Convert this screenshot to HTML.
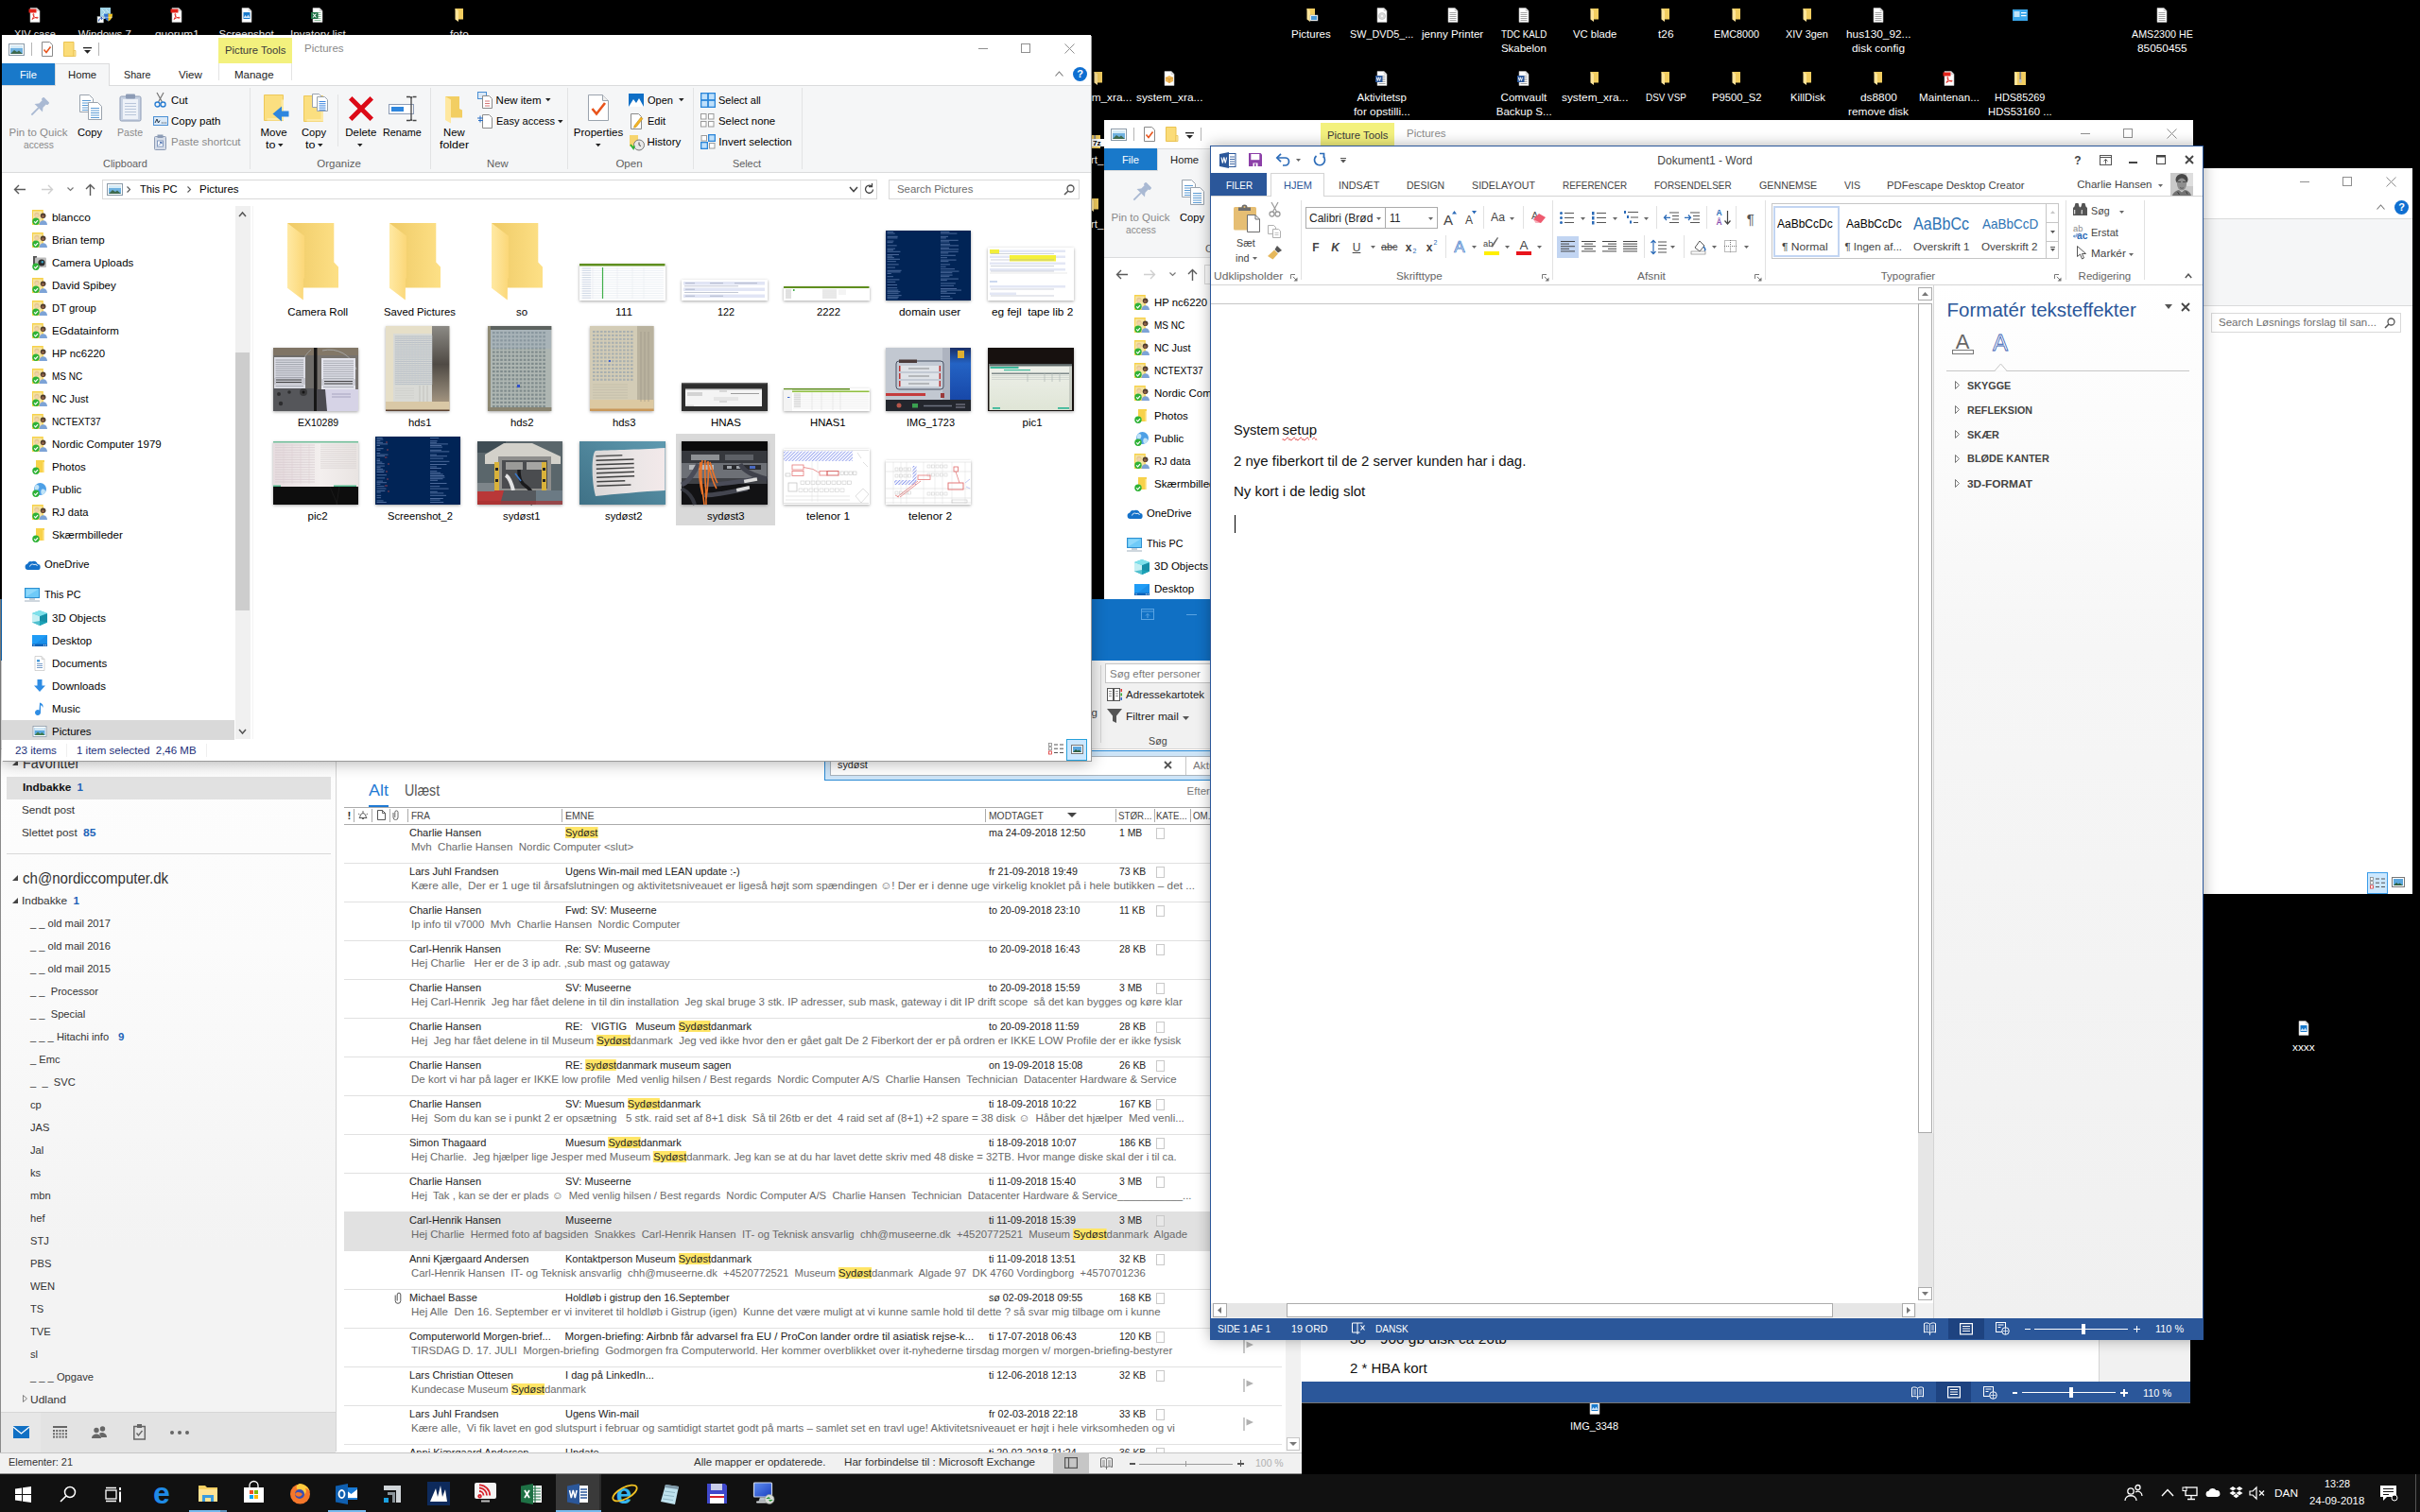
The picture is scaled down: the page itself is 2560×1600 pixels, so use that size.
<!DOCTYPE html>
<html lang="da"><head><meta charset="utf-8"><title>Desktop</title><style>
html,body{margin:0;padding:0;background:#000;}
body{width:2560px;height:1600px;position:relative;overflow:hidden;font-family:"Liberation Sans",sans-serif;}
.a{position:absolute;overflow:hidden;}
svg.a{overflow:visible;}
.t{position:absolute;white-space:pre;line-height:1;transform-origin:0 50%;}
</style></head><body>
<div class="a" style="left:0px;top:0px;width:2560px;height:1600px;background:#000;">
<svg class="a" style="left:29px;top:8px;" width="16" height="16" viewBox="0 0 16 16"><path d="M3 .5h7l3 3V15.5H3z" fill="#fff" stroke="#b9b9b9" stroke-width=".6"/><path d="M10 .5v3h3" fill="#e4e4e4" stroke="#b9b9b9" stroke-width=".5"/><rect x="1.5" y="1.5" width="8" height="4" fill="#e2231a"/><path d="M5 12.5c1.5-2 2-4 1.8-5.5-.3-1-1.2-.4-.8.8.6 1.8 2.4 3.4 4.6 3.4 1 0 .8-1-.4-.9-1.900.2-4 1-5.2 2.200z" fill="none" stroke="#e2231a" stroke-width=".9"/></svg>
<span class="t" style="left:15.02px;top:30.87px;font-size:11.5px;color:#fff;transform:scaleX(0.95);text-shadow:0 1px 2px rgba(0,0,0,.9);">XIV case</span>
<svg class="a" style="left:103px;top:8px;" width="16" height="16" viewBox="0 0 16 16"><rect x="3" y="0" width="11" height="12" fill="#9fd3e6"/><path d="M5 2l3 3-3 3M9 2l3 3" stroke="#d9f1f8" stroke-width=".8" fill="none"/><path d="M11.500 6c1.500 1 3 1 4.500.5 0 4-1.500 6.500-4.500 8-3-1.500-4.500-4-4.500-8 1.500.5 3 .5 4.500-.5z" fill="#2f6fd0"/><path d="M11.500 6v8.500c3-1.500 4.500-4 4.500-8-1.500.5-3 .5-4.500-.5z" fill="#f2c21a"/><path d="M7 10.300h9" stroke="#fff" stroke-width=".5"/><rect x="0" y="9.500" width="6.500" height="6.500" fill="#fff" stroke="#9aa" stroke-width=".5"/><path d="M1.500 14.500c0-2.500 1.500-3.500 3.500-3.500M3.500 10l1.800 1-1 1.800" stroke="#1f4fb0" stroke-width="1" fill="none"/></svg>
<span class="t" style="left:82.66px;top:30.87px;font-size:11.5px;color:#fff;text-shadow:0 1px 2px rgba(0,0,0,.9);">Windows 7</span>
<svg class="a" style="left:179px;top:8px;" width="16" height="16" viewBox="0 0 16 16"><path d="M3 .5h7l3 3V15.5H3z" fill="#fff" stroke="#b9b9b9" stroke-width=".6"/><path d="M10 .5v3h3" fill="#e4e4e4" stroke="#b9b9b9" stroke-width=".5"/><rect x="1.5" y="1.5" width="8" height="4" fill="#e2231a"/><path d="M5 12.5c1.5-2 2-4 1.8-5.5-.3-1-1.2-.4-.8.8.6 1.8 2.4 3.4 4.6 3.4 1 0 .8-1-.4-.9-1.900.2-4 1-5.2 2.200z" fill="none" stroke="#e2231a" stroke-width=".9"/></svg>
<span class="t" style="left:163.62px;top:30.87px;font-size:11.5px;color:#fff;transform:scaleX(1.03);text-shadow:0 1px 2px rgba(0,0,0,.9);">quorum1</span>
<svg class="a" style="left:253px;top:8px;" width="16" height="16" viewBox="0 0 16 16"><path d="M3 .5h7l3 3V15.5H3z" fill="#fff" stroke="#b9b9b9" stroke-width=".6"/><path d="M10 .5v3h3" fill="#e4e4e4" stroke="#b9b9b9" stroke-width=".5"/><rect x="4.500" y="5" width="7" height="7" fill="#1979ca"/><path d="M4.500 11l2-3 1.500 2 1.500-2.500 2 3.500z" fill="#cfe6fa"/></svg>
<span class="t" style="left:231.62px;top:30.87px;font-size:11.5px;color:#fff;text-shadow:0 1px 2px rgba(0,0,0,.9);">Screenshot</span>
<svg class="a" style="left:328px;top:8px;" width="16" height="16" viewBox="0 0 16 16"><path d="M3 .5h7l3 3V15.5H3z" fill="#fff" stroke="#b9b9b9" stroke-width=".6"/><path d="M10 .5v3h3" fill="#e4e4e4" stroke="#b9b9b9" stroke-width=".5"/><rect x="4.5" y="5" width="7" height=".9" fill="#7fb58f"/><rect x="4.5" y="7" width="7" height=".9" fill="#7fb58f"/><rect x="4.5" y="9" width="7" height=".9" fill="#7fb58f"/><rect x="4.5" y="11" width="7" height=".9" fill="#7fb58f"/><rect x="4.5" y="13" width="7" height=".9" fill="#7fb58f"/><rect x="1" y="5" width="7.5" height="7" fill="#1e7145"/><path d="M3 6.500l3.500 4M6.500 6.500l-3.500 4" stroke="#fff" stroke-width="1.100"/></svg>
<span class="t" style="left:306.5px;top:30.87px;font-size:11.5px;color:#fff;transform:scaleX(1.01);text-shadow:0 1px 2px rgba(0,0,0,.9);">Invatory list</span>
<svg class="a" style="left:478px;top:8px;" width="16" height="16" viewBox="0 0 16 16"><path d="M3.5 1h8.5v11.5H6z" fill="#f2cd60"/><path d="M3.5 1l3.5 2.3V15l-3.5-2.5z" fill="#ffe59a"/></svg>
<span class="t" style="left:476.12px;top:30.87px;font-size:11.5px;color:#fff;transform:scaleX(1.03);text-shadow:0 1px 2px rgba(0,0,0,.9);">foto</span>
<svg class="a" style="left:1379px;top:8px;" width="16" height="16" viewBox="0 0 16 16"><path d="M3.5 1h8.5v11.5H6z" fill="#f2cd60"/><path d="M3.5 1l3.5 2.3V15l-3.5-2.5z" fill="#ffe59a"/><rect x="7" y="8" width="8" height="6" fill="#fff" stroke="#9ab" stroke-width=".5"/><rect x="8" y="9" width="6" height="4" fill="#4b9ad8"/></svg>
<span class="t" style="left:1366.12px;top:30.87px;font-size:11.5px;color:#fff;text-shadow:0 1px 2px rgba(0,0,0,.9);">Pictures</span>
<svg class="a" style="left:1454px;top:8px;" width="16" height="16" viewBox="0 0 16 16"><path d="M3 .5h7l3 3V15.5H3z" fill="#fff" stroke="#b9b9b9" stroke-width=".6"/><path d="M10 .5v3h3" fill="#e4e4e4" stroke="#b9b9b9" stroke-width=".5"/><circle cx="8" cy="9" r="3.600" fill="#d8d8d8" stroke="#aaa" stroke-width=".5"/><circle cx="8" cy="9" r="1" fill="#fff"/></svg>
<span class="t" style="left:1428.39px;top:30.87px;font-size:11.5px;color:#fff;transform:scaleX(0.94);text-shadow:0 1px 2px rgba(0,0,0,.9);">SW_DVD5_...</span>
<svg class="a" style="left:1529px;top:8px;" width="16" height="16" viewBox="0 0 16 16"><path d="M3 .5h7l3 3V15.5H3z" fill="#fff" stroke="#b9b9b9" stroke-width=".6"/><path d="M10 .5v3h3" fill="#e4e4e4" stroke="#b9b9b9" stroke-width=".5"/><rect x="4.5" y="5" width="7" height=".9" fill="#9a9a9a"/><rect x="4.5" y="7" width="7" height=".9" fill="#9a9a9a"/><rect x="4.5" y="9" width="7" height=".9" fill="#9a9a9a"/><rect x="4.5" y="11" width="7" height=".9" fill="#9a9a9a"/><rect x="4.5" y="13" width="7" height=".9" fill="#9a9a9a"/></svg>
<span class="t" style="left:1504.25px;top:30.87px;font-size:11.5px;color:#fff;transform:scaleX(1.01);text-shadow:0 1px 2px rgba(0,0,0,.9);">jenny Printer</span>
<svg class="a" style="left:1604px;top:8px;" width="16" height="16" viewBox="0 0 16 16"><path d="M3 .5h7l3 3V15.5H3z" fill="#fff" stroke="#b9b9b9" stroke-width=".6"/><path d="M10 .5v3h3" fill="#e4e4e4" stroke="#b9b9b9" stroke-width=".5"/><rect x="4.5" y="5" width="7" height=".9" fill="#9a9a9a"/><rect x="4.5" y="7" width="7" height=".9" fill="#9a9a9a"/><rect x="4.5" y="9" width="7" height=".9" fill="#9a9a9a"/><rect x="4.5" y="11" width="7" height=".9" fill="#9a9a9a"/><rect x="4.5" y="13" width="7" height=".9" fill="#9a9a9a"/></svg>
<span class="t" style="left:1587.69px;top:30.87px;font-size:11.5px;color:#fff;transform:scaleX(0.85);text-shadow:0 1px 2px rgba(0,0,0,.9);">TDC KALD</span>
<span class="t" style="left:1587.9px;top:45.97px;font-size:11.5px;color:#fff;text-shadow:0 1px 2px rgba(0,0,0,.9);">Skabelon</span>
<svg class="a" style="left:1679px;top:8px;" width="16" height="16" viewBox="0 0 16 16"><path d="M3.5 1h8.5v11.5H6z" fill="#f2cd60"/><path d="M3.5 1l3.5 2.3V15l-3.5-2.5z" fill="#ffe59a"/></svg>
<span class="t" style="left:1663.82px;top:30.87px;font-size:11.5px;color:#fff;transform:scaleX(0.98);text-shadow:0 1px 2px rgba(0,0,0,.9);">VC blade</span>
<svg class="a" style="left:1754px;top:8px;" width="16" height="16" viewBox="0 0 16 16"><path d="M3.5 1h8.5v11.5H6z" fill="#f2cd60"/><path d="M3.5 1l3.5 2.3V15l-3.5-2.5z" fill="#ffe59a"/></svg>
<span class="t" style="left:1753.77px;top:30.87px;font-size:11.5px;color:#fff;transform:scaleX(1.03);text-shadow:0 1px 2px rgba(0,0,0,.9);">t26</span>
<svg class="a" style="left:1829px;top:8px;" width="16" height="16" viewBox="0 0 16 16"><path d="M3.5 1h8.5v11.5H6z" fill="#f2cd60"/><path d="M3.5 1l3.5 2.3V15l-3.5-2.5z" fill="#ffe59a"/></svg>
<span class="t" style="left:1812.85px;top:30.87px;font-size:11.5px;color:#fff;transform:scaleX(0.94);text-shadow:0 1px 2px rgba(0,0,0,.9);">EMC8000</span>
<svg class="a" style="left:1904px;top:8px;" width="16" height="16" viewBox="0 0 16 16"><path d="M3.5 1h8.5v11.5H6z" fill="#f2cd60"/><path d="M3.5 1l3.5 2.3V15l-3.5-2.5z" fill="#ffe59a"/></svg>
<span class="t" style="left:1889.41px;top:30.87px;font-size:11.5px;color:#fff;transform:scaleX(0.95);text-shadow:0 1px 2px rgba(0,0,0,.9);">XIV 3gen</span>
<svg class="a" style="left:1979px;top:8px;" width="16" height="16" viewBox="0 0 16 16"><path d="M3 .5h7l3 3V15.5H3z" fill="#fff" stroke="#b9b9b9" stroke-width=".6"/><path d="M10 .5v3h3" fill="#e4e4e4" stroke="#b9b9b9" stroke-width=".5"/><rect x="4.5" y="5" width="7" height=".9" fill="#9a9a9a"/><rect x="4.5" y="7" width="7" height=".9" fill="#9a9a9a"/><rect x="4.5" y="9" width="7" height=".9" fill="#9a9a9a"/><rect x="4.5" y="11" width="7" height=".9" fill="#9a9a9a"/><rect x="4.5" y="13" width="7" height=".9" fill="#9a9a9a"/></svg>
<span class="t" style="left:1952.75px;top:30.87px;font-size:11.5px;color:#fff;transform:scaleX(1.03);text-shadow:0 1px 2px rgba(0,0,0,.9);">hus130_92...</span>
<span class="t" style="left:1959.02px;top:45.97px;font-size:11.5px;color:#fff;transform:scaleX(1.03);text-shadow:0 1px 2px rgba(0,0,0,.9);">disk config</span>
<svg class="a" style="left:2279px;top:8px;" width="16" height="16" viewBox="0 0 16 16"><path d="M3 .5h7l3 3V15.5H3z" fill="#fff" stroke="#b9b9b9" stroke-width=".6"/><path d="M10 .5v3h3" fill="#e4e4e4" stroke="#b9b9b9" stroke-width=".5"/><rect x="4.5" y="5" width="7" height=".9" fill="#9a9a9a"/><rect x="4.5" y="7" width="7" height=".9" fill="#9a9a9a"/><rect x="4.5" y="9" width="7" height=".9" fill="#9a9a9a"/><rect x="4.5" y="11" width="7" height=".9" fill="#9a9a9a"/><rect x="4.5" y="13" width="7" height=".9" fill="#9a9a9a"/></svg>
<span class="t" style="left:2254.6px;top:30.87px;font-size:11.5px;color:#fff;transform:scaleX(0.93);text-shadow:0 1px 2px rgba(0,0,0,.9);">AMS2300 HE</span>
<span class="t" style="left:2260.65px;top:45.97px;font-size:11.5px;color:#fff;transform:scaleX(1.03);text-shadow:0 1px 2px rgba(0,0,0,.9);">85050455</span>
<svg class="a" style="left:2129px;top:10px;" width="16" height="12" viewBox="0 0 16 12"><rect width="16" height="12" fill="#3ba7ea"/><rect x="1.500" y="2" width="6" height="6" fill="#bfe4fa"/><rect x="9" y="3" width="5.500" height="1.200" fill="#fff"/><rect x="9" y="6" width="5.500" height="1.200" fill="#fff"/></svg>
<svg class="a" style="left:1154px;top:75px;" width="16" height="16" viewBox="0 0 16 16"><path d="M3.5 1h8.5v11.5H6z" fill="#f2cd60"/><path d="M3.5 1l3.5 2.3V15l-3.5-2.5z" fill="#ffe59a"/></svg>
<span class="t" style="left:1126.79px;top:97.87px;font-size:11.5px;color:#fff;transform:scaleX(1.03);text-shadow:0 1px 2px rgba(0,0,0,.9);">system_xra...</span>
<svg class="a" style="left:1229px;top:75px;" width="16" height="16" viewBox="0 0 16 16"><path d="M3 .5h7l3 3V15.5H3z" fill="#fff" stroke="#b9b9b9" stroke-width=".6"/><path d="M10 .5v3h3" fill="#e4e4e4" stroke="#b9b9b9" stroke-width=".5"/><path d="M8 5l4 2v4l-4 2-4-2V7z" fill="#f0b95a"/><path d="M8 9l4-2M8 9L4 7M8 9v4" stroke="#c98d2e" stroke-width=".6"/></svg>
<span class="t" style="left:1201.79px;top:97.87px;font-size:11.5px;color:#fff;transform:scaleX(1.03);text-shadow:0 1px 2px rgba(0,0,0,.9);">system_xra...</span>
<svg class="a" style="left:1454px;top:75px;" width="16" height="16" viewBox="0 0 16 16"><path d="M3 .5h7l3 3V15.5H3z" fill="#fff" stroke="#b9b9b9" stroke-width=".6"/><path d="M10 .5v3h3" fill="#e4e4e4" stroke="#b9b9b9" stroke-width=".5"/><rect x="4.5" y="5" width="7" height=".9" fill="#9a9a9a"/><rect x="4.5" y="7" width="7" height=".9" fill="#9a9a9a"/><rect x="4.5" y="9" width="7" height=".9" fill="#9a9a9a"/><rect x="4.5" y="11" width="7" height=".9" fill="#9a9a9a"/><rect x="4.5" y="13" width="7" height=".9" fill="#9a9a9a"/><rect x="1" y="5" width="7.5" height="7" fill="#2b579a"/><path d="M2.300 6.800l1 3.600 1.100-3.600 1.100 3.600 1-3.600" stroke="#fff" stroke-width=".9" fill="none"/></svg>
<span class="t" style="left:1435.49px;top:97.87px;font-size:11.5px;color:#fff;text-shadow:0 1px 2px rgba(0,0,0,.9);">Aktivitetsp</span>
<span class="t" style="left:1432.05px;top:112.97px;font-size:11.5px;color:#fff;transform:scaleX(1.03);text-shadow:0 1px 2px rgba(0,0,0,.9);">for opstilli...</span>
<svg class="a" style="left:1604px;top:75px;" width="16" height="16" viewBox="0 0 16 16"><path d="M3 .5h7l3 3V15.5H3z" fill="#fff" stroke="#b9b9b9" stroke-width=".6"/><path d="M10 .5v3h3" fill="#e4e4e4" stroke="#b9b9b9" stroke-width=".5"/><rect x="4.5" y="5" width="7" height=".9" fill="#9a9a9a"/><rect x="4.5" y="7" width="7" height=".9" fill="#9a9a9a"/><rect x="4.5" y="9" width="7" height=".9" fill="#9a9a9a"/><rect x="4.5" y="11" width="7" height=".9" fill="#9a9a9a"/><rect x="4.5" y="13" width="7" height=".9" fill="#9a9a9a"/><rect x="1" y="5" width="7.5" height="7" fill="#2b579a"/><path d="M2.300 6.800l1 3.600 1.100-3.600 1.100 3.600 1-3.600" stroke="#fff" stroke-width=".9" fill="none"/></svg>
<span class="t" style="left:1587.59px;top:97.87px;font-size:11.5px;color:#fff;text-shadow:0 1px 2px rgba(0,0,0,.9);">Comvault</span>
<span class="t" style="left:1582.78px;top:112.97px;font-size:11.5px;color:#fff;text-shadow:0 1px 2px rgba(0,0,0,.9);">Backup S...</span>
<svg class="a" style="left:1679px;top:75px;" width="16" height="16" viewBox="0 0 16 16"><path d="M3.5 1h8.5v11.5H6z" fill="#f2cd60"/><path d="M3.5 1l3.5 2.3V15l-3.5-2.5z" fill="#ffe59a"/></svg>
<span class="t" style="left:1651.79px;top:97.87px;font-size:11.5px;color:#fff;transform:scaleX(1.03);text-shadow:0 1px 2px rgba(0,0,0,.9);">system_xra...</span>
<svg class="a" style="left:1754px;top:75px;" width="16" height="16" viewBox="0 0 16 16"><path d="M3.5 1h8.5v11.5H6z" fill="#f2cd60"/><path d="M3.5 1l3.5 2.3V15l-3.5-2.5z" fill="#ffe59a"/></svg>
<span class="t" style="left:1740.6px;top:97.87px;font-size:11.5px;color:#fff;transform:scaleX(0.86);text-shadow:0 1px 2px rgba(0,0,0,.9);">DSV VSP</span>
<svg class="a" style="left:1829px;top:75px;" width="16" height="16" viewBox="0 0 16 16"><path d="M3.5 1h8.5v11.5H6z" fill="#f2cd60"/><path d="M3.5 1l3.5 2.3V15l-3.5-2.5z" fill="#ffe59a"/></svg>
<span class="t" style="left:1810.68px;top:97.87px;font-size:11.5px;color:#fff;transform:scaleX(0.98);text-shadow:0 1px 2px rgba(0,0,0,.9);">P9500_S2</span>
<svg class="a" style="left:1904px;top:75px;" width="16" height="16" viewBox="0 0 16 16"><path d="M3.5 1h8.5v11.5H6z" fill="#f2cd60"/><path d="M3.5 1l3.5 2.3V15l-3.5-2.5z" fill="#ffe59a"/></svg>
<span class="t" style="left:1893.53px;top:97.87px;font-size:11.5px;color:#fff;transform:scaleX(0.98);text-shadow:0 1px 2px rgba(0,0,0,.9);">KillDisk</span>
<svg class="a" style="left:1979px;top:75px;" width="16" height="16" viewBox="0 0 16 16"><path d="M3.5 1h8.5v11.5H6z" fill="#f2cd60"/><path d="M3.5 1l3.5 2.3V15l-3.5-2.5z" fill="#ffe59a"/></svg>
<span class="t" style="left:1967.57px;top:97.87px;font-size:11.5px;color:#fff;transform:scaleX(1.03);text-shadow:0 1px 2px rgba(0,0,0,.9);">ds8800</span>
<span class="t" style="left:1955.07px;top:112.97px;font-size:11.5px;color:#fff;transform:scaleX(1.03);text-shadow:0 1px 2px rgba(0,0,0,.9);">remove disk</span>
<svg class="a" style="left:2054px;top:75px;" width="16" height="16" viewBox="0 0 16 16"><path d="M3 .5h7l3 3V15.5H3z" fill="#fff" stroke="#b9b9b9" stroke-width=".6"/><path d="M10 .5v3h3" fill="#e4e4e4" stroke="#b9b9b9" stroke-width=".5"/><rect x="1.5" y="1.5" width="8" height="4" fill="#e2231a"/><path d="M5 12.5c1.5-2 2-4 1.8-5.5-.3-1-1.2-.4-.8.8.6 1.8 2.4 3.4 4.6 3.4 1 0 .8-1-.4-.9-1.900.2-4 1-5.2 2.200z" fill="none" stroke="#e2231a" stroke-width=".9"/></svg>
<span class="t" style="left:2029.93px;top:97.87px;font-size:11.5px;color:#fff;transform:scaleX(1.01);text-shadow:0 1px 2px rgba(0,0,0,.9);">Maintenan...</span>
<svg class="a" style="left:2129px;top:75px;" width="16" height="16" viewBox="0 0 16 16"><path d="M2 1h12v14H2z" fill="#f2cd60"/><path d="M2 1l3 1.500V15H2z" fill="#ffe59a"/><rect x="7.300" y="1" width="1.800" height="10" fill="#8a8a8a"/><rect x="6.800" y="9" width="2.800" height="3.500" fill="#bdbdbd"/></svg>
<span class="t" style="left:2110.14px;top:97.87px;font-size:11.5px;color:#fff;transform:scaleX(0.95);text-shadow:0 1px 2px rgba(0,0,0,.9);">HDS85269</span>
<span class="t" style="left:2103.17px;top:112.97px;font-size:11.5px;color:#fff;transform:scaleX(0.98);text-shadow:0 1px 2px rgba(0,0,0,.9);">HDS53160 ...</span>
<svg class="a" style="left:1150px;top:142px;" width="16" height="16" viewBox="0 0 16 16"><path d="M2 1h12v14H2z" fill="#f2cd60"/><path d="M2 1l3 1.500V15H2z" fill="#ffe59a"/><rect x="7.300" y="1" width="1.800" height="10" fill="#8a8a8a"/><rect x="6.800" y="9" width="2.800" height="3.500" fill="#bdbdbd"/></svg>
<svg class="a" style="left:1150px;top:209px;" width="16" height="16" viewBox="0 0 16 16"><path d="M3.5 1h8.5v11.5H6z" fill="#f2cd60"/><path d="M3.5 1l3.5 2.3V15l-3.5-2.5z" fill="#ffe59a"/></svg>
<span class="t" style="left:1126.53px;top:164.27px;font-size:11.5px;color:#fff;">Report_</span>
<span class="t" style="left:1126.53px;top:232.27px;font-size:11.5px;color:#fff;">Report_</span>
<div class="a" style="left:1155px;top:147px;width:13px;height:8px;background:#fff;"></div>
<span class="t" style="left:1156px;top:147.86px;font-size:8px;color:#000;font-weight:bold;transform:scaleX(1.03);">7z</span>
<svg class="a" style="left:2429px;top:1080px;" width="16" height="16" viewBox="0 0 16 16"><path d="M3 .5h7l3 3V15.5H3z" fill="#fff" stroke="#b9b9b9" stroke-width=".6"/><path d="M10 .5v3h3" fill="#e4e4e4" stroke="#b9b9b9" stroke-width=".5"/><rect x="4.500" y="5" width="7" height="7" fill="#1979ca"/><path d="M4.500 11l2-3 1.500 2 1.500-2.500 2 3.500z" fill="#cfe6fa"/></svg>
<span class="t" style="left:2425.16px;top:1102.87px;font-size:11.5px;color:#fff;transform:scaleX(1.03);text-shadow:0 1px 2px rgba(0,0,0,.9);">xxxx</span>
<svg class="a" style="left:1679px;top:1481px;" width="16" height="16" viewBox="0 0 16 16"><path d="M3 .5h7l3 3V15.5H3z" fill="#fff" stroke="#b9b9b9" stroke-width=".6"/><path d="M10 .5v3h3" fill="#e4e4e4" stroke="#b9b9b9" stroke-width=".5"/><rect x="4.500" y="5" width="7" height="7" fill="#1979ca"/><path d="M4.500 11l2-3 1.500 2 1.500-2.500 2 3.500z" fill="#cfe6fa"/></svg>
<span class="t" style="left:1661.36px;top:1503.87px;font-size:11.5px;color:#fff;transform:scaleX(0.95);text-shadow:0 1px 2px rgba(0,0,0,.9);">IMG_3348</span>
</div>
<div class="a" style="left:2300px;top:178px;width:252px;height:768px;background:#fff;">
<div class="a" style="left:133px;top:14px;width:10px;height:1px;background:#8f8f8f;"></div>
<div class="a" style="left:178px;top:9px;width:10px;height:10px;border:1px solid #8f8f8f;box-sizing:border-box;"></div>
<svg class="a" style="left:223.5px;top:8.5px;" width="11" height="11" viewBox="0 0 11 11"><path d="M.5.5l10 10M10.500.5l-10 10" stroke="#8f8f8f" stroke-width="1"/></svg>
<div class="a" style="left:0px;top:53px;width:252px;height:1px;background:#dadbdc;"></div>
<div class="a" style="left:0px;top:54px;width:252px;height:91px;background:#f5f6f7;"></div>
<div class="a" style="left:0px;top:145px;width:252px;height:1px;background:#dadbdc;"></div>
<svg class="a" style="left:214px;top:37.5px;" width="9" height="6" viewBox="0 0 9 6"><path d="M.5 5.500l4-4.500 4 4.500" fill="none" stroke="#777" stroke-width="1.100"/></svg>
<div class="a" style="left:233px;top:34px;width:15px;height:15px;background:#0f6fd1;border-radius:8px;"></div>
<span class="t" style="left:237.14px;top:36.3px;font-size:11px;color:#fff;font-weight:bold;">?</span>
<div class="a" style="left:39px;top:153px;width:201px;height:21px;background:#fff;border:1px solid #d9d9d9;box-sizing:border-box;"></div>
<span class="t" style="left:47px;top:158.07px;font-size:11.5px;color:#6d6d6d;">Search Løsnings forslag til san...</span>
<svg class="a" style="left:222px;top:157.5px;" width="12" height="12" viewBox="0 0 12 12"><circle cx="7.500" cy="4.500" r="3.500" fill="none" stroke="#555" stroke-width="1.300"/><path d="M5 7L1 11" stroke="#555" stroke-width="1.600"/></svg>
<div class="a" style="left:204px;top:745px;width:22px;height:23px;background:#cce8ff;border:1px solid #3a9ce8;box-sizing:border-box;"></div>
<svg class="a" style="left:207px;top:750px;" width="17" height="13" viewBox="0 0 17 13"><rect x=".5" y="0.5" width="3" height="3" fill="#fff" stroke="#888" stroke-width=".8"/><rect x="6" y="1.5" width="4" height="1" fill="#555"/><rect x="12" y="1.5" width="4" height="1" fill="#555"/><rect x=".5" y="4.7" width="3" height="3" fill="#fff" stroke="#888" stroke-width=".8"/><rect x="6" y="5.7" width="4" height="1" fill="#555"/><rect x="12" y="5.7" width="4" height="1" fill="#555"/><rect x=".5" y="9" width="3" height="3" fill="#fff" stroke="#d33" stroke-width=".8"/><rect x="6" y="10" width="4" height="1" fill="#555"/><rect x="12" y="10" width="4" height="1" fill="#555"/></svg>
<svg class="a" style="left:230px;top:750px;" width="14" height="11" viewBox="0 0 14 11"><rect x=".5" y=".5" width="13" height="10" fill="#fff" stroke="#777"/><rect x="2" y="2" width="10" height="7" fill="#5aa7dd"/><path d="M2 9l3-3 2 1.500 1.500-1 3.500 2.500z" fill="#2f5f3e"/></svg>
</div>
<div class="a" style="left:1377px;top:1410px;width:940px;height:75px;background:#fff;">
<div class="a" style="left:844px;top:0px;width:96px;height:52px;background:#f1f1f1;"></div>
<div class="a" style="left:843px;top:0px;width:1px;height:52px;background:#d4d4d4;"></div>
<span class="t" style="left:51px;top:-1.33px;font-size:15px;color:#111;transform:scaleX(1.03);">38 * 900 gb disk ca 26tb</span>
<span class="t" style="left:51px;top:29.67px;font-size:15px;color:#111;">2 * HBA kort</span>
<div class="a" style="left:0px;top:52px;width:940px;height:23px;background:#2b579a;"></div>
<svg class="a" style="left:644.5px;top:56.5px;" width="13" height="14" viewBox="0 0 13 14"><path d="M.5 1.500c2.500-1.200 4.500-.5 6 .6 1.500-1.100 3.500-1.800 6-.6v9.500c-2.500-1.200-4.500-.5-6 .6-1.500-1.100-3.500-1.800-6-.6z" fill="none" stroke="#fff" stroke-width="1"/><path d="M6.500 2v12M2 4h3M2 6h3M2 8h3M8 4h3M8 6h3M8 8h3" stroke="#fff" stroke-width=".8"/></svg>
<div class="a" style="left:671px;top:52px;width:37px;height:23px;background:#1e4380;"></div>
<svg class="a" style="left:682.5px;top:57px;" width="14" height="12.5" viewBox="0 0 14 12.5"><rect x=".6" y=".6" width="12.800" height="11.300" fill="none" stroke="#fff" stroke-width="1.200"/><path d="M3 3.500h8M3 6h8M3 8.500h8" stroke="#fff" stroke-width="1"/></svg>
<svg class="a" style="left:720.5px;top:56.5px;" width="15" height="14" viewBox="0 0 15 14"><rect x=".5" y=".5" width="10" height="10" fill="none" stroke="#fff"/><path d="M2.500 3h6M2.500 5.500h3" stroke="#fff"/><circle cx="10.500" cy="9.500" r="3.800" fill="#2b579a" stroke="#fff"/><path d="M7.500 9.500h6M10.500 6v7" stroke="#fff" stroke-width=".7"/></svg>
<div class="a" style="left:752px;top:63px;width:5px;height:2px;background:#fff;"></div>
<div class="a" style="left:762px;top:63px;width:99px;height:1px;background:#fff;"></div>
<div class="a" style="left:812px;top:58px;width:4px;height:11px;background:#fff;"></div>
<div class="a" style="left:866px;top:63px;width:8px;height:2px;background:#fff;"></div>
<div class="a" style="left:869px;top:60px;width:2px;height:8px;background:#fff;"></div>
<span class="t" style="left:889.5px;top:58.79px;font-size:11px;color:#fff;transform:scaleX(0.99);">110 %</span>
<div class="a" style="left:0px;top:74px;width:940px;height:1px;background:#777;"></div>
</div>
<div class="a" style="left:1168px;top:127px;width:1152px;height:520px;background:#fff;">
<div class="a" style="left:0px;top:0px;width:1152px;height:30px;background:#fff;"></div>
<svg class="a" style="left:7px;top:9px;" width="17" height="13" viewBox="0 0 17 13"><rect x=".5" y=".5" width="16" height="12" fill="#fff" stroke="#8a9aa8"/><rect x="2" y="2" width="13" height="9" fill="#6fb1e0"/><path d="M2 11l4-4 3 2 2-1.500 4 3.500z" fill="#3e6a4e"/><rect x="2" y="2" width="13" height="3" fill="#d6ebf7"/></svg>
<div class="a" style="left:31px;top:8px;width:1px;height:14px;background:#b5b5b5;"></div>
<svg class="a" style="left:42px;top:7px;" width="12" height="16" viewBox="0 0 12 16"><path d="M.5.5h8l3 3v12H.5z" fill="#fff" stroke="#8a8a8a"/><path d="M2.500 8.500l2.500 3 4.500-6" fill="none" stroke="#e8541c" stroke-width="1.600"/></svg>
<svg class="a" style="left:65px;top:7px;" width="14" height="16" viewBox="0 0 14 16"><path d="M.5.5h10.500v15H.5z" fill="#fbdc78" stroke="#eac352"/><path d="M11 9.500h2v6h-2z" fill="#fdeaa6" stroke="#eac352" stroke-width=".8"/></svg>
<svg class="a" style="left:86px;top:13px;" width="9" height="7" viewBox="0 0 9 7"><rect x="0" y="0" width="9" height="1.300" fill="#222"/><path d="M1 3h7L4.500 6.800z" fill="#222"/></svg>
<div class="a" style="left:102px;top:8px;width:1px;height:14px;background:#b5b5b5;"></div>
<div class="a" style="left:229px;top:3px;width:78px;height:27px;background:#f3f17e;"></div>
<span class="t" style="left:235.75px;top:11.27px;font-size:11.5px;color:#3a3a3a;transform:scaleX(0.98);">Picture Tools</span>
<span class="t" style="left:320px;top:9.27px;font-size:11.5px;color:#8a8a8a;">Pictures</span>
<div class="a" style="left:1033px;top:14px;width:10px;height:1px;background:#8f8f8f;"></div>
<div class="a" style="left:1078px;top:9px;width:10px;height:10px;border:1px solid #8f8f8f;box-sizing:border-box;"></div>
<svg class="a" style="left:1123.5px;top:8.5px;" width="11" height="11" viewBox="0 0 11 11"><path d="M.5.5l10 10M10.500.5l-10 10" stroke="#8f8f8f" stroke-width="1"/></svg>
<div class="a" style="left:0px;top:30px;width:1152px;height:24px;background:#fff;"></div>
<div class="a" style="left:0px;top:53px;width:1152px;height:1px;background:#dadbdc;"></div>
<div class="a" style="left:0px;top:30px;width:56px;height:23px;background:#1979ca;"></div>
<span class="t" style="left:19px;top:36.77px;font-size:11.5px;color:#fff;transform:scaleX(0.97);">File</span>
<div class="a" style="left:56px;top:30px;width:58px;height:24px;background:#f5f6f7;border:1px solid #dadbdc;border-bottom:none;box-sizing:border-box;"></div>
<span class="t" style="left:69.8px;top:36.77px;font-size:11.5px;color:#222;transform:scaleX(0.98);">Home</span>
<span class="t" style="left:129.25px;top:36.77px;font-size:11.5px;color:#222;transform:scaleX(0.93);">Share</span>
<span class="t" style="left:187.1px;top:36.77px;font-size:11.5px;color:#222;">View</span>
<div class="a" style="left:229px;top:30px;width:1px;height:18px;background:#e4e4e4;"></div>
<div class="a" style="left:306px;top:30px;width:1px;height:18px;background:#e4e4e4;"></div>
<span class="t" style="left:246px;top:36.77px;font-size:11.5px;color:#222;">Manage</span>
<svg class="a" style="left:1114px;top:37.5px;" width="9" height="6" viewBox="0 0 9 6"><path d="M.5 5.500l4-4.500 4 4.500" fill="none" stroke="#777" stroke-width="1.100"/></svg>
<div class="a" style="left:1133px;top:34px;width:15px;height:15px;background:#0f6fd1;border-radius:8px;"></div>
<span class="t" style="left:1137.14px;top:36.3px;font-size:11px;color:#fff;font-weight:bold;">?</span>
<div class="a" style="left:0px;top:54px;width:1152px;height:91px;background:#f5f6f7;"></div>
<div class="a" style="left:0px;top:145px;width:1152px;height:1px;background:#dadbdc;"></div>
<svg class="a" style="left:28px;top:66px;" width="22" height="22" viewBox="0 0 22 22"><g transform="translate(11.500,10.500) rotate(45)" fill="#a9b9d3"><rect x="-4.500" y="-11" width="9" height="3.500" rx="1"/><rect x="-3" y="-8" width="6" height="6"/><path d="M-3-2.500h6l3 3.500h-12z"/><rect x="-.9" y="1" width="1.800" height="10.500"/></g></svg>
<span class="t" style="left:7.5px;top:97.77px;font-size:11.5px;color:#8a8a8a;">Pin to Quick</span>
<span class="t" style="left:22.5px;top:111.27px;font-size:11.5px;color:#8a8a8a;transform:scaleX(0.89);">access</span>
<svg class="a" style="left:82px;top:63px;" width="16" height="20" viewBox="0 0 16 20"><path d="M.5.5h10l4 4v14H.5z" fill="#fff" stroke="#9aa3ad"/><rect x="3" y="6" width="9" height="1" fill="#5b9bd5"/><rect x="3" y="8.5" width="9" height="1" fill="#5b9bd5"/><rect x="3" y="11" width="9" height="1" fill="#5b9bd5"/><rect x="3" y="13.5" width="9" height="1" fill="#5b9bd5"/><rect x="3" y="16" width="9" height="1" fill="#5b9bd5"/></svg>
<svg class="a" style="left:91px;top:71px;" width="16" height="20" viewBox="0 0 16 20"><path d="M.5.5h10l4 4v14H.5z" fill="#fff" stroke="#9aa3ad"/><rect x="3" y="6" width="9" height="1" fill="#5b9bd5"/><rect x="3" y="8.5" width="9" height="1" fill="#5b9bd5"/><rect x="3" y="11" width="9" height="1" fill="#5b9bd5"/><rect x="3" y="13.5" width="9" height="1" fill="#5b9bd5"/><rect x="3" y="16" width="9" height="1" fill="#5b9bd5"/></svg>
<span class="t" style="left:80px;top:97.77px;font-size:11.5px;color:#000;transform:scaleX(0.97);">Copy</span>
<svg class="a" style="left:124px;top:62px;" width="24" height="30" viewBox="0 0 24 30"><rect x="1" y="3" width="22" height="26" rx="1.500" fill="#c9d3e3" stroke="#8c9bb5"/><rect x="4" y="6" width="16" height="21" fill="#eef2f8"/><rect x="7" y=".5" width="10" height="5" rx="1" fill="#8c9bb5"/><rect x="6" y="10" width="12" height="1" fill="#b9c6da"/><rect x="6" y="13" width="12" height="1" fill="#b9c6da"/><rect x="6" y="16" width="12" height="1" fill="#b9c6da"/><rect x="6" y="19" width="12" height="1" fill="#b9c6da"/><rect x="6" y="22" width="12" height="1" fill="#b9c6da"/></svg>
<span class="t" style="left:122px;top:97.77px;font-size:11.5px;color:#8a8a8a;transform:scaleX(0.92);">Paste</span>
<svg class="a" style="left:161px;top:61px;" width="13" height="16" viewBox="0 0 13 16"><path d="M3 0l5.500 10M10 0L4.500 10" stroke="#777" stroke-width="1.200"/><circle cx="3.500" cy="12.500" r="2.500" fill="none" stroke="#2b7fd3" stroke-width="1.400"/><circle cx="9.500" cy="12.500" r="2.500" fill="none" stroke="#2b7fd3" stroke-width="1.400"/></svg>
<span class="t" style="left:179px;top:63.77px;font-size:11.5px;color:#000;transform:scaleX(0.98);">Cut</span>
<svg class="a" style="left:160px;top:86px;" width="16" height="10" viewBox="0 0 16 10"><rect x=".5" y=".5" width="15" height="9" fill="#dbe9f7" stroke="#4a8fd4"/><path d="M2 7l2-4 1.500 4 1.500-2.500M9 7h1M11 7h1M13 7h1" stroke="#234" stroke-width="1" fill="none"/></svg>
<span class="t" style="left:179px;top:86.27px;font-size:11.5px;color:#000;">Copy path</span>
<svg class="a" style="left:161px;top:105px;" width="13" height="17" viewBox="0 0 13 17"><rect x=".5" y="2.500" width="12" height="14" rx="1" fill="#d5dce8" stroke="#8c9bb5"/><rect x="3.500" y=".5" width="6" height="3.500" fill="#8c9bb5"/><rect x="3.500" y="7" width="6" height="6" fill="#fff" stroke="#6b87b5" stroke-width=".8"/><path d="M5 11.500l3-3M6 8.500h2v2" stroke="#3a62a8" stroke-width=".9" fill="none"/></svg>
<span class="t" style="left:179px;top:108.27px;font-size:11.5px;color:#8a8a8a;">Paste shortcut</span>
<span class="t" style="left:106.5px;top:131.27px;font-size:11.5px;color:#5f5f5f;transform:scaleX(0.95);">Clipboard</span>
<div class="a" style="left:262px;top:56px;width:1px;height:86px;background:#e2e3e4;"></div>
<svg class="a" style="left:12px;top:157.5px;" width="14" height="11" viewBox="0 0 14 11"><path d="M13 5.500H1.500M6 1L1.500 5.500 6 10" fill="none" stroke="#5a5a5a" stroke-width="1.400"/></svg>
<svg class="a" style="left:41px;top:157.5px;" width="14" height="11" viewBox="0 0 14 11"><path d="M1 5.500h11.500M8 1l4.500 4.500L8 10" fill="none" stroke="#cfcfcf" stroke-width="1.400"/></svg>
<svg class="a" style="left:68.5px;top:161px;" width="7" height="5" viewBox="0 0 7 5"><path d="M.5.5l3 3 3-3" fill="none" stroke="#777" stroke-width="1.200"/></svg>
<svg class="a" style="left:87.5px;top:156.5px;" width="11" height="13" viewBox="0 0 11 13"><path d="M5.500 13V1.500M1 6l4.500-4.500L10 6" fill="none" stroke="#5a5a5a" stroke-width="1.400"/></svg>
<div class="a" style="left:106px;top:153px;width:820px;height:21px;background:#fff;border:1px solid #d9d9d9;box-sizing:border-box;"></div>
<svg class="a" style="left:32px;top:185px;" width="16" height="16" viewBox="0 0 16 16"><rect x="0" y="0" width="11.800" height="16" fill="#f7d24a"/><rect x="1" y="1.500" width="9.500" height="13" fill="#f5e3a3"/><circle cx="5" cy="5.300" r="2.600" fill="#e6c88a"/><circle cx="5" cy="6" r="1.800" fill="#f0d3ae"/><path d="M1.500 13c0-4.500 7-4.500 7 0z" fill="#eadbb0"/><circle cx="11.600" cy="6.200" r="2.800" fill="#4a3a2c"/><circle cx="11.400" cy="7" r="1.800" fill="#8a5f47"/><path d="M7.500 16c0-6.500 8.500-6.500 8.500 0z" fill="#7da3d6"/><circle cx="4" cy="12.300" r="3.700" fill="#2db236"/><path d="M2.200 12.300l1.400 1.500 2.400-2.700" stroke="#fff" stroke-width="1.200" fill="none"/></svg>
<span class="t" style="left:53px;top:187.77px;font-size:11.5px;color:#000;transform:scaleX(0.99);">HP nc6220</span>
<svg class="a" style="left:32px;top:209px;" width="16" height="16" viewBox="0 0 16 16"><rect x="0" y="0" width="11.800" height="16" fill="#f7d24a"/><rect x="1" y="1.500" width="9.500" height="13" fill="#f5e3a3"/><circle cx="5" cy="5.300" r="2.600" fill="#e6c88a"/><circle cx="5" cy="6" r="1.800" fill="#f0d3ae"/><path d="M1.500 13c0-4.500 7-4.500 7 0z" fill="#eadbb0"/><circle cx="11.600" cy="6.200" r="2.800" fill="#4a3a2c"/><circle cx="11.400" cy="7" r="1.800" fill="#8a5f47"/><path d="M7.500 16c0-6.500 8.500-6.500 8.500 0z" fill="#7da3d6"/><circle cx="4" cy="12.300" r="3.700" fill="#2db236"/><path d="M2.200 12.300l1.400 1.500 2.400-2.700" stroke="#fff" stroke-width="1.200" fill="none"/></svg>
<span class="t" style="left:53px;top:211.77px;font-size:11.5px;color:#000;transform:scaleX(0.87);">MS NC</span>
<svg class="a" style="left:32px;top:233px;" width="16" height="16" viewBox="0 0 16 16"><rect x="0" y="0" width="11.800" height="16" fill="#f7d24a"/><rect x="1" y="1.500" width="9.500" height="13" fill="#f5e3a3"/><circle cx="5" cy="5.300" r="2.600" fill="#e6c88a"/><circle cx="5" cy="6" r="1.800" fill="#f0d3ae"/><path d="M1.500 13c0-4.500 7-4.500 7 0z" fill="#eadbb0"/><circle cx="11.600" cy="6.200" r="2.800" fill="#4a3a2c"/><circle cx="11.400" cy="7" r="1.800" fill="#8a5f47"/><path d="M7.500 16c0-6.500 8.500-6.500 8.500 0z" fill="#7da3d6"/><circle cx="4" cy="12.300" r="3.700" fill="#2db236"/><path d="M2.200 12.300l1.400 1.500 2.400-2.700" stroke="#fff" stroke-width="1.200" fill="none"/></svg>
<span class="t" style="left:53px;top:235.77px;font-size:11.5px;color:#000;transform:scaleX(0.94);">NC Just</span>
<svg class="a" style="left:32px;top:257px;" width="16" height="16" viewBox="0 0 16 16"><rect x="0" y="0" width="11.800" height="16" fill="#f7d24a"/><rect x="1" y="1.500" width="9.500" height="13" fill="#f5e3a3"/><circle cx="5" cy="5.300" r="2.600" fill="#e6c88a"/><circle cx="5" cy="6" r="1.800" fill="#f0d3ae"/><path d="M1.500 13c0-4.500 7-4.500 7 0z" fill="#eadbb0"/><circle cx="11.600" cy="6.200" r="2.800" fill="#4a3a2c"/><circle cx="11.400" cy="7" r="1.800" fill="#8a5f47"/><path d="M7.500 16c0-6.500 8.500-6.500 8.500 0z" fill="#7da3d6"/><circle cx="4" cy="12.300" r="3.700" fill="#2db236"/><path d="M2.200 12.300l1.400 1.500 2.400-2.700" stroke="#fff" stroke-width="1.200" fill="none"/></svg>
<span class="t" style="left:53px;top:259.77px;font-size:11.5px;color:#000;transform:scaleX(0.88);">NCTEXT37</span>
<svg class="a" style="left:32px;top:281px;" width="16" height="16" viewBox="0 0 16 16"><rect x="0" y="0" width="11.800" height="16" fill="#f7d24a"/><rect x="1" y="1.500" width="9.500" height="13" fill="#f5e3a3"/><circle cx="5" cy="5.300" r="2.600" fill="#e6c88a"/><circle cx="5" cy="6" r="1.800" fill="#f0d3ae"/><path d="M1.500 13c0-4.500 7-4.500 7 0z" fill="#eadbb0"/><circle cx="11.600" cy="6.200" r="2.800" fill="#4a3a2c"/><circle cx="11.400" cy="7" r="1.800" fill="#8a5f47"/><path d="M7.500 16c0-6.500 8.500-6.500 8.500 0z" fill="#7da3d6"/><circle cx="4" cy="12.300" r="3.700" fill="#2db236"/><path d="M2.200 12.300l1.400 1.500 2.400-2.700" stroke="#fff" stroke-width="1.200" fill="none"/></svg>
<span class="t" style="left:53px;top:283.77px;font-size:11.5px;color:#000;">Nordic Computer 1979</span>
<svg class="a" style="left:32px;top:305px;" width="16" height="16" viewBox="0 0 16 16"><path d="M4 1h9v13H4z" fill="#f7d24a"/><path d="M11.500 3H13v11h-1.500z" fill="#ffe89a"/><circle cx="4" cy="12.300" r="3.700" fill="#2db236"/><path d="M2.200 12.300l1.400 1.500 2.400-2.700" stroke="#fff" stroke-width="1.200" fill="none"/></svg>
<span class="t" style="left:53px;top:307.77px;font-size:11.5px;color:#000;">Photos</span>
<svg class="a" style="left:32px;top:329px;" width="16" height="16" viewBox="0 0 16 16"><circle cx="8.500" cy="7.500" r="6.500" fill="#4ea0e6"/><path d="M5 3c2 0 3 2 2 4s-3 2-4 1 0-5 2-5zM10 8c2-1 4 0 4 2s-3 4-4 3-1-4 0-5z" fill="#bfe3f7"/><circle cx="4" cy="12.300" r="3.700" fill="#2db236"/><path d="M2.200 12.300l1.400 1.500 2.400-2.700" stroke="#fff" stroke-width="1.200" fill="none"/></svg>
<span class="t" style="left:53px;top:331.77px;font-size:11.5px;color:#000;">Public</span>
<svg class="a" style="left:32px;top:353px;" width="16" height="16" viewBox="0 0 16 16"><rect x="0" y="0" width="11.800" height="16" fill="#f7d24a"/><rect x="1" y="1.500" width="9.500" height="13" fill="#f5e3a3"/><circle cx="5" cy="5.300" r="2.600" fill="#e6c88a"/><circle cx="5" cy="6" r="1.800" fill="#f0d3ae"/><path d="M1.500 13c0-4.500 7-4.500 7 0z" fill="#eadbb0"/><circle cx="11.600" cy="6.200" r="2.800" fill="#4a3a2c"/><circle cx="11.400" cy="7" r="1.800" fill="#8a5f47"/><path d="M7.500 16c0-6.500 8.500-6.500 8.500 0z" fill="#7da3d6"/><circle cx="4" cy="12.300" r="3.700" fill="#2db236"/><path d="M2.200 12.300l1.400 1.500 2.400-2.700" stroke="#fff" stroke-width="1.200" fill="none"/></svg>
<span class="t" style="left:53px;top:355.77px;font-size:11.5px;color:#000;transform:scaleX(0.97);">RJ data</span>
<svg class="a" style="left:32px;top:377px;" width="16" height="16" viewBox="0 0 16 16"><path d="M4 1h9v13H4z" fill="#f7d24a"/><path d="M11.500 3H13v11h-1.500z" fill="#ffe89a"/><circle cx="4" cy="12.300" r="3.700" fill="#2db236"/><path d="M2.200 12.300l1.400 1.500 2.400-2.700" stroke="#fff" stroke-width="1.200" fill="none"/></svg>
<span class="t" style="left:53px;top:379.77px;font-size:11.5px;color:#000;transform:scaleX(1.01);">Skærmbilleder</span>
<svg class="a" style="left:24px;top:409px;" width="16" height="16" viewBox="0 0 16 16"><path d="M3.500 13a3.300 3.300 0 0 1-.3-6.500 3.300 3.300 0 0 1 4.300-2.200 4.200 4.200 0 0 1 6.300 2.700 3 3 0 0 1-.3 6z" fill="#1471c9"/><path d="M5.500 9.500a3 3 0 0 1 4.500-2 2.500 2.500 0 0 1 3.500 1.500" fill="none" stroke="#fff" stroke-width=".9"/></svg>
<span class="t" style="left:45px;top:411.37px;font-size:11.5px;color:#000;transform:scaleX(0.98);">OneDrive</span>
<svg class="a" style="left:24px;top:441px;" width="16" height="16" viewBox="0 0 16 16"><rect x=".5" y="1.500" width="15" height="10" fill="#55c1f6" stroke="#2f8fd0" stroke-width="1"/><path d="M1.500 2.500h13v8h-13z" fill="#8fd8fb"/><path d="M1.500 10.500l13-8v8z" fill="#6fcaf8"/><rect x="5" y="12.500" width="6" height="1" fill="#8fa3b3"/><rect x="0" y="14.500" width="16" height="1" fill="#9fb0be"/></svg>
<span class="t" style="left:45px;top:443.17px;font-size:11.5px;color:#000;transform:scaleX(0.94);">This PC</span>
<svg class="a" style="left:32px;top:464.6px;" width="16" height="16" viewBox="0 0 16 16"><path d="M8 0l8 3v9.500L8 16 0 12.500V3z" fill="#3cc6d8"/><path d="M8 6l8-3v9.500L8 16z" fill="#168fa6"/><path d="M8 6L0 3v9.500L8 16z" fill="#c5f0f4"/><path d="M8 0l8 3-8 3-8-3z" fill="#7fe0ea"/><path d="M8 11l8 1.500L8 16 0 12.500z" fill="#1fa9bd" opacity=".7"/></svg>
<span class="t" style="left:53px;top:467.37px;font-size:11.5px;color:#000;">3D Objects</span>
<svg class="a" style="left:32px;top:488.6px;" width="16" height="16" viewBox="0 0 16 16"><rect x="0" y="2" width="16" height="12" fill="#1f9cf6"/><path d="M0 14l16-12v12z" fill="#1a8ee8"/><rect x="0" y="11.500" width="16" height="2.500" fill="#0c62b8"/><rect x="1.500" y="12.300" width="1" height="1" fill="#fff"/><rect x="12" y="12.300" width="1" height="1" fill="#fff"/><rect x="14" y="12.300" width="1" height="1" fill="#fff"/></svg>
<span class="t" style="left:53px;top:491.37px;font-size:11.5px;color:#000;">Desktop</span>
</div>
<div class="a" style="left:0px;top:634px;width:1377px;height:926px;background:#fff;">
<div class="a" style="left:0px;top:0px;width:1377px;height:65px;background:#1070c4;"></div>
<svg class="a" style="left:1207px;top:10px;" width="14" height="12" viewBox="0 0 14 12"><rect x=".5" y=".5" width="13" height="11" fill="none" stroke="#5aa3e2"/><path d="M.5 3h13M7 10V5.500M5 7.500l2-2 2 2" stroke="#5aa3e2" fill="none"/></svg>
<div class="a" style="left:1255px;top:16px;width:11px;height:1px;background:#5aa3e2;"></div>
<div class="a" style="left:0px;top:65px;width:1377px;height:93px;background:#f1f1f1;"></div>
<div class="a" style="left:0px;top:158px;width:1377px;height:1px;background:#d4d4d4;"></div>
<div class="a" style="left:1164px;top:70px;width:1px;height:82px;background:#d4d4d4;"></div>
<span class="t" style="left:1154.5px;top:114.77px;font-size:11.5px;color:#444;">g</span>
<div class="a" style="left:1169px;top:68px;width:140px;height:21px;background:#fff;border:1px solid #c6c6c6;box-sizing:border-box;"></div>
<span class="t" style="left:1174px;top:74.27px;font-size:11.5px;color:#7a7a7a;">Søg efter personer</span>
<svg class="a" style="left:1171px;top:94px;" width="16" height="14" viewBox="0 0 16 14"><rect x=".5" y=".5" width="6" height="13" fill="#fff" stroke="#555"/><rect x="7.500" y=".5" width="6" height="13" fill="#fff" stroke="#555"/><path d="M2 3.500h3M2 6h3M2 8.500h3M9 3.500h3M9 6h3M9 8.500h3" stroke="#777" stroke-width=".8"/><rect x="14.500" y="1" width="1.500" height="3" fill="#d33"/><rect x="14.500" y="5.500" width="1.500" height="3" fill="#3a3"/><rect x="14.500" y="10" width="1.500" height="3" fill="#36c"/></svg>
<span class="t" style="left:1191px;top:95.77px;font-size:11.5px;color:#222;">Adressekartotek</span>
<svg class="a" style="left:1171px;top:116px;" width="16" height="16" viewBox="0 0 16 16"><path d="M0 0h16L10 7.500V15l-4-2V7.500z" fill="#555"/></svg>
<span class="t" style="left:1191px;top:119.27px;font-size:11.5px;color:#222;transform:scaleX(1.04);">Filtrer mail</span>
<svg class="a" style="left:1251px;top:123.5px;" width="7" height="4" viewBox="0 0 7 4"><path d="M0 0h7L3.500 4z" fill="#555"/></svg>
<span class="t" style="left:1215.25px;top:144.77px;font-size:11.5px;color:#444;transform:scaleX(0.93);">Søg</span>
<div class="a" style="left:872px;top:160px;width:505px;height:32px;background:#cde4f7;border:1.300px solid #2a8ad4;box-sizing:border-box;"></div>
<div class="a" style="left:878px;top:166px;width:499px;height:21px;background:#fff;border:1px solid #a9b3bd;box-sizing:border-box;"></div>
<span class="t" style="left:885.5px;top:170.27px;font-size:11.5px;color:#222;transform:scaleX(0.94);">sydøst</span>
<svg class="a" style="left:1231px;top:171px;" width="9" height="9" viewBox="0 0 9 9"><path d="M1 1l7 7M8 1L1 8" stroke="#555" stroke-width="1.800"/></svg>
<div class="a" style="left:1254px;top:167px;width:1px;height:19px;background:#c6c6c6;"></div>
<span class="t" style="left:1261.7px;top:170.77px;font-size:11.5px;color:#7a7a7a;transform:scaleX(1.02);">Aktuel postkasse</span>
<span class="t" style="left:1255.6px;top:198.37px;font-size:11.5px;color:#7a7a7a;">Efter dato</span>
<div class="a" style="left:1px;top:160px;width:354px;height:700px;background:linear-gradient(#fdfdfd,#fbfbfb 30%,#f3f3f3 75%);"></div>
<div class="a" style="left:355px;top:160px;width:1px;height:742px;background:#d4d4d4;"></div>
<div class="a" style="left:0px;top:0px;width:1px;height:926px;background:#8a8a8a;"></div>
<svg class="a" style="left:13px;top:170px;" width="6" height="6" viewBox="0 0 6 6"><path d="M6 0v6H0z" fill="#444"/></svg>
<span class="t" style="left:23.5px;top:166.22px;font-size:16px;color:#333;transform:scaleX(0.89);">Favoritter</span>
<div class="a" style="left:7px;top:188px;width:343px;height:24px;background:#e1e1e1;"></div>
<span class="t" style="left:23.5px;top:193.77px;font-size:11.5px;color:#111;font-weight:bold;transform:scaleX(1.03);">Indbakke</span>
<span class="t" style="left:81.5px;top:193.77px;font-size:11.5px;color:#1e64b8;font-weight:bold;">1</span>
<span class="t" style="left:23px;top:217.77px;font-size:11.5px;color:#333;transform:scaleX(1.02);">Sendt post</span>
<span class="t" style="left:23px;top:241.77px;font-size:11.5px;color:#333;transform:scaleX(1.02);">Slettet post</span>
<span class="t" style="left:88px;top:241.77px;font-size:11.5px;color:#1e64b8;font-weight:bold;transform:scaleX(1.05);">85</span>
<div class="a" style="left:7px;top:269px;width:343px;height:1px;background:#d9d9d9;"></div>
<svg class="a" style="left:13px;top:292px;" width="6" height="6" viewBox="0 0 6 6"><path d="M6 0v6H0z" fill="#444"/></svg>
<span class="t" style="left:23.5px;top:287.72px;font-size:16px;color:#333;transform:scaleX(0.94);">ch@nordiccomputer.dk</span>
<svg class="a" style="left:13px;top:316px;" width="6" height="6" viewBox="0 0 6 6"><path d="M6 0v6H0z" fill="#444"/></svg>
<span class="t" style="left:23px;top:313.77px;font-size:11.5px;color:#333;transform:scaleX(1.03);">Indbakke</span>
<span class="t" style="left:77.5px;top:313.77px;font-size:11.5px;color:#1e64b8;font-weight:bold;">1</span>
<span class="t" style="left:32px;top:337.77px;font-size:11.5px;color:#333;transform:scaleX(0.97);">_ _ old mail 2017</span>
<span class="t" style="left:32px;top:361.77px;font-size:11.5px;color:#333;transform:scaleX(0.97);">_ _ old mail 2016</span>
<span class="t" style="left:32px;top:385.77px;font-size:11.5px;color:#333;transform:scaleX(0.97);">_ _ old mail 2015</span>
<span class="t" style="left:32px;top:409.77px;font-size:11.5px;color:#333;transform:scaleX(0.97);">_ _  Processor</span>
<span class="t" style="left:32px;top:433.77px;font-size:11.5px;color:#333;transform:scaleX(0.97);">_ _  Special</span>
<span class="t" style="left:32px;top:457.77px;font-size:11.5px;color:#333;transform:scaleX(0.97);">_ _ _ Hitachi info</span>
<span class="t" style="left:125px;top:457.77px;font-size:11.5px;color:#1e64b8;font-weight:bold;">9</span>
<span class="t" style="left:32px;top:481.77px;font-size:11.5px;color:#333;transform:scaleX(0.97);">_ Emc</span>
<span class="t" style="left:32px;top:505.77px;font-size:11.5px;color:#333;transform:scaleX(0.97);">_  _  SVC</span>
<span class="t" style="left:32px;top:529.77px;font-size:11.5px;color:#333;transform:scaleX(0.97);">cp</span>
<span class="t" style="left:32px;top:553.77px;font-size:11.5px;color:#333;transform:scaleX(0.97);">JAS</span>
<span class="t" style="left:32px;top:577.77px;font-size:11.5px;color:#333;transform:scaleX(0.97);">Jal</span>
<span class="t" style="left:32px;top:601.77px;font-size:11.5px;color:#333;transform:scaleX(0.97);">ks</span>
<span class="t" style="left:32px;top:625.77px;font-size:11.5px;color:#333;transform:scaleX(0.97);">mbn</span>
<span class="t" style="left:32px;top:649.77px;font-size:11.5px;color:#333;transform:scaleX(0.97);">hef</span>
<span class="t" style="left:32px;top:673.77px;font-size:11.5px;color:#333;transform:scaleX(0.97);">STJ</span>
<span class="t" style="left:32px;top:697.77px;font-size:11.5px;color:#333;transform:scaleX(0.97);">PBS</span>
<span class="t" style="left:32px;top:721.77px;font-size:11.5px;color:#333;transform:scaleX(0.97);">WEN</span>
<span class="t" style="left:32px;top:745.77px;font-size:11.5px;color:#333;transform:scaleX(0.97);">TS</span>
<span class="t" style="left:32px;top:769.77px;font-size:11.5px;color:#333;transform:scaleX(0.97);">TVE</span>
<span class="t" style="left:32px;top:793.77px;font-size:11.5px;color:#333;transform:scaleX(0.97);">sl</span>
<span class="t" style="left:32px;top:817.77px;font-size:11.5px;color:#333;transform:scaleX(0.97);">_ _ _ Opgave</span>
<svg class="a" style="left:24px;top:842px;" width="5" height="8" viewBox="0 0 5 8"><path d="M.5.5l4 3.500-4 3.500z" fill="none" stroke="#666" stroke-width=".8"/></svg>
<span class="t" style="left:32px;top:841.77px;font-size:11.5px;color:#333;transform:scaleX(1.04);">Udland</span>
<div class="a" style="left:1px;top:860px;width:354px;height:43px;background:#e3e3e3;"></div>
<div class="a" style="left:1px;top:860px;width:42px;height:43px;background:#e7e7e7;"></div>
<div class="a" style="left:1px;top:860px;width:354px;height:1px;background:#d6d6d6;"></div>
<svg class="a" style="left:14px;top:875px;" width="17" height="13" viewBox="0 0 17 13"><rect width="17" height="13" fill="#1070c4"/><path d="M0 1l8.500 7L17 1" fill="none" stroke="#fff" stroke-width="1.300"/></svg>
<svg class="a" style="left:56px;top:875px;" width="15" height="14" viewBox="0 0 15 14"><path d="M0 0h15v2H0z" fill="#666"/><rect x="0" y="4" width="2" height="2" fill="#666"/><rect x="0" y="7.3" width="2" height="2" fill="#666"/><rect x="0" y="10.6" width="2" height="2" fill="#666"/><rect x="3.2" y="4" width="2" height="2" fill="#666"/><rect x="3.2" y="7.3" width="2" height="2" fill="#666"/><rect x="3.2" y="10.6" width="2" height="2" fill="#666"/><rect x="6.5" y="4" width="2" height="2" fill="#666"/><rect x="6.5" y="7.3" width="2" height="2" fill="#666"/><rect x="6.5" y="10.6" width="2" height="2" fill="#666"/><rect x="9.7" y="4" width="2" height="2" fill="#666"/><rect x="9.7" y="7.3" width="2" height="2" fill="#666"/><rect x="9.7" y="10.6" width="2" height="2" fill="#666"/><rect x="13" y="4" width="2" height="2" fill="#666"/><rect x="13" y="7.3" width="2" height="2" fill="#666"/><rect x="13" y="10.6" width="2" height="2" fill="#666"/></svg>
<svg class="a" style="left:97px;top:875px;" width="17" height="13" viewBox="0 0 17 13"><circle cx="5" cy="4.500" r="2.700" fill="#666"/><path d="M0 13c0-6 10-6 10 0z" fill="#666"/><circle cx="11.500" cy="3" r="2.700" fill="#666"/><path d="M8 8c2-2 8-1 8 4h-6z" fill="#666"/></svg>
<svg class="a" style="left:141px;top:873px;" width="13" height="17" viewBox="0 0 13 17"><rect x=".8" y="2.500" width="11.500" height="13.500" fill="none" stroke="#666" stroke-width="1.500"/><rect x="4" y="0" width="5" height="4" fill="#666"/><path d="M3.500 9.500l2 2.500 4-5" fill="none" stroke="#666" stroke-width="1.400"/></svg>
<div class="a" style="left:179.5px;top:880px;width:4px;height:4px;background:#666;border-radius:2px;"></div>
<div class="a" style="left:188px;top:880px;width:4px;height:4px;background:#666;border-radius:2px;"></div>
<div class="a" style="left:196px;top:880px;width:4px;height:4px;background:#666;border-radius:2px;"></div>
<span class="t" style="left:390px;top:195.22px;font-size:16px;color:#1e7ad4;transform:scaleX(1.12);">Alt</span>
<div class="a" style="left:390px;top:218px;width:21px;height:2px;background:#1e7ad4;"></div>
<span class="t" style="left:428px;top:195.22px;font-size:16px;color:#555;transform:scaleX(0.89);">Ulæst</span>
<div class="a" style="left:364px;top:220px;width:1013px;height:1px;background:#ababab;"></div>
<div class="a" style="left:364px;top:238px;width:1013px;height:1px;background:#ababab;"></div>
<div class="a" style="left:374px;top:222px;width:1px;height:14px;background:#ababab;"></div>
<div class="a" style="left:393px;top:222px;width:1px;height:14px;background:#ababab;"></div>
<div class="a" style="left:412px;top:222px;width:1px;height:14px;background:#ababab;"></div>
<div class="a" style="left:431px;top:222px;width:1px;height:14px;background:#ababab;"></div>
<div class="a" style="left:594px;top:222px;width:1px;height:14px;background:#ababab;"></div>
<div class="a" style="left:1042px;top:222px;width:1px;height:14px;background:#ababab;"></div>
<div class="a" style="left:1180px;top:222px;width:1px;height:14px;background:#ababab;"></div>
<div class="a" style="left:1221px;top:222px;width:1px;height:14px;background:#ababab;"></div>
<div class="a" style="left:1259px;top:222px;width:1px;height:14px;background:#ababab;"></div>
<span class="t" style="left:367.5px;top:223.77px;font-size:11.5px;color:#333;font-weight:bold;">!</span>
<svg class="a" style="left:378px;top:223px;" width="12" height="11" viewBox="0 0 12 11"><path d="M2 8.500c1.500-1 1-5 4-5s2.500 4 4 5z" fill="none" stroke="#444" stroke-width=".9"/><path d="M6 1v2M1 4l1.500 1M11 4l-1.500 1M5 9.500h2" stroke="#444" stroke-width=".8"/></svg>
<svg class="a" style="left:398.5px;top:223px;" width="9" height="11" viewBox="0 0 9 11"><path d="M.5.5h5l3 3v7H.5z" fill="none" stroke="#444" stroke-width=".9"/><path d="M5.500.5v3h3" fill="none" stroke="#444" stroke-width=".8"/></svg>
<svg class="a" style="left:415px;top:223px;" width="7" height="11" viewBox="0 0 7 11"><path d="M1 3v5a2.500 2.500 0 0 0 5 0V2.500a1.600 1.600 0 0 0-3.200 0V8" fill="none" stroke="#555" stroke-width=".9"/></svg>
<span class="t" style="left:435px;top:224.2px;font-size:11px;color:#444;transform:scaleX(0.91);">FRA</span>
<span class="t" style="left:598px;top:224.2px;font-size:11px;color:#444;transform:scaleX(0.96);">EMNE</span>
<span class="t" style="left:1046px;top:224.2px;font-size:11px;color:#444;transform:scaleX(0.94);">MODTAGET</span>
<svg class="a" style="left:1128.5px;top:225.5px;" width="10" height="5" viewBox="0 0 10 5"><path d="M0 0h10L5 5z" fill="#444"/></svg>
<span class="t" style="left:1183px;top:224.2px;font-size:11px;color:#444;transform:scaleX(0.89);">STØR...</span>
<span class="t" style="left:1223px;top:224.2px;font-size:11px;color:#444;transform:scaleX(0.88);">KATE...</span>
<span class="t" style="left:1262px;top:224.2px;font-size:11px;color:#444;transform:scaleX(0.89);">OM...</span>
<div class="a" style="left:364px;top:279px;width:992px;height:1px;background:#e1e1e1;"></div>
<span class="t" style="left:433px;top:241.97px;font-size:11.5px;color:#222;transform:scaleX(0.96);">Charlie Hansen</span>
<span class="t" style="left:597.5px;top:241.97px;font-size:11.5px;color:#222;transform:scaleX(0.96);"><span style="background:#ffe566;color:#222">Sydøst</span></span>
<span class="t" style="left:1046px;top:241.97px;font-size:11.5px;color:#222;transform:scaleX(0.93);">ma 24-09-2018 12:50</span>
<span class="t" style="left:1184px;top:241.97px;font-size:11.5px;color:#222;transform:scaleX(0.9);">1 MB</span>
<div class="a" style="left:1223px;top:242px;width:9px;height:12px;background:#fff;border:1px solid #c9c9c9;box-sizing:border-box;"></div>
<span class="t" style="left:435px;top:257.07px;font-size:11.5px;color:#6a6a6a;">Mvh  Charlie Hansen  Nordic Computer &lt;slut&gt;</span>
<div class="a" style="left:364px;top:320px;width:992px;height:1px;background:#e1e1e1;"></div>
<span class="t" style="left:433px;top:282.97px;font-size:11.5px;color:#222;transform:scaleX(0.96);">Lars Juhl Frandsen</span>
<span class="t" style="left:597.5px;top:282.97px;font-size:11.5px;color:#222;transform:scaleX(0.96);">Ugens Win-mail med LEAN update :-)</span>
<span class="t" style="left:1046px;top:282.97px;font-size:11.5px;color:#222;transform:scaleX(0.93);">fr 21-09-2018 19:49</span>
<span class="t" style="left:1184px;top:282.97px;font-size:11.5px;color:#222;transform:scaleX(0.9);">73 KB</span>
<div class="a" style="left:1223px;top:283px;width:9px;height:12px;background:#fff;border:1px solid #c9c9c9;box-sizing:border-box;"></div>
<span class="t" style="left:435px;top:298.07px;font-size:11.5px;color:#6a6a6a;transform:scaleX(1.02);">Kære alle,  Der er 1 uge til årsafslutningen og aktivitetsniveauet er ligeså højt som spændingen ☺! Der er i denne uge virkelig knoklet på i hele butikken – det ...</span>
<div class="a" style="left:364px;top:361px;width:992px;height:1px;background:#e1e1e1;"></div>
<span class="t" style="left:433px;top:323.97px;font-size:11.5px;color:#222;transform:scaleX(0.96);">Charlie Hansen</span>
<span class="t" style="left:597.5px;top:323.97px;font-size:11.5px;color:#222;transform:scaleX(0.96);">Fwd: SV: Museerne</span>
<span class="t" style="left:1046px;top:323.97px;font-size:11.5px;color:#222;transform:scaleX(0.93);">to 20-09-2018 23:10</span>
<span class="t" style="left:1184px;top:323.97px;font-size:11.5px;color:#222;transform:scaleX(0.9);">11 KB</span>
<div class="a" style="left:1223px;top:324px;width:9px;height:12px;background:#fff;border:1px solid #c9c9c9;box-sizing:border-box;"></div>
<span class="t" style="left:435px;top:339.07px;font-size:11.5px;color:#6a6a6a;">Ip info til v7000  Mvh  Charlie Hansen  Nordic Computer</span>
<div class="a" style="left:364px;top:402px;width:992px;height:1px;background:#e1e1e1;"></div>
<span class="t" style="left:433px;top:364.97px;font-size:11.5px;color:#222;transform:scaleX(0.96);">Carl-Henrik Hansen</span>
<span class="t" style="left:597.5px;top:364.97px;font-size:11.5px;color:#222;transform:scaleX(0.96);">Re: SV: Museerne</span>
<span class="t" style="left:1046px;top:364.97px;font-size:11.5px;color:#222;transform:scaleX(0.93);">to 20-09-2018 16:43</span>
<span class="t" style="left:1184px;top:364.97px;font-size:11.5px;color:#222;transform:scaleX(0.9);">28 KB</span>
<div class="a" style="left:1223px;top:365px;width:9px;height:12px;background:#fff;border:1px solid #c9c9c9;box-sizing:border-box;"></div>
<span class="t" style="left:435px;top:380.07px;font-size:11.5px;color:#6a6a6a;">Hej Charlie   Her er de 3 ip adr. ,sub mast og gataway</span>
<div class="a" style="left:364px;top:443px;width:992px;height:1px;background:#e1e1e1;"></div>
<span class="t" style="left:433px;top:405.97px;font-size:11.5px;color:#222;transform:scaleX(0.96);">Charlie Hansen</span>
<span class="t" style="left:597.5px;top:405.97px;font-size:11.5px;color:#222;transform:scaleX(0.96);">SV: Museerne</span>
<span class="t" style="left:1046px;top:405.97px;font-size:11.5px;color:#222;transform:scaleX(0.93);">to 20-09-2018 15:59</span>
<span class="t" style="left:1184px;top:405.97px;font-size:11.5px;color:#222;transform:scaleX(0.9);">3 MB</span>
<div class="a" style="left:1223px;top:406px;width:9px;height:12px;background:#fff;border:1px solid #c9c9c9;box-sizing:border-box;"></div>
<span class="t" style="left:435px;top:421.07px;font-size:11.5px;color:#6a6a6a;">Hej Carl-Henrik  Jeg har fået delene in til din installation  Jeg skal bruge 3 stk. IP adresser, sub mask, gateway i dit IP drift scope  så det kan bygges og køre klar</span>
<div class="a" style="left:364px;top:484px;width:992px;height:1px;background:#e1e1e1;"></div>
<span class="t" style="left:433px;top:446.97px;font-size:11.5px;color:#222;transform:scaleX(0.96);">Charlie Hansen</span>
<span class="t" style="left:597.5px;top:446.97px;font-size:11.5px;color:#222;transform:scaleX(0.96);">RE:   VIGTIG   Museum <span style="background:#ffe566;color:#222">Sydøst</span>danmark</span>
<span class="t" style="left:1046px;top:446.97px;font-size:11.5px;color:#222;transform:scaleX(0.93);">to 20-09-2018 11:59</span>
<span class="t" style="left:1184px;top:446.97px;font-size:11.5px;color:#222;transform:scaleX(0.9);">28 KB</span>
<div class="a" style="left:1223px;top:447px;width:9px;height:12px;background:#fff;border:1px solid #c9c9c9;box-sizing:border-box;"></div>
<span class="t" style="left:435px;top:462.07px;font-size:11.5px;color:#6a6a6a;">Hej  Jeg har fået delene in til Museum <span style="background:#ffe566;color:#222">Sydøst</span>danmark  Jeg ved ikke hvor den er gået galt De 2 Fiberkort der er på ordren er IKKE LOW Profile der er ikke fysisk</span>
<div class="a" style="left:364px;top:525px;width:992px;height:1px;background:#e1e1e1;"></div>
<span class="t" style="left:433px;top:487.97px;font-size:11.5px;color:#222;transform:scaleX(0.96);">Charlie Hansen</span>
<span class="t" style="left:597.5px;top:487.97px;font-size:11.5px;color:#222;transform:scaleX(0.96);">RE: <span style="background:#ffe566;color:#222">sydøst</span>danmark museum sagen</span>
<span class="t" style="left:1046px;top:487.97px;font-size:11.5px;color:#222;transform:scaleX(0.93);">on 19-09-2018 15:08</span>
<span class="t" style="left:1184px;top:487.97px;font-size:11.5px;color:#222;transform:scaleX(0.9);">26 KB</span>
<div class="a" style="left:1223px;top:488px;width:9px;height:12px;background:#fff;border:1px solid #c9c9c9;box-sizing:border-box;"></div>
<span class="t" style="left:435px;top:503.07px;font-size:11.5px;color:#6a6a6a;">De kort vi har på lager er IKKE low profile  Med venlig hilsen / Best regards  Nordic Computer A/S  Charlie Hansen  Technician  Datacenter Hardware &amp; Service</span>
<div class="a" style="left:364px;top:566px;width:992px;height:1px;background:#e1e1e1;"></div>
<span class="t" style="left:433px;top:528.97px;font-size:11.5px;color:#222;transform:scaleX(0.96);">Charlie Hansen</span>
<span class="t" style="left:597.5px;top:528.97px;font-size:11.5px;color:#222;transform:scaleX(0.96);">SV: Muesum <span style="background:#ffe566;color:#222">Sydøst</span>danmark</span>
<span class="t" style="left:1046px;top:528.97px;font-size:11.5px;color:#222;transform:scaleX(0.93);">ti 18-09-2018 10:22</span>
<span class="t" style="left:1184px;top:528.97px;font-size:11.5px;color:#222;transform:scaleX(0.9);">167 KB</span>
<div class="a" style="left:1223px;top:529px;width:9px;height:12px;background:#fff;border:1px solid #c9c9c9;box-sizing:border-box;"></div>
<span class="t" style="left:435px;top:544.07px;font-size:11.5px;color:#6a6a6a;">Hej  Som du kan se i punkt 2 er opsætning   5 stk. raid set af 8+1 disk  Så til 26tb er det  4 raid set af (8+1) +2 spare = 38 disk ☺  Håber det hjælper  Med venli...</span>
<div class="a" style="left:364px;top:607px;width:992px;height:1px;background:#e1e1e1;"></div>
<span class="t" style="left:433px;top:569.97px;font-size:11.5px;color:#222;transform:scaleX(0.96);">Simon Thagaard</span>
<span class="t" style="left:597.5px;top:569.97px;font-size:11.5px;color:#222;transform:scaleX(0.96);">Muesum <span style="background:#ffe566;color:#222">Sydøst</span>danmark</span>
<span class="t" style="left:1046px;top:569.97px;font-size:11.5px;color:#222;transform:scaleX(0.93);">ti 18-09-2018 10:07</span>
<span class="t" style="left:1184px;top:569.97px;font-size:11.5px;color:#222;transform:scaleX(0.9);">186 KB</span>
<div class="a" style="left:1223px;top:570px;width:9px;height:12px;background:#fff;border:1px solid #c9c9c9;box-sizing:border-box;"></div>
<span class="t" style="left:435px;top:585.07px;font-size:11.5px;color:#6a6a6a;transform:scaleX(0.98);">Hej Charlie.  Jeg hjælper lige Jesper med Museum <span style="background:#ffe566;color:#222">Sydøst</span>danmark. Jeg kan se at du har lavet dette skriv med 48 diske = 32TB. Hvor mange diske skal der i til ca.</span>
<div class="a" style="left:364px;top:648px;width:992px;height:1px;background:#e1e1e1;"></div>
<span class="t" style="left:433px;top:610.97px;font-size:11.5px;color:#222;transform:scaleX(0.96);">Charlie Hansen</span>
<span class="t" style="left:597.5px;top:610.97px;font-size:11.5px;color:#222;transform:scaleX(0.96);">SV: Museerne</span>
<span class="t" style="left:1046px;top:610.97px;font-size:11.5px;color:#222;transform:scaleX(0.93);">ti 11-09-2018 15:40</span>
<span class="t" style="left:1184px;top:610.97px;font-size:11.5px;color:#222;transform:scaleX(0.9);">3 MB</span>
<div class="a" style="left:1223px;top:611px;width:9px;height:12px;background:#fff;border:1px solid #c9c9c9;box-sizing:border-box;"></div>
<span class="t" style="left:435px;top:626.07px;font-size:11.5px;color:#6a6a6a;transform:scaleX(0.98);">Hej  Tak , kan se der er plads ☺  Med venlig hilsen / Best regards  Nordic Computer A/S  Charlie Hansen  Technician  Datacenter Hardware &amp; Service___________...</span>
<div class="a" style="left:364px;top:648px;width:1013px;height:42px;background:#e1e1e1;"></div>
<span class="t" style="left:433px;top:651.97px;font-size:11.5px;color:#222;transform:scaleX(0.96);">Carl-Henrik Hansen</span>
<span class="t" style="left:597.5px;top:651.97px;font-size:11.5px;color:#222;transform:scaleX(0.96);">Museerne</span>
<span class="t" style="left:1046px;top:651.97px;font-size:11.5px;color:#222;transform:scaleX(0.93);">ti 11-09-2018 15:39</span>
<span class="t" style="left:1184px;top:651.97px;font-size:11.5px;color:#222;transform:scaleX(0.9);">3 MB</span>
<div class="a" style="left:1223px;top:652px;width:9px;height:12px;background:#e8e8e8;border:1px solid #c9c9c9;box-sizing:border-box;"></div>
<span class="t" style="left:435px;top:667.07px;font-size:11.5px;color:#6a6a6a;transform:scaleX(0.99);">Hej Charlie  Hermed foto af bagsiden  Snakkes  Carl-Henrik Hansen  IT- og Teknisk ansvarlig  chh@museerne.dk  +4520772521  Museum <span style="background:#ffe566;color:#222">Sydøst</span>danmark  Algade</span>
<div class="a" style="left:364px;top:730px;width:992px;height:1px;background:#e1e1e1;"></div>
<span class="t" style="left:433px;top:692.97px;font-size:11.5px;color:#222;transform:scaleX(0.96);">Anni Kjærgaard Andersen</span>
<span class="t" style="left:597.5px;top:692.97px;font-size:11.5px;color:#222;transform:scaleX(0.96);">Kontaktperson Museum <span style="background:#ffe566;color:#222">Sydøst</span>danmark</span>
<span class="t" style="left:1046px;top:692.97px;font-size:11.5px;color:#222;transform:scaleX(0.93);">ti 11-09-2018 13:51</span>
<span class="t" style="left:1184px;top:692.97px;font-size:11.5px;color:#222;transform:scaleX(0.9);">32 KB</span>
<div class="a" style="left:1223px;top:693px;width:9px;height:12px;background:#fff;border:1px solid #c9c9c9;box-sizing:border-box;"></div>
<span class="t" style="left:435px;top:708.07px;font-size:11.5px;color:#6a6a6a;transform:scaleX(0.98);">Carl-Henrik Hansen  IT- og Teknisk ansvarlig  chh@museerne.dk  +4520772521  Museum <span style="background:#ffe566;color:#222">Sydøst</span>danmark  Algade 97  DK 4760 Vordingborg  +4570701236</span>
<div class="a" style="left:364px;top:771px;width:992px;height:1px;background:#e1e1e1;"></div>
<span class="t" style="left:433px;top:733.97px;font-size:11.5px;color:#222;transform:scaleX(0.96);">Michael Basse</span>
<span class="t" style="left:597.5px;top:733.97px;font-size:11.5px;color:#222;transform:scaleX(0.96);">Holdløb i gistrup den 16.September</span>
<span class="t" style="left:1046px;top:733.97px;font-size:11.5px;color:#222;transform:scaleX(0.93);">sø 02-09-2018 09:55</span>
<span class="t" style="left:1184px;top:733.97px;font-size:11.5px;color:#222;transform:scaleX(0.9);">168 KB</span>
<div class="a" style="left:1223px;top:734px;width:9px;height:12px;background:#fff;border:1px solid #c9c9c9;box-sizing:border-box;"></div>
<span class="t" style="left:435px;top:749.07px;font-size:11.5px;color:#6a6a6a;">Hej Alle  Den 16. September er vi inviteret til holdløb i Gistrup (igen)  Kunne det være muligt at vi kunne samle hold til dette ? så svar mig tilbage om i kunne</span>
<svg class="a" style="left:417px;top:733px;" width="8" height="13" viewBox="0 0 8 13"><path d="M1.200 3.500v6a2.800 2.800 0 0 0 5.600 0V3a1.800 1.800 0 0 0-3.600 0v6.500" fill="none" stroke="#555" stroke-width="1"/></svg>
<div class="a" style="left:364px;top:812px;width:992px;height:1px;background:#e1e1e1;"></div>
<span class="t" style="left:433px;top:774.97px;font-size:11.5px;color:#222;transform:scaleX(0.96);">Computerworld Morgen-brief...</span>
<span class="t" style="left:597.5px;top:774.97px;font-size:11.5px;color:#222;">Morgen-briefing: Airbnb får advarsel fra EU / ProCon lander ordre til asiatisk rejse-k...</span>
<span class="t" style="left:1046px;top:774.97px;font-size:11.5px;color:#222;transform:scaleX(0.93);">ti 17-07-2018 06:43</span>
<span class="t" style="left:1184px;top:774.97px;font-size:11.5px;color:#222;transform:scaleX(0.9);">120 KB</span>
<div class="a" style="left:1223px;top:775px;width:9px;height:12px;background:#fff;border:1px solid #c9c9c9;box-sizing:border-box;"></div>
<span class="t" style="left:435px;top:790.07px;font-size:11.5px;color:#6a6a6a;">TIRSDAG D. 17. JULI  Morgen-briefing  Godmorgen fra Computerworld. Her kommer overblikket over it-nyhederne tirsdag morgen v/ morgen-briefing-bestyrer</span>
<svg class="a" style="left:1315px;top:784px;" width="12" height="14" viewBox="0 0 12 14"><path d="M1 0v14" stroke="#b0b0b0" stroke-width="1.400"/><path d="M3.500 1.500L11 5 3.500 8.500z" fill="#b0b0b0"/></svg>
<div class="a" style="left:364px;top:853px;width:992px;height:1px;background:#e1e1e1;"></div>
<span class="t" style="left:433px;top:815.97px;font-size:11.5px;color:#222;transform:scaleX(0.96);">Lars Christian Ottesen</span>
<span class="t" style="left:597.5px;top:815.97px;font-size:11.5px;color:#222;transform:scaleX(0.96);">I dag på LinkedIn...</span>
<span class="t" style="left:1046px;top:815.97px;font-size:11.5px;color:#222;transform:scaleX(0.93);">ti 12-06-2018 12:13</span>
<span class="t" style="left:1184px;top:815.97px;font-size:11.5px;color:#222;transform:scaleX(0.9);">32 KB</span>
<div class="a" style="left:1223px;top:816px;width:9px;height:12px;background:#fff;border:1px solid #c9c9c9;box-sizing:border-box;"></div>
<span class="t" style="left:435px;top:831.07px;font-size:11.5px;color:#6a6a6a;transform:scaleX(0.98);">Kundecase Museum <span style="background:#ffe566;color:#222">Sydøst</span>danmark</span>
<svg class="a" style="left:1315px;top:825px;" width="12" height="14" viewBox="0 0 12 14"><path d="M1 0v14" stroke="#b0b0b0" stroke-width="1.400"/><path d="M3.500 1.500L11 5 3.500 8.500z" fill="#b0b0b0"/></svg>
<div class="a" style="left:364px;top:894px;width:992px;height:1px;background:#e1e1e1;"></div>
<span class="t" style="left:433px;top:856.97px;font-size:11.5px;color:#222;transform:scaleX(0.96);">Lars Juhl Frandsen</span>
<span class="t" style="left:597.5px;top:856.97px;font-size:11.5px;color:#222;transform:scaleX(0.96);">Ugens Win-mail</span>
<span class="t" style="left:1046px;top:856.97px;font-size:11.5px;color:#222;transform:scaleX(0.93);">fr 02-03-2018 22:18</span>
<span class="t" style="left:1184px;top:856.97px;font-size:11.5px;color:#222;transform:scaleX(0.9);">33 KB</span>
<div class="a" style="left:1223px;top:857px;width:9px;height:12px;background:#fff;border:1px solid #c9c9c9;box-sizing:border-box;"></div>
<span class="t" style="left:435px;top:872.07px;font-size:11.5px;color:#6a6a6a;">Kære alle,  Vi fik lavet en god slutspurt i februar og samtidigt startet godt på marts – samlet set en travl uge! Aktivitetsniveauet er højt i hele virksomheden og vi</span>
<svg class="a" style="left:1315px;top:866px;" width="12" height="14" viewBox="0 0 12 14"><path d="M1 0v14" stroke="#b0b0b0" stroke-width="1.400"/><path d="M3.500 1.500L11 5 3.500 8.500z" fill="#b0b0b0"/></svg>
<div class="a" style="left:364px;top:935px;width:992px;height:1px;background:#e1e1e1;"></div>
<span class="t" style="left:433px;top:897.97px;font-size:11.5px;color:#222;transform:scaleX(0.96);">Anni Kjærgaard Andersen</span>
<span class="t" style="left:597.5px;top:897.97px;font-size:11.5px;color:#222;transform:scaleX(0.96);">Update</span>
<span class="t" style="left:1046px;top:897.97px;font-size:11.5px;color:#222;transform:scaleX(0.93);">ti 20-02-2018 21:24</span>
<span class="t" style="left:1184px;top:897.97px;font-size:11.5px;color:#222;transform:scaleX(0.9);">36 KB</span>
<div class="a" style="left:1223px;top:898px;width:9px;height:12px;background:#fff;border:1px solid #c9c9c9;box-sizing:border-box;"></div>
<svg class="a" style="left:1315px;top:907px;" width="12" height="14" viewBox="0 0 12 14"><path d="M1 0v14" stroke="#b0b0b0" stroke-width="1.400"/><path d="M3.500 1.500L11 5 3.500 8.500z" fill="#b0b0b0"/></svg>
<div class="a" style="left:1360px;top:238px;width:16px;height:664px;background:#f1f1f1;"></div>
<div class="a" style="left:1361px;top:887px;width:14px;height:14px;background:#fff;border:1px solid #c6c6c6;box-sizing:border-box;"></div>
<svg class="a" style="left:1364px;top:892px;" width="8" height="4" viewBox="0 0 8 4"><path d="M0 0h8L4 4z" fill="#777"/></svg>
<div class="a" style="left:0px;top:903px;width:1377px;height:23px;background:#f1f1f1;"></div>
<div class="a" style="left:0px;top:903px;width:1377px;height:1px;background:#c6c6c6;"></div>
<div class="a" style="left:0px;top:925px;width:1377px;height:1px;background:#8a8a8a;"></div>
<span class="t" style="left:9px;top:908.07px;font-size:11.5px;color:#333;transform:scaleX(0.95);">Elementer: 21</span>
<span class="t" style="left:734px;top:908.07px;font-size:11.5px;color:#333;">Alle mapper er opdaterede.</span>
<span class="t" style="left:893px;top:908.07px;font-size:11.5px;color:#333;transform:scaleX(1.01);">Har forbindelse til : Microsoft Exchange</span>
<div class="a" style="left:1114px;top:903px;width:38px;height:22px;background:#c6c6c6;"></div>
<svg class="a" style="left:1126px;top:908px;" width="14" height="12" viewBox="0 0 14 12"><rect x=".6" y=".6" width="12.800" height="10.800" fill="none" stroke="#555" stroke-width="1.200"/><path d="M4.500 0v12" stroke="#555" stroke-width="1.200"/></svg>
<svg class="a" style="left:1164px;top:907.5px;" width="13" height="13" viewBox="0 0 13 13"><path d="M.5 1.500c3-1.500 5-.5 6 .5 1-1 3-2 6-.5v9c-3-1.500-5-.5-6 .5-1-1-3-2-6-.5z" fill="none" stroke="#555" stroke-width=".9"/><path d="M6.500 2v11M2 4h3M2 6h3M2 8h3M8 4h3M8 6h3M8 8h3" stroke="#555" stroke-width=".7"/></svg>
<div class="a" style="left:1195px;top:914px;width:6px;height:2px;background:#555;"></div>
<div class="a" style="left:1205px;top:915px;width:99px;height:1px;background:#9a9a9a;"></div>
<div class="a" style="left:1254px;top:912px;width:1px;height:6px;background:#9a9a9a;"></div>
<div class="a" style="left:1309px;top:914px;width:7px;height:2px;background:#555;"></div>
<div class="a" style="left:1312px;top:911px;width:1px;height:7px;background:#555;"></div>
<span class="t" style="left:1327.6px;top:908.77px;font-size:11.5px;color:#b0b0b0;transform:scaleX(0.91);">100 %</span>
</div>
<div class="a" style="left:1280px;top:154px;width:1051px;height:1264px;background:#fff;box-shadow:0 0 14px rgba(0,0,0,.32);">
<div class="a" style="left:0px;top:0px;width:1051px;height:1264px;border:1px solid #2b579a;box-sizing:border-box;z-index:5;pointer-events:none;"></div>
<svg class="a" style="left:10px;top:7px;" width="18" height="17" viewBox="0 0 18 17"><rect x="7" y="1.500" width="10" height="14" fill="#fff" stroke="#2b579a"/><path d="M11 5h5M11 7.500h5M11 10h5M11 12.500h5" stroke="#2b579a" stroke-width=".9"/><path d="M0 2L10 0v17L0 15z" fill="#2b579a"/><path d="M2 5.500l1.300 6 1.500-6 1.500 6 1.300-6" stroke="#fff" stroke-width="1.100" fill="none"/></svg>
<svg class="a" style="left:41px;top:8px;" width="14" height="14" viewBox="0 0 14 14"><path d="M0 0h12.500l1.500 1.500V14H0z" fill="#8c3fa8"/><rect x="2.300" y="1" width="9" height="6.200" fill="#fff"/><rect x="4.500" y="10.500" width="5" height="3.500" fill="#fff"/><rect x="6" y="11.200" width="1.600" height="2.800" fill="#8c3fa8"/></svg>
<svg class="a" style="left:70px;top:8px;" width="15" height="13" viewBox="0 0 15 13"><path d="M1 5h8.500a4 4 0 0 1 0 8H7" fill="none" stroke="#2b6bb8" stroke-width="1.700"/><path d="M5 .8L.8 5 5 9.200" fill="none" stroke="#2b6bb8" stroke-width="1.700"/></svg>
<svg class="a" style="left:90.5px;top:14px;" width="5" height="3" viewBox="0 0 5 3"><path d="M0 0h5 L2.5 3.0 z" fill="#666"/></svg>
<svg class="a" style="left:109px;top:7.5px;" width="14" height="14" viewBox="0 0 14 14"><path d="M3.500 3A5.500 5.500 0 1 0 11 3.500" fill="none" stroke="#2b6bb8" stroke-width="1.700"/><path d="M7 .5h4.500V5" fill="none" stroke="#2b6bb8" stroke-width="1.700"/></svg>
<div class="a" style="left:138px;top:13px;width:6px;height:1px;background:#555;"></div>
<svg class="a" style="left:138px;top:15px;" width="6" height="3.6" viewBox="0 0 6 3.6"><path d="M0 0h6 L3.0 3.5999999999999996 z" fill="#555"/></svg>
<span class="t" style="left:473.3px;top:9.84px;font-size:12px;color:#444;">Dokument1 - Word</span>
<span class="t" style="left:914.33px;top:9.54px;font-size:12px;color:#444;font-weight:bold;">?</span>
<svg class="a" style="left:941px;top:9.5px;" width="13" height="11" viewBox="0 0 13 11"><rect x=".5" y=".5" width="12" height="10" fill="none" stroke="#555"/><path d="M.5 2.500h12M6.500 9.500V5M4.500 6.500l2-2 2 2" stroke="#555" fill="none"/></svg>
<div class="a" style="left:972px;top:17px;width:9px;height:2px;background:#444;"></div>
<svg class="a" style="left:1001px;top:9.5px;" width="10" height="10" viewBox="0 0 10 10"><rect x=".5" y=".5" width="9" height="9" fill="none" stroke="#444"/><rect x="0" y="0" width="10" height="2.500" fill="#444"/></svg>
<svg class="a" style="left:1030.5px;top:10px;" width="10" height="10" viewBox="0 0 10 10"><path d="M1 1l8 8M9 1L1 9" stroke="#444" stroke-width="1.900"/></svg>
<div class="a" style="left:1px;top:53px;width:1049px;height:1px;background:#d4d4d4;"></div>
<div class="a" style="left:1px;top:29px;width:59px;height:24px;background:#2b579a;"></div>
<span class="t" style="left:16.5px;top:36.77px;font-size:11.5px;color:#fff;transform:scaleX(0.86);">FILER</span>
<div class="a" style="left:64px;top:29px;width:57px;height:25px;background:#fff;border:1px solid #d4d4d4;border-bottom:none;box-sizing:border-box;"></div>
<span class="t" style="left:77.5px;top:36.77px;font-size:11.5px;color:#2b579a;transform:scaleX(0.96);">HJEM</span>
<span class="t" style="left:135.5px;top:36.77px;font-size:11.5px;color:#444;transform:scaleX(0.94);">INDSÆT</span>
<span class="t" style="left:208px;top:36.77px;font-size:11.5px;color:#444;transform:scaleX(0.91);">DESIGN</span>
<span class="t" style="left:276.5px;top:36.77px;font-size:11.5px;color:#444;transform:scaleX(0.93);">SIDELAYOUT</span>
<span class="t" style="left:373px;top:36.77px;font-size:11.5px;color:#444;transform:scaleX(0.86);">REFERENCER</span>
<span class="t" style="left:470px;top:36.77px;font-size:11.5px;color:#444;transform:scaleX(0.87);">FORSENDELSER</span>
<span class="t" style="left:580.9px;top:36.77px;font-size:11.5px;color:#444;transform:scaleX(0.93);">GENNEMSE</span>
<span class="t" style="left:670.5px;top:36.77px;font-size:11.5px;color:#444;transform:scaleX(0.92);">VIS</span>
<span class="t" style="left:716.2px;top:36.77px;font-size:11.5px;color:#444;transform:scaleX(0.99);">PDFescape Desktop Creator</span>
<span class="t" style="left:917.25px;top:36.27px;font-size:11.5px;color:#444;">Charlie Hansen</span>
<svg class="a" style="left:1003px;top:40.5px;" width="5" height="3" viewBox="0 0 5 3"><path d="M0 0h5 L2.5 3.0 z" fill="#666"/></svg>
<svg class="a" style="left:1016px;top:29px;" width="24" height="24" viewBox="0 0 24 24"><rect width="24" height="24" fill="#c9c9c9"/><rect x="17" y="0" width="7" height="14" fill="#dedede"/><ellipse cx="12" cy="7" rx="6.500" ry="6" fill="#474747"/><ellipse cx="12" cy="12" rx="5" ry="6.500" fill="#8e8e8e"/><path d="M8 9.500h3M13 9.500h3" stroke="#4a4a4a" stroke-width="1.200"/><path d="M10 15.500c1.500 1 3 1 4 0" stroke="#555" stroke-width=".9" fill="none"/><path d="M2 24c1-4 5-5.500 7-6l3 2.500 3-2.500c3 .5 6 2 7 6z" fill="#727272"/><path d="M7.500 20l2 3M16.500 19.500l1.500 3" stroke="#3a3a3a" stroke-width="1"/></svg>
<div class="a" style="left:1px;top:147px;width:1049px;height:1px;background:#d4d4d4;"></div>
<svg class="a" style="left:25px;top:62px;" width="28" height="30" viewBox="0 0 28 30"><rect x="0" y="3" width="24" height="24.500" rx="1.500" fill="#e6be73"/><path d="M5 7V3.500h3.500a3 3 0 0 1 6 0H18V7z" fill="#6d6d6d"/><circle cx="11.500" cy="3" r="1.100" fill="#e6be73"/><path d="M14.500 11.500h8.500l4.500 4.500V29.500h-13z" fill="#fff" stroke="#6d6d6d"/><path d="M23 11.500v4.500h4.500" fill="none" stroke="#6d6d6d"/></svg>
<span class="t" style="left:28.25px;top:97.77px;font-size:11.5px;color:#444;transform:scaleX(0.93);">Sæt</span>
<span class="t" style="left:26.75px;top:113.77px;font-size:11.5px;color:#444;transform:scaleX(0.94);">ind</span>
<svg class="a" style="left:44.5px;top:118px;" width="5" height="3" viewBox="0 0 5 3"><path d="M0 0h5 L2.5 3.0 z" fill="#666"/></svg>
<svg class="a" style="left:62px;top:60px;" width="13" height="16" viewBox="0 0 13 16"><path d="M3 0l5.500 10M10 0L4.500 10" stroke="#9a9a9a" stroke-width="1.200"/><circle cx="3.500" cy="12.500" r="2.500" fill="none" stroke="#9a9a9a" stroke-width="1.300"/><circle cx="9.500" cy="12.500" r="2.500" fill="none" stroke="#9a9a9a" stroke-width="1.300"/></svg>
<svg class="a" style="left:61px;top:84px;" width="15" height="14" viewBox="0 0 15 14"><path d="M.5.5h6l2 2v7h-8z" fill="#fff" stroke="#b0b0b0"/><path d="M5.500 4.500h6l2 2v7h-8z" fill="#fff" stroke="#b0b0b0"/><path d="M7.500 8.500h4M7.500 10.500h4" stroke="#c4c4c4"/></svg>
<svg class="a" style="left:61px;top:106px;" width="16" height="15" viewBox="0 0 16 15"><path d="M10 0l5 5-4 2.500L7.500 4z" fill="#555"/><path d="M7 4.500l4 4-5.500 6L0 11z" fill="#e6b85c"/></svg>
<span class="t" style="left:4px;top:133.27px;font-size:11.5px;color:#666;transform:scaleX(1.05);">Udklipsholder</span>
<svg class="a" style="left:85px;top:135.5px;" width="8" height="8" viewBox="0 0 8 8"><path d="M.5 5V.5H5M2.800 2.800L6.500 6.500" fill="none" stroke="#777" stroke-width="1"/><path d="M7.500 3.500V7.500H3.500z" fill="#777"/></svg>
<div class="a" style="left:96px;top:58px;width:1px;height:84px;background:#e1e1e1;"></div>
<div class="a" style="left:101px;top:65px;width:85px;height:23px;background:#fff;border:1px solid #ababab;box-sizing:border-box;"></div>
<span class="t" style="left:105px;top:71.31px;font-size:12.5px;color:#222;transform:scaleX(0.96);">Calibri (Brød</span>
<svg class="a" style="left:176px;top:75.5px;" width="5" height="3" viewBox="0 0 5 3"><path d="M0 0h5 L2.5 3.0 z" fill="#666"/></svg>
<div class="a" style="left:185px;top:65px;width:56px;height:23px;background:#fff;border:1px solid #ababab;box-sizing:border-box;"></div>
<span class="t" style="left:189.5px;top:71.31px;font-size:12.5px;color:#222;transform:scaleX(0.89);">11</span>
<svg class="a" style="left:231px;top:75.5px;" width="5" height="3" viewBox="0 0 5 3"><path d="M0 0h5 L2.5 3.0 z" fill="#666"/></svg>
<span class="t" style="left:247px;top:70.68px;font-size:15px;color:#444;">A</span>
<svg class="a" style="left:256px;top:69px;" width="5" height="3.5" viewBox="0 0 5 3.5"><path d="M0 3.500h5L2.500 0z" fill="#2b6bb8"/></svg>
<span class="t" style="left:270px;top:73.04px;font-size:12px;color:#444;">A</span>
<svg class="a" style="left:277px;top:69px;" width="5" height="3.5" viewBox="0 0 5 3.5"><path d="M0 0h5L2.500 3.500z" fill="#2b6bb8"/></svg>
<div class="a" style="left:289px;top:64px;width:1px;height:24px;background:#e1e1e1;"></div>
<span class="t" style="left:297px;top:70.31px;font-size:12.5px;color:#444;transform:scaleX(0.98);">Aa</span>
<svg class="a" style="left:317px;top:75.5px;" width="5" height="3" viewBox="0 0 5 3"><path d="M0 0h5 L2.5 3.0 z" fill="#666"/></svg>
<div class="a" style="left:331px;top:64px;width:1px;height:24px;background:#e1e1e1;"></div>
<span class="t" style="left:340px;top:69px;font-size:11px;color:#555;">A</span>
<svg class="a" style="left:342px;top:72px;" width="13" height="10" viewBox="0 0 13 10"><path d="M0 6l6-6 7 4-5 6H3z" fill="#ee5a6f"/><path d="M0 6l3 4h5" fill="#f7b3bd"/></svg>
<span class="t" style="left:108.33px;top:101.54px;font-size:12px;color:#444;font-weight:bold;">F</span>
<span class="t" style="left:128.27px;top:101.54px;font-size:12px;color:#444;font-weight:bold;font-style:italic;">K</span>
<span class="t" style="left:150.67px;top:101.54px;font-size:12px;color:#444;text-decoration:underline;">U</span>
<svg class="a" style="left:169.5px;top:106px;" width="5" height="3" viewBox="0 0 5 3"><path d="M0 0h5 L2.5 3.0 z" fill="#666"/></svg>
<span class="t" style="left:181.28px;top:102.22px;font-size:10.5px;color:#444;transform:scaleX(1.03);text-decoration:line-through;">abc</span>
<span class="t" style="left:206.66px;top:101.54px;font-size:12px;color:#444;font-weight:bold;">x</span>
<span class="t" style="left:214.55px;top:107.81px;font-size:7px;color:#2b6bb8;">2</span>
<span class="t" style="left:228.66px;top:101.54px;font-size:12px;color:#444;font-weight:bold;">x</span>
<span class="t" style="left:236.55px;top:99.31px;font-size:7px;color:#2b6bb8;">2</span>
<div class="a" style="left:249px;top:95px;width:1px;height:24px;background:#e1e1e1;"></div>
<span class="t" style="left:258.33px;top:98.76px;font-size:17px;color:#fff;-webkit-text-stroke:.7px #3a78c9;">A</span>
<svg class="a" style="left:277px;top:106px;" width="5" height="3" viewBox="0 0 5 3"><path d="M0 0h5 L2.5 3.0 z" fill="#666"/></svg>
<span class="t" style="left:288.84px;top:99.91px;font-size:9px;color:#444;transform:scaleX(1.03);">ab</span>
<svg class="a" style="left:295px;top:97px;" width="10" height="11" viewBox="0 0 10 11"><path d="M2 10l7-10 1 .8-6 9.700z" fill="#666"/></svg>
<div class="a" style="left:290px;top:112px;width:16px;height:4px;background:#ffef00;"></div>
<svg class="a" style="left:312px;top:106px;" width="5" height="3" viewBox="0 0 5 3"><path d="M0 0h5 L2.5 3.0 z" fill="#666"/></svg>
<span class="t" style="left:327.5px;top:98.86px;font-size:13.5px;color:#444;">A</span>
<div class="a" style="left:324px;top:112px;width:16px;height:4px;background:#e8141c;"></div>
<svg class="a" style="left:346px;top:106px;" width="5" height="3" viewBox="0 0 5 3"><path d="M0 0h5 L2.5 3.0 z" fill="#666"/></svg>
<span class="t" style="left:196.5px;top:133.27px;font-size:11.5px;color:#666;transform:scaleX(1.02);">Skrifttype</span>
<svg class="a" style="left:350.5px;top:135.5px;" width="8" height="8" viewBox="0 0 8 8"><path d="M.5 5V.5H5M2.800 2.800L6.500 6.500" fill="none" stroke="#777" stroke-width="1"/><path d="M7.500 3.500V7.500H3.500z" fill="#777"/></svg>
<div class="a" style="left:362px;top:58px;width:1px;height:84px;background:#e1e1e1;"></div>
<svg class="a" style="left:370px;top:70px;" width="15" height="13" viewBox="0 0 15 13"><circle cx="1.500" cy="1.5" r="1.500" fill="#2b6bb8"/><rect x="5" y="1" width="10" height="1" fill="#555"/><circle cx="1.500" cy="6.5" r="1.500" fill="#2b6bb8"/><rect x="5" y="6" width="10" height="1" fill="#555"/><circle cx="1.500" cy="11.5" r="1.500" fill="#2b6bb8"/><rect x="5" y="11" width="10" height="1" fill="#555"/></svg>
<svg class="a" style="left:392px;top:75.5px;" width="5" height="3" viewBox="0 0 5 3"><path d="M0 0h5 L2.5 3.0 z" fill="#666"/></svg>
<svg class="a" style="left:404px;top:70px;" width="15" height="13" viewBox="0 0 15 13"><rect x="0" y="0" width="2.500" height="3.500" fill="#2b6bb8"/><rect x="5" y="1" width="10" height="1" fill="#555"/><rect x="0" y="5" width="2.500" height="3.500" fill="#2b6bb8"/><rect x="5" y="6" width="10" height="1" fill="#555"/><rect x="0" y="10" width="2.500" height="3.500" fill="#2b6bb8"/><rect x="5" y="11" width="10" height="1" fill="#555"/></svg>
<svg class="a" style="left:426px;top:75.5px;" width="5" height="3" viewBox="0 0 5 3"><path d="M0 0h5 L2.5 3.0 z" fill="#666"/></svg>
<svg class="a" style="left:438px;top:69px;" width="16" height="15" viewBox="0 0 16 15"><rect x="0" y="0" width="2" height="3" fill="#2b6bb8"/><rect x="4" y="1" width="11" height="1" fill="#555"/><rect x="3" y="5" width="2" height="3" fill="#2b6bb8"/><rect x="7" y="6.500" width="8" height="1" fill="#555"/><rect x="6" y="10.500" width="2" height="3" fill="#2b6bb8"/><rect x="10" y="12" width="5" height="1" fill="#555"/></svg>
<svg class="a" style="left:458.5px;top:75.5px;" width="5" height="3" viewBox="0 0 5 3"><path d="M0 0h5 L2.5 3.0 z" fill="#666"/></svg>
<div class="a" style="left:472px;top:64px;width:1px;height:24px;background:#e1e1e1;"></div>
<svg class="a" style="left:480px;top:70px;" width="16" height="13" viewBox="0 0 16 13"><path d="M6 1h10M9 4.500h7M9 8h7M6 11.500h10" stroke="#555"/><path d="M7 6.300H.5M3 3.500L.5 6.300 3 9" fill="none" stroke="#2b6bb8" stroke-width="1.300"/></svg>
<svg class="a" style="left:502px;top:70px;" width="16" height="13" viewBox="0 0 16 13"><path d="M6 1h10M9 4.500h7M9 8h7M6 11.500h10" stroke="#555"/><path d="M0 6.300h6.500M4 3.500l2.500 2.800L4 9" fill="none" stroke="#2b6bb8" stroke-width="1.300"/></svg>
<div class="a" style="left:525px;top:64px;width:1px;height:24px;background:#e1e1e1;"></div>
<span class="t" style="left:535.5px;top:67.13px;font-size:8.5px;color:#2b6bb8;font-weight:bold;">A</span>
<span class="t" style="left:535.5px;top:76.63px;font-size:8.5px;color:#8a4fb0;font-weight:bold;">Å</span>
<svg class="a" style="left:544px;top:68.5px;" width="7" height="15" viewBox="0 0 7 15"><path d="M3.500 0v14M.5 10.500l3 3.500 3-3.500" fill="none" stroke="#444" stroke-width="1.200"/></svg>
<div class="a" style="left:556px;top:64px;width:1px;height:24px;background:#e1e1e1;"></div>
<span class="t" style="left:567.67px;top:69.68px;font-size:15px;color:#555;">¶</span>
<div class="a" style="left:367px;top:96px;width:23px;height:23px;background:#c2d5f2;"></div>
<svg class="a" style="left:370.5px;top:101px;" width="15" height="12" viewBox="0 0 15 12"><rect x="0" y="0.0" width="15" height="1" fill="#444"/><rect x="0" y="2.6" width="9" height="1" fill="#444"/><rect x="0" y="5.2" width="15" height="1" fill="#444"/><rect x="0" y="7.800000000000001" width="9" height="1" fill="#444"/><rect x="0" y="10.4" width="15" height="1" fill="#444"/></svg>
<svg class="a" style="left:392.5px;top:101px;" width="15" height="12" viewBox="0 0 15 12"><rect x="0.0" y="0.0" width="15" height="1" fill="#444"/><rect x="3.0" y="2.6" width="9" height="1" fill="#444"/><rect x="0.0" y="5.2" width="15" height="1" fill="#444"/><rect x="3.0" y="7.800000000000001" width="9" height="1" fill="#444"/><rect x="0.0" y="10.4" width="15" height="1" fill="#444"/></svg>
<svg class="a" style="left:414.5px;top:101px;" width="15" height="12" viewBox="0 0 15 12"><rect x="0" y="0.0" width="15" height="1" fill="#444"/><rect x="6" y="2.6" width="9" height="1" fill="#444"/><rect x="0" y="5.2" width="15" height="1" fill="#444"/><rect x="6" y="7.800000000000001" width="9" height="1" fill="#444"/><rect x="0" y="10.4" width="15" height="1" fill="#444"/></svg>
<svg class="a" style="left:436.5px;top:101px;" width="15" height="12" viewBox="0 0 15 12"><rect x="0" y="0.0" width="15" height="1" fill="#444"/><rect x="0" y="2.6" width="15" height="1" fill="#444"/><rect x="0" y="5.2" width="15" height="1" fill="#444"/><rect x="0" y="7.800000000000001" width="15" height="1" fill="#444"/><rect x="0" y="10.4" width="15" height="1" fill="#444"/></svg>
<div class="a" style="left:459px;top:95px;width:1px;height:24px;background:#e1e1e1;"></div>
<svg class="a" style="left:466px;top:99.5px;" width="17" height="15" viewBox="0 0 17 15"><path d="M3 0v15M.5 3L3 .3 5.500 3M.5 12L3 14.700 5.500 12" fill="none" stroke="#2b6bb8" stroke-width="1.200"/><path d="M8 2h9M8 5.700h9M8 9.300h9M8 13h9" stroke="#555"/></svg>
<svg class="a" style="left:487px;top:106px;" width="5" height="3" viewBox="0 0 5 3"><path d="M0 0h5 L2.5 3.0 z" fill="#666"/></svg>
<div class="a" style="left:501px;top:95px;width:1px;height:24px;background:#e1e1e1;"></div>
<svg class="a" style="left:509px;top:99px;" width="16" height="16" viewBox="0 0 16 16"><path d="M4 9l5-7 5 5-5 6z" fill="#fff" stroke="#555"/><path d="M13 8c2 2 2.500 3.500 1 4.500" fill="none" stroke="#2b6bb8" stroke-width="1.500"/><rect x="0" y="13" width="15" height="3" fill="#fff" stroke="#888" stroke-width=".7"/></svg>
<svg class="a" style="left:531px;top:106px;" width="5" height="3" viewBox="0 0 5 3"><path d="M0 0h5 L2.5 3.0 z" fill="#666"/></svg>
<svg class="a" style="left:544px;top:100px;" width="13" height="13" viewBox="0 0 13 13"><rect x=".5" y=".5" width="12" height="12" fill="none" stroke="#777" stroke-dasharray="1 1"/><path d="M6.500 0v13M0 6.500h13" stroke="#777" stroke-dasharray="1 1"/></svg>
<svg class="a" style="left:565px;top:106px;" width="5" height="3" viewBox="0 0 5 3"><path d="M0 0h5 L2.5 3.0 z" fill="#666"/></svg>
<span class="t" style="left:452px;top:133.27px;font-size:11.5px;color:#666;transform:scaleX(1.04);">Afsnit</span>
<svg class="a" style="left:576px;top:135.5px;" width="8" height="8" viewBox="0 0 8 8"><path d="M.5 5V.5H5M2.800 2.800L6.500 6.500" fill="none" stroke="#777" stroke-width="1"/><path d="M7.500 3.500V7.500H3.500z" fill="#777"/></svg>
<div class="a" style="left:587px;top:58px;width:1px;height:84px;background:#e1e1e1;"></div>
<div class="a" style="left:594px;top:61px;width:304px;height:59px;background:#fff;border:1px solid #c6c6c6;box-sizing:border-box;"></div>
<div class="a" style="left:596px;top:64px;width:70px;height:54px;background:#fff;border:2.500px solid #c2d5f2;box-sizing:border-box;"></div>
<span class="t" style="left:600.45px;top:77.01px;font-size:12.5px;color:#000;transform:scaleX(0.96);">AaBbCcDc</span>
<span class="t" style="left:605.2px;top:101.77px;font-size:11.5px;color:#444;transform:scaleX(1.05);">¶ Normal</span>
<span class="t" style="left:672.75px;top:77.01px;font-size:12.5px;color:#000;transform:scaleX(0.96);">AaBbCcDc</span>
<span class="t" style="left:671.5px;top:101.77px;font-size:11.5px;color:#444;">¶ Ingen af...</span>
<span class="t" style="left:744.4px;top:74.74px;font-size:17.5px;color:#2e74b5;transform:scaleX(0.92);">AaBbCc</span>
<span class="t" style="left:744.15px;top:101.77px;font-size:11.5px;color:#444;transform:scaleX(1.01);">Overskrift 1</span>
<span class="t" style="left:816.5px;top:75.38px;font-size:15px;color:#2e74b5;transform:scaleX(0.9);">AaBbCcD</span>
<span class="t" style="left:816.25px;top:101.77px;font-size:11.5px;color:#444;transform:scaleX(1.01);">Overskrift 2</span>
<div class="a" style="left:884px;top:61px;width:14px;height:59px;background:#fff;border:1px solid #c6c6c6;box-sizing:border-box;"></div>
<div class="a" style="left:884px;top:81px;width:14px;height:1px;background:#c6c6c6;"></div>
<div class="a" style="left:884px;top:101px;width:14px;height:1px;background:#c6c6c6;"></div>
<svg class="a" style="left:888.5px;top:69px;" width="5" height="3" viewBox="0 0 5 3"><path d="M0 3h5L2.500 0z" fill="#c6c6c6"/></svg>
<svg class="a" style="left:888.5px;top:89.5px;" width="5" height="3" viewBox="0 0 5 3"><path d="M0 0h5L2.500 3z" fill="#555"/></svg>
<div class="a" style="left:889px;top:107px;width:5px;height:1px;background:#555;"></div>
<svg class="a" style="left:888.5px;top:109px;" width="5" height="3" viewBox="0 0 5 3"><path d="M0 0h5L2.500 3z" fill="#555"/></svg>
<span class="t" style="left:709.65px;top:133.27px;font-size:11.5px;color:#666;">Typografier</span>
<svg class="a" style="left:893px;top:135.5px;" width="8" height="8" viewBox="0 0 8 8"><path d="M.5 5V.5H5M2.800 2.800L6.500 6.500" fill="none" stroke="#777" stroke-width="1"/><path d="M7.500 3.500V7.500H3.500z" fill="#777"/></svg>
<div class="a" style="left:905px;top:58px;width:1px;height:84px;background:#e1e1e1;"></div>
<svg class="a" style="left:913px;top:60.7px;" width="15" height="13" viewBox="0 0 15 13"><path d="M2.500 0h3l1 3.500 1 1V13H0V5l1.500-1.500zM9.500 0h3l1 3.500L15 5v8H7.500V4.500l1-1z" fill="#555"/><rect x="1.200" y="7" width="1" height="4.500" fill="#fff"/><rect x="8.700" y="7" width="1" height="4.500" fill="#fff"/><rect x="6.500" y="6" width="2" height="2.500" fill="#555"/></svg>
<span class="t" style="left:932px;top:64.27px;font-size:11.5px;color:#444;transform:scaleX(0.93);">Søg</span>
<svg class="a" style="left:962px;top:68.5px;" width="5" height="3" viewBox="0 0 5 3"><path d="M0 0h5 L2.5 3.0 z" fill="#666"/></svg>
<span class="t" style="left:913px;top:84.41px;font-size:9px;color:#8a8a8a;transform:scaleX(1.03);">ab</span>
<span class="t" style="left:917px;top:91.45px;font-size:10px;color:#2b6bb8;font-weight:bold;transform:scaleX(1.03);">ac</span>
<svg class="a" style="left:912.5px;top:93px;" width="4" height="5" viewBox="0 0 4 5"><path d="M4 0v3H.5M2 1.500L.5 3 2 4.500" fill="none" stroke="#2b6bb8" stroke-width=".8"/></svg>
<span class="t" style="left:932px;top:86.77px;font-size:11.5px;color:#444;transform:scaleX(0.96);">Erstat</span>
<svg class="a" style="left:916.5px;top:106px;" width="10" height="15" viewBox="0 0 10 15"><path d="M.5.5v11l3-2.500 2 5 2-1-2-4.500h4z" fill="#fff" stroke="#444" stroke-width=".9"/></svg>
<span class="t" style="left:932px;top:109.47px;font-size:11.5px;color:#444;transform:scaleX(1.03);">Markér</span>
<svg class="a" style="left:972px;top:114px;" width="5" height="3" viewBox="0 0 5 3"><path d="M0 0h5 L2.5 3.0 z" fill="#666"/></svg>
<span class="t" style="left:918.6px;top:133.27px;font-size:11.5px;color:#666;">Redigering</span>
<div class="a" style="left:988px;top:58px;width:1px;height:84px;background:#e1e1e1;"></div>
<svg class="a" style="left:1031px;top:135px;" width="8" height="6" viewBox="0 0 8 6"><path d="M.8 5l3.200-3.800L7.200 5" fill="none" stroke="#555" stroke-width="1.500"/></svg>
<div class="a" style="left:1px;top:167px;width:748px;height:1px;background:#c6c6c6;"></div>
<span class="t" style="left:25px;top:292.98px;font-size:15px;color:#111;transform:scaleX(0.97);">System</span>
<span class="t" style="left:76.5px;top:292.98px;font-size:15px;color:#111;text-decoration:underline wavy #e03a3a;text-decoration-thickness:1px;text-underline-offset:2px;">setup</span>
<span class="t" style="left:25px;top:325.88px;font-size:15px;color:#111;">2 nye fiberkort til de 2 server kunden har i dag.</span>
<span class="t" style="left:25px;top:358.47px;font-size:15px;color:#111;">Ny kort i de ledig slot</span>
<div class="a" style="left:26px;top:391px;width:1px;height:19px;background:#000;"></div>
<div class="a" style="left:749px;top:148px;width:16px;height:1077px;background:#fff;"></div>
<div class="a" style="left:749px;top:1045px;width:16px;height:163px;background:#e6e6e6;"></div>
<div class="a" style="left:749px;top:150px;width:15px;height:14px;background:#fff;border:1px solid #ababab;box-sizing:border-box;"></div>
<svg class="a" style="left:753px;top:154.5px;" width="7" height="4" viewBox="0 0 7 4"><path d="M0 4h7L3.500 0z" fill="#777"/></svg>
<div class="a" style="left:749px;top:167px;width:15px;height:878px;background:#fff;border:1px solid #ababab;box-sizing:border-box;"></div>
<div class="a" style="left:749px;top:1208px;width:15px;height:14px;background:#fff;border:1px solid #ababab;box-sizing:border-box;"></div>
<svg class="a" style="left:753px;top:1213px;" width="7" height="4" viewBox="0 0 7 4"><path d="M0 0h7L3.500 4z" fill="#777"/></svg>
<div class="a" style="left:1px;top:1225px;width:748px;height:16px;background:#f1f1f1;"></div>
<div class="a" style="left:3px;top:1225px;width:744px;height:15px;background:#e6e6e6;"></div>
<div class="a" style="left:3px;top:1225px;width:15px;height:15px;background:#fff;border:1px solid #ababab;box-sizing:border-box;"></div>
<svg class="a" style="left:8px;top:1229px;" width="4" height="7" viewBox="0 0 4 7"><path d="M4 0v7L0 3.500z" fill="#777"/></svg>
<div class="a" style="left:81px;top:1225px;width:578px;height:15px;background:#fff;border:1px solid #ababab;box-sizing:border-box;"></div>
<div class="a" style="left:732px;top:1225px;width:14px;height:15px;background:#fff;border:1px solid #ababab;box-sizing:border-box;"></div>
<svg class="a" style="left:737px;top:1229px;" width="4" height="7" viewBox="0 0 4 7"><path d="M0 0v7l4-3.500z" fill="#777"/></svg>
<div class="a" style="left:747px;top:1225px;width:18px;height:16px;background:#f1f1f1;"></div>
<div class="a" style="left:766px;top:148px;width:284px;height:1093px;background:linear-gradient(#fff,#f6f6f6 35%,#f0f0f0);"></div>
<div class="a" style="left:765px;top:148px;width:1px;height:1093px;background:#d4d4d4;"></div>
<span class="t" style="left:779.6px;top:164.17px;font-size:20.5px;color:#2b579a;">Formatér teksteffekter</span>
<svg class="a" style="left:1010px;top:168px;" width="8" height="5" viewBox="0 0 8 5"><path d="M0 0h8L4 5z" fill="#555"/></svg>
<svg class="a" style="left:1027px;top:165.5px;" width="10" height="10" viewBox="0 0 10 10"><path d="M1 1l8 8M9 1L1 9" stroke="#444" stroke-width="1.800"/></svg>
<span class="t" style="left:788.66px;top:196.99px;font-size:22px;color:#666;">A</span>
<div class="a" style="left:785px;top:216px;width:23px;height:5px;background:#fff;border:1px solid #777;box-sizing:border-box;"></div>
<span class="t" style="left:828px;top:197.08px;font-size:24px;color:#fff;-webkit-text-stroke:.8px #3a62b5;">A</span>
<div class="a" style="left:779px;top:238px;width:257px;height:1px;background:#c6c6c6;"></div>
<svg class="a" style="left:829.5px;top:230px;" width="13" height="9" viewBox="0 0 13 9"><path d="M0 8.500L6.500 1 13 8.500" fill="#fff" stroke="#c6c6c6"/><path d="M1 8.800h11" stroke="#fbfbfb" stroke-width="1.400"/></svg>
<svg class="a" style="left:788px;top:249px;" width="5" height="9" viewBox="0 0 5 9"><path d="M.5.5l4 4-4 4z" fill="none" stroke="#666" stroke-width=".9"/></svg>
<span class="t" style="left:801px;top:248.77px;font-size:11.5px;color:#444;font-weight:bold;transform:scaleX(0.94);">SKYGGE</span>
<svg class="a" style="left:788px;top:274.9px;" width="5" height="9" viewBox="0 0 5 9"><path d="M.5.5l4 4-4 4z" fill="none" stroke="#666" stroke-width=".9"/></svg>
<span class="t" style="left:801px;top:274.67px;font-size:11.5px;color:#444;font-weight:bold;transform:scaleX(0.93);">REFLEKSION</span>
<svg class="a" style="left:788px;top:300.8px;" width="5" height="9" viewBox="0 0 5 9"><path d="M.5.5l4 4-4 4z" fill="none" stroke="#666" stroke-width=".9"/></svg>
<span class="t" style="left:801px;top:300.57px;font-size:11.5px;color:#444;font-weight:bold;transform:scaleX(0.95);">SKÆR</span>
<svg class="a" style="left:788px;top:326.5px;" width="5" height="9" viewBox="0 0 5 9"><path d="M.5.5l4 4-4 4z" fill="none" stroke="#666" stroke-width=".9"/></svg>
<span class="t" style="left:801px;top:326.27px;font-size:11.5px;color:#444;font-weight:bold;transform:scaleX(0.95);">BLØDE KANTER</span>
<svg class="a" style="left:788px;top:352.9px;" width="5" height="9" viewBox="0 0 5 9"><path d="M.5.5l4 4-4 4z" fill="none" stroke="#666" stroke-width=".9"/></svg>
<span class="t" style="left:801px;top:352.67px;font-size:11.5px;color:#444;font-weight:bold;transform:scaleX(1.03);">3D-FORMAT</span>
<div class="a" style="left:1px;top:1241px;width:1049px;height:23px;background:#2b579a;"></div>
<span class="t" style="left:8px;top:1247.29px;font-size:11px;color:#fff;transform:scaleX(0.93);">SIDE 1 AF 1</span>
<span class="t" style="left:85.5px;top:1247.29px;font-size:11px;color:#fff;transform:scaleX(0.97);">19 ORD</span>
<svg class="a" style="left:150px;top:1245px;" width="15" height="13" viewBox="0 0 15 13"><path d="M.5 1h5.500v10H.5zM6 1h5.500M6 11h2.500" fill="none" stroke="#fff" stroke-width="1"/><path d="M9.500 3.500l4 5M13.500 3.500l-4 5" stroke="#fff" stroke-width="1.200"/><path d="M6 11v2" stroke="#fff"/></svg>
<span class="t" style="left:174.5px;top:1247.29px;font-size:11px;color:#fff;transform:scaleX(0.92);">DANSK</span>
<svg class="a" style="left:755px;top:1245px;" width="13" height="14" viewBox="0 0 13 14"><path d="M.5 1.500c2.500-1.200 4.500-.5 6 .6 1.500-1.100 3.500-1.800 6-.6v9.500c-2.500-1.200-4.500-.5-6 .6-1.500-1.100-3.500-1.800-6-.6z" fill="none" stroke="#fff" stroke-width="1"/><path d="M6.500 2v12M2 4h3M2 6h3M2 8h3M8 4h3M8 6h3M8 8h3" stroke="#fff" stroke-width=".8"/></svg>
<div class="a" style="left:781px;top:1241px;width:38px;height:23px;background:#1e4380;"></div>
<svg class="a" style="left:793px;top:1245.5px;" width="14" height="12.5" viewBox="0 0 14 12.5"><rect x=".6" y=".6" width="12.800" height="11.300" fill="none" stroke="#fff" stroke-width="1.200"/><path d="M3 3.500h8M3 6h8M3 8.500h8" stroke="#fff" stroke-width="1"/></svg>
<svg class="a" style="left:831px;top:1245px;" width="15" height="14" viewBox="0 0 15 14"><rect x=".5" y=".5" width="10" height="10" fill="none" stroke="#fff"/><path d="M2.500 3h6M2.500 5.500h3" stroke="#fff"/><circle cx="10.500" cy="9.500" r="3.800" fill="#2b579a" stroke="#fff"/><path d="M7.500 9.500h6M10.500 6v7" stroke="#fff" stroke-width=".7"/></svg>
<div class="a" style="left:862px;top:1252px;width:6px;height:1px;background:#fff;"></div>
<div class="a" style="left:872px;top:1252px;width:99px;height:1px;background:#fff;"></div>
<div class="a" style="left:922px;top:1247px;width:4px;height:11px;background:#fff;"></div>
<div class="a" style="left:977px;top:1252px;width:7px;height:1px;background:#fff;"></div>
<div class="a" style="left:980px;top:1249px;width:1px;height:7px;background:#fff;"></div>
<span class="t" style="left:1000px;top:1247.29px;font-size:11px;color:#fff;transform:scaleX(0.99);">110 %</span>
</div>
<div class="a" style="left:2px;top:37px;width:1152px;height:768px;background:#fff;box-shadow:1px 1px 0 #9a9a9a,0 2px 16px rgba(0,0,0,.32);">
<div class="a" style="left:0px;top:0px;width:1152px;height:30px;background:#fff;"></div>
<svg class="a" style="left:7px;top:9px;" width="17" height="13" viewBox="0 0 17 13"><rect x=".5" y=".5" width="16" height="12" fill="#fff" stroke="#8a9aa8"/><rect x="2" y="2" width="13" height="9" fill="#6fb1e0"/><path d="M2 11l4-4 3 2 2-1.500 4 3.500z" fill="#3e6a4e"/><rect x="2" y="2" width="13" height="3" fill="#d6ebf7"/></svg>
<div class="a" style="left:31px;top:8px;width:1px;height:14px;background:#b5b5b5;"></div>
<svg class="a" style="left:42px;top:7px;" width="12" height="16" viewBox="0 0 12 16"><path d="M.5.5h8l3 3v12H.5z" fill="#fff" stroke="#8a8a8a"/><path d="M2.500 8.500l2.500 3 4.500-6" fill="none" stroke="#e8541c" stroke-width="1.600"/></svg>
<svg class="a" style="left:65px;top:7px;" width="14" height="16" viewBox="0 0 14 16"><path d="M.5.5h10.500v15H.5z" fill="#fbdc78" stroke="#eac352"/><path d="M11 9.500h2v6h-2z" fill="#fdeaa6" stroke="#eac352" stroke-width=".8"/></svg>
<svg class="a" style="left:86px;top:13px;" width="9" height="7" viewBox="0 0 9 7"><rect x="0" y="0" width="9" height="1.300" fill="#222"/><path d="M1 3h7L4.500 6.800z" fill="#222"/></svg>
<div class="a" style="left:102px;top:8px;width:1px;height:14px;background:#b5b5b5;"></div>
<div class="a" style="left:229px;top:3px;width:78px;height:27px;background:#f3f17e;"></div>
<span class="t" style="left:235.75px;top:11.27px;font-size:11.5px;color:#3a3a3a;transform:scaleX(0.98);">Picture Tools</span>
<span class="t" style="left:320px;top:9.27px;font-size:11.5px;color:#8a8a8a;">Pictures</span>
<div class="a" style="left:1033px;top:14px;width:10px;height:1px;background:#8f8f8f;"></div>
<div class="a" style="left:1078px;top:9px;width:10px;height:10px;border:1px solid #8f8f8f;box-sizing:border-box;"></div>
<svg class="a" style="left:1123.5px;top:8.5px;" width="11" height="11" viewBox="0 0 11 11"><path d="M.5.5l10 10M10.500.5l-10 10" stroke="#8f8f8f" stroke-width="1"/></svg>
<div class="a" style="left:0px;top:30px;width:1152px;height:24px;background:#fff;"></div>
<div class="a" style="left:0px;top:53px;width:1152px;height:1px;background:#dadbdc;"></div>
<div class="a" style="left:0px;top:30px;width:56px;height:23px;background:#1979ca;"></div>
<span class="t" style="left:19px;top:36.77px;font-size:11.5px;color:#fff;transform:scaleX(0.97);">File</span>
<div class="a" style="left:56px;top:30px;width:58px;height:24px;background:#f5f6f7;border:1px solid #dadbdc;border-bottom:none;box-sizing:border-box;"></div>
<span class="t" style="left:69.8px;top:36.77px;font-size:11.5px;color:#222;transform:scaleX(0.98);">Home</span>
<span class="t" style="left:129.25px;top:36.77px;font-size:11.5px;color:#222;transform:scaleX(0.93);">Share</span>
<span class="t" style="left:187.1px;top:36.77px;font-size:11.5px;color:#222;">View</span>
<div class="a" style="left:229px;top:30px;width:1px;height:18px;background:#e4e4e4;"></div>
<div class="a" style="left:306px;top:30px;width:1px;height:18px;background:#e4e4e4;"></div>
<span class="t" style="left:246px;top:36.77px;font-size:11.5px;color:#222;">Manage</span>
<svg class="a" style="left:1114px;top:37.5px;" width="9" height="6" viewBox="0 0 9 6"><path d="M.5 5.500l4-4.500 4 4.500" fill="none" stroke="#777" stroke-width="1.100"/></svg>
<div class="a" style="left:1133px;top:34px;width:15px;height:15px;background:#0f6fd1;border-radius:8px;"></div>
<span class="t" style="left:1137.14px;top:36.3px;font-size:11px;color:#fff;font-weight:bold;">?</span>
<div class="a" style="left:0px;top:54px;width:1152px;height:91px;background:#f5f6f7;"></div>
<div class="a" style="left:0px;top:145px;width:1152px;height:1px;background:#dadbdc;"></div>
<svg class="a" style="left:28px;top:66px;" width="22" height="22" viewBox="0 0 22 22"><g transform="translate(11.500,10.500) rotate(45)" fill="#a9b9d3"><rect x="-4.500" y="-11" width="9" height="3.500" rx="1"/><rect x="-3" y="-8" width="6" height="6"/><path d="M-3-2.500h6l3 3.500h-12z"/><rect x="-.9" y="1" width="1.800" height="10.500"/></g></svg>
<span class="t" style="left:7.5px;top:97.77px;font-size:11.5px;color:#8a8a8a;">Pin to Quick</span>
<span class="t" style="left:22.5px;top:111.27px;font-size:11.5px;color:#8a8a8a;transform:scaleX(0.89);">access</span>
<svg class="a" style="left:82px;top:63px;" width="16" height="20" viewBox="0 0 16 20"><path d="M.5.5h10l4 4v14H.5z" fill="#fff" stroke="#9aa3ad"/><rect x="3" y="6" width="9" height="1" fill="#5b9bd5"/><rect x="3" y="8.5" width="9" height="1" fill="#5b9bd5"/><rect x="3" y="11" width="9" height="1" fill="#5b9bd5"/><rect x="3" y="13.5" width="9" height="1" fill="#5b9bd5"/><rect x="3" y="16" width="9" height="1" fill="#5b9bd5"/></svg>
<svg class="a" style="left:91px;top:71px;" width="16" height="20" viewBox="0 0 16 20"><path d="M.5.5h10l4 4v14H.5z" fill="#fff" stroke="#9aa3ad"/><rect x="3" y="6" width="9" height="1" fill="#5b9bd5"/><rect x="3" y="8.5" width="9" height="1" fill="#5b9bd5"/><rect x="3" y="11" width="9" height="1" fill="#5b9bd5"/><rect x="3" y="13.5" width="9" height="1" fill="#5b9bd5"/><rect x="3" y="16" width="9" height="1" fill="#5b9bd5"/></svg>
<span class="t" style="left:80px;top:97.77px;font-size:11.5px;color:#000;transform:scaleX(0.97);">Copy</span>
<svg class="a" style="left:124px;top:62px;" width="24" height="30" viewBox="0 0 24 30"><rect x="1" y="3" width="22" height="26" rx="1.500" fill="#c9d3e3" stroke="#8c9bb5"/><rect x="4" y="6" width="16" height="21" fill="#eef2f8"/><rect x="7" y=".5" width="10" height="5" rx="1" fill="#8c9bb5"/><rect x="6" y="10" width="12" height="1" fill="#b9c6da"/><rect x="6" y="13" width="12" height="1" fill="#b9c6da"/><rect x="6" y="16" width="12" height="1" fill="#b9c6da"/><rect x="6" y="19" width="12" height="1" fill="#b9c6da"/><rect x="6" y="22" width="12" height="1" fill="#b9c6da"/></svg>
<span class="t" style="left:122px;top:97.77px;font-size:11.5px;color:#8a8a8a;transform:scaleX(0.92);">Paste</span>
<svg class="a" style="left:161px;top:61px;" width="13" height="16" viewBox="0 0 13 16"><path d="M3 0l5.500 10M10 0L4.500 10" stroke="#777" stroke-width="1.200"/><circle cx="3.500" cy="12.500" r="2.500" fill="none" stroke="#2b7fd3" stroke-width="1.400"/><circle cx="9.500" cy="12.500" r="2.500" fill="none" stroke="#2b7fd3" stroke-width="1.400"/></svg>
<span class="t" style="left:179px;top:63.77px;font-size:11.5px;color:#000;transform:scaleX(0.98);">Cut</span>
<svg class="a" style="left:160px;top:86px;" width="16" height="10" viewBox="0 0 16 10"><rect x=".5" y=".5" width="15" height="9" fill="#dbe9f7" stroke="#4a8fd4"/><path d="M2 7l2-4 1.500 4 1.500-2.500M9 7h1M11 7h1M13 7h1" stroke="#234" stroke-width="1" fill="none"/></svg>
<span class="t" style="left:179px;top:86.27px;font-size:11.5px;color:#000;">Copy path</span>
<svg class="a" style="left:161px;top:105px;" width="13" height="17" viewBox="0 0 13 17"><rect x=".5" y="2.500" width="12" height="14" rx="1" fill="#d5dce8" stroke="#8c9bb5"/><rect x="3.500" y=".5" width="6" height="3.500" fill="#8c9bb5"/><rect x="3.500" y="7" width="6" height="6" fill="#fff" stroke="#6b87b5" stroke-width=".8"/><path d="M5 11.500l3-3M6 8.500h2v2" stroke="#3a62a8" stroke-width=".9" fill="none"/></svg>
<span class="t" style="left:179px;top:108.27px;font-size:11.5px;color:#8a8a8a;">Paste shortcut</span>
<span class="t" style="left:106.5px;top:131.27px;font-size:11.5px;color:#5f5f5f;transform:scaleX(0.95);">Clipboard</span>
<div class="a" style="left:262px;top:56px;width:1px;height:86px;background:#e2e3e4;"></div>
<svg class="a" style="left:276px;top:63px;" width="28" height="30" viewBox="0 0 28 30"><path d="M1.500.5h20v27h-20z" fill="#fbdf80" stroke="#edc85a"/><path d="M19.500 5.500h2.500v22h-17.500v-2.500h15z" fill="#fdeaa6"/><path d="M27.500 17.500H20v-5L10.500 20.500 20 28.500v-5h7.500z" fill="#2e86de"/></svg>
<span class="t" style="left:273.5px;top:97.77px;font-size:11.5px;color:#000;">Move</span>
<span class="t" style="left:278.75px;top:111.27px;font-size:11.5px;color:#000;transform:scaleX(1.09);">to</span>
<svg class="a" style="left:292px;top:115px;" width="5.6" height="3.2" viewBox="0 0 7 4"><path d="M0 0h7L3.500 4z" fill="#222"/></svg>
<svg class="a" style="left:318px;top:62px;" width="28" height="31" viewBox="0 0 28 31"><path d="M1.500 2.500h20v27h-20z" fill="#fbdf80" stroke="#edc85a"/><path d="M19.500 8h2.500v21.500h-17.500v-2.500h15z" fill="#fdeaa6"/><path d="M10.500.5h7l3 3v11h-10z" fill="#fff" stroke="#9aa3ad"/><path d="M15.500 3.500h8l3 3v12h-11z" fill="#fff" stroke="#9aa3ad"/><rect x="17.500" y="8" width="7" height="1" fill="#3d86e0"/><rect x="17.500" y="10.2" width="7" height="1" fill="#3d86e0"/><rect x="17.500" y="12.4" width="7" height="1" fill="#3d86e0"/><rect x="17.500" y="14.6" width="7" height="1" fill="#3d86e0"/><rect x="17.500" y="16.8" width="7" height="1" fill="#3d86e0"/></svg>
<span class="t" style="left:317px;top:97.77px;font-size:11.5px;color:#000;transform:scaleX(0.97);">Copy</span>
<span class="t" style="left:320.75px;top:111.27px;font-size:11.5px;color:#000;transform:scaleX(1.09);">to</span>
<svg class="a" style="left:334px;top:115px;" width="5.6" height="3.2" viewBox="0 0 7 4"><path d="M0 0h7L3.500 4z" fill="#222"/></svg>
<div class="a" style="left:355px;top:63px;width:1px;height:55px;background:#e2e3e4;"></div>
<svg class="a" style="left:367px;top:65px;" width="26" height="26" viewBox="0 0 26 26"><path d="M3.500 0L13 9.500 22.500 0 26 3.500 16.500 13 26 22.500 22.500 26 13 16.500 3.500 26 0 22.500 9.500 13 0 3.500z" fill="#dc0a17"/></svg>
<span class="t" style="left:363.2px;top:97.77px;font-size:11.5px;color:#000;">Delete</span>
<svg class="a" style="left:376px;top:114.5px;" width="5.6" height="3.2" viewBox="0 0 7 4"><path d="M0 0h7L3.500 4z" fill="#222"/></svg>
<svg class="a" style="left:409px;top:64px;" width="30" height="28" viewBox="0 0 30 28"><rect x=".5" y="9.500" width="26" height="10" fill="#fff" stroke="#8c9bb5"/><rect x="3" y="12" width="13" height="5" fill="#2e86de"/><path d="M19 1.500h3.500M26 1.500h3.500M24 1.500v25M19 26.500h3.500M26 26.500h3.500M22.500 1.500c1.500 0 1.500 1 1.500 2M25.500 1.500c-1.500 0-1.500 1-1.500 2M22.500 26.500c1.500 0 1.500-1 1.500-2M25.500 26.500c-1.500 0-1.500-1-1.500-2" stroke="#444" stroke-width="1.300" fill="none"/></svg>
<span class="t" style="left:402.9px;top:97.77px;font-size:11.5px;color:#000;transform:scaleX(0.94);">Rename</span>
<span class="t" style="left:333.25px;top:131.27px;font-size:11.5px;color:#5f5f5f;">Organize</span>
<div class="a" style="left:453px;top:56px;width:1px;height:86px;background:#e2e3e4;"></div>
<svg class="a" style="left:468px;top:64px;" width="20" height="30" viewBox="0 0 20 30"><path d="M1 1h15v22H1z" fill="#f2ce62"/><path d="M1 1l6 3.500v25L1 26z" fill="#ffe8a0"/><path d="M16 14l3 1.500v8H7" fill="#f2ce62"/></svg>
<span class="t" style="left:466.75px;top:97.77px;font-size:11.5px;color:#000;transform:scaleX(0.98);">New</span>
<span class="t" style="left:462.5px;top:111.27px;font-size:11.5px;color:#000;transform:scaleX(1.08);">folder</span>
<svg class="a" style="left:503px;top:60px;" width="18" height="18" viewBox="0 0 18 18"><rect x=".5" y=".5" width="9" height="7" fill="#dbe9f7" stroke="#4a8fd4"/><path d="M5.500 4.500h7l3 3v10h-10z" fill="#fff" stroke="#8a8a8a"/><path d="M8 10h5M8 12.500h5M8 15h5" stroke="#c55" stroke-width=".8"/></svg>
<span class="t" style="left:522.6px;top:63.77px;font-size:11.5px;color:#000;">New item</span>
<svg class="a" style="left:574.5px;top:67px;" width="5.6" height="3.2" viewBox="0 0 7 4"><path d="M0 0h7L3.500 4z" fill="#222"/></svg>
<svg class="a" style="left:503px;top:82px;" width="18" height="18" viewBox="0 0 18 18"><path d="M5.500 2.500h7l3 3v11h-10z" fill="#fff" stroke="#8a8a8a"/><path d="M0 6h6M1 8.500h5M3 3.500v7" stroke="#2b6fc4" stroke-width="1"/></svg>
<span class="t" style="left:522.6px;top:86.27px;font-size:11.5px;color:#000;transform:scaleX(0.96);">Easy access</span>
<svg class="a" style="left:588px;top:89.5px;" width="5.6" height="3.2" viewBox="0 0 7 4"><path d="M0 0h7L3.500 4z" fill="#222"/></svg>
<span class="t" style="left:513.25px;top:131.27px;font-size:11.5px;color:#5f5f5f;transform:scaleX(0.98);">New</span>
<div class="a" style="left:598px;top:56px;width:1px;height:86px;background:#e2e3e4;"></div>
<svg class="a" style="left:620px;top:63px;" width="22" height="28" viewBox="0 0 22 28"><path d="M.5.5h15l6 6v21H.5z" fill="#fff" stroke="#9aa3ad"/><path d="M15.500.5v6h6" fill="#eee" stroke="#9aa3ad"/><path d="M4.500 15l4.500 5.500L18 9" fill="none" stroke="#e8541c" stroke-width="2.600"/></svg>
<span class="t" style="left:604.8px;top:97.77px;font-size:11.5px;color:#000;">Properties</span>
<svg class="a" style="left:627.5px;top:114.5px;" width="5.6" height="3.2" viewBox="0 0 7 4"><path d="M0 0h7L3.500 4z" fill="#222"/></svg>
<svg class="a" style="left:663px;top:62px;" width="16" height="14" viewBox="0 0 16 14"><rect width="16" height="14" fill="#0f6fc6"/><path d="M0 14l5-8 3 4 3-5 5 9z" fill="#fff"/></svg>
<span class="t" style="left:682.5px;top:63.77px;font-size:11.5px;color:#000;transform:scaleX(0.96);">Open</span>
<svg class="a" style="left:715.5px;top:67px;" width="5.6" height="3.2" viewBox="0 0 7 4"><path d="M0 0h7L3.500 4z" fill="#222"/></svg>
<svg class="a" style="left:665px;top:83px;" width="14" height="17" viewBox="0 0 14 17"><path d="M.5.5h8l3 3v13H.5z" fill="#fff" stroke="#8a8a8a"/><path d="M4 13l7-9 2 1.500-7 9-2.500.8z" fill="#f5b324" stroke="#b8860b" stroke-width=".5"/></svg>
<span class="t" style="left:682.5px;top:86.27px;font-size:11.5px;color:#000;transform:scaleX(0.96);">Edit</span>
<svg class="a" style="left:663px;top:105px;" width="18" height="18" viewBox="0 0 18 18"><path d="M1 1h9v12H1z" fill="#f7d56e"/><circle cx="11" cy="11.500" r="5.500" fill="#e8e8e8" stroke="#777"/><path d="M11 8.500v3l2 1" stroke="#444" stroke-width="1" fill="none"/><path d="M2 11l3 4 1-3" stroke="#2db236" stroke-width="1.800" fill="none"/></svg>
<span class="t" style="left:682.5px;top:108.27px;font-size:11.5px;color:#000;">History</span>
<span class="t" style="left:649.4px;top:131.27px;font-size:11.5px;color:#5f5f5f;">Open</span>
<div class="a" style="left:731px;top:56px;width:1px;height:86px;background:#e2e3e4;"></div>
<svg class="a" style="left:739px;top:61px;" width="16" height="16" viewBox="0 0 16 16"><rect width="16" height="16" fill="#2b86d9"/><rect x="1.3" y="1.3" width="5.800" height="5.800" fill="#bfe0fb"/><rect x="1.3" y="8.9" width="5.800" height="5.800" fill="#bfe0fb"/><rect x="8.9" y="1.3" width="5.800" height="5.800" fill="#bfe0fb"/><rect x="8.9" y="8.9" width="5.800" height="5.800" fill="#bfe0fb"/></svg>
<span class="t" style="left:758.3px;top:63.77px;font-size:11.5px;color:#000;transform:scaleX(0.96);">Select all</span>
<svg class="a" style="left:739px;top:83px;" width="16" height="16" viewBox="0 0 16 16"><rect x="0.5" y="0.5" width="5.500" height="5.500" fill="#fff" stroke="#9a9a9a" stroke-width="1"/><rect x="8.5" y="0.5" width="5.500" height="5.500" fill="#fff" stroke="#9a9a9a" stroke-width="1"/><rect x="0.5" y="8.5" width="5.500" height="5.500" fill="#fff" stroke="#9a9a9a" stroke-width="1"/><rect x="8.5" y="8.5" width="5.500" height="5.500" fill="#fff" stroke="#9a9a9a" stroke-width="1"/></svg>
<span class="t" style="left:758.3px;top:86.27px;font-size:11.5px;color:#000;transform:scaleX(0.99);">Select none</span>
<svg class="a" style="left:739px;top:105px;" width="16" height="16" viewBox="0 0 16 16"><rect x="1" y="1.5" width="5.500" height="5.500" fill="#fff" stroke="#9a9a9a" stroke-width="1"/><rect x="9.5" y="9.5" width="5.500" height="5.500" fill="#fff" stroke="#9a9a9a" stroke-width="1"/><rect x="8" y="0" width="8" height="8" fill="#2b86d9"/><rect x="9.300" y="1.300" width="5.400" height="5.400" fill="#bfe0fb"/><rect x="0" y="8" width="8" height="8" fill="#2b86d9"/><rect x="1.300" y="9.300" width="5.400" height="5.400" fill="#bfe0fb"/></svg>
<span class="t" style="left:758.3px;top:108.27px;font-size:11.5px;color:#000;">Invert selection</span>
<span class="t" style="left:773px;top:131.27px;font-size:11.5px;color:#5f5f5f;transform:scaleX(0.94);">Select</span>
<div class="a" style="left:846px;top:56px;width:1px;height:86px;background:#e2e3e4;"></div>
<svg class="a" style="left:12px;top:157.5px;" width="14" height="11" viewBox="0 0 14 11"><path d="M13 5.500H1.500M6 1L1.500 5.500 6 10" fill="none" stroke="#5a5a5a" stroke-width="1.400"/></svg>
<svg class="a" style="left:41px;top:157.5px;" width="14" height="11" viewBox="0 0 14 11"><path d="M1 5.500h11.500M8 1l4.500 4.500L8 10" fill="none" stroke="#cfcfcf" stroke-width="1.400"/></svg>
<svg class="a" style="left:68.5px;top:161px;" width="7" height="5" viewBox="0 0 7 5"><path d="M.5.5l3 3 3-3" fill="none" stroke="#777" stroke-width="1.200"/></svg>
<svg class="a" style="left:87.5px;top:156.5px;" width="11" height="13" viewBox="0 0 11 13"><path d="M5.500 13V1.500M1 6l4.500-4.500L10 6" fill="none" stroke="#5a5a5a" stroke-width="1.400"/></svg>
<div class="a" style="left:106px;top:153px;width:820px;height:21px;background:#fff;border:1px solid #d9d9d9;box-sizing:border-box;"></div>
<svg class="a" style="left:111px;top:157px;" width="17" height="13" viewBox="0 0 17 13"><rect x=".5" y=".5" width="16" height="12" fill="#fff" stroke="#8a9aa8"/><rect x="2" y="2" width="13" height="9" fill="#6fb1e0"/><path d="M2 11l4-4 3 2 2-1.500 4 3.500z" fill="#3e6a4e"/><rect x="2" y="2" width="13" height="3" fill="#d6ebf7"/></svg>
<svg class="a" style="left:132px;top:160px;" width="5" height="7" viewBox="0 0 5 7"><path d="M.5.5l3 3-3 3" fill="none" stroke="#555" stroke-width="1.100"/></svg>
<span class="t" style="left:146px;top:158.07px;font-size:11.5px;color:#000;transform:scaleX(0.97);">This PC</span>
<svg class="a" style="left:195.5px;top:160px;" width="5" height="7" viewBox="0 0 5 7"><path d="M.5.5l3 3-3 3" fill="none" stroke="#555" stroke-width="1.100"/></svg>
<span class="t" style="left:209px;top:158.07px;font-size:11.5px;color:#000;">Pictures</span>
<svg class="a" style="left:896px;top:160px;" width="10" height="7" viewBox="0 0 10 7"><path d="M1 1l4 4.500L9 1" fill="none" stroke="#444" stroke-width="1.500"/></svg>
<div class="a" style="left:908px;top:153px;width:1px;height:21px;background:#d9d9d9;"></div>
<svg class="a" style="left:912px;top:157px;" width="11" height="12" viewBox="0 0 11 12"><path d="M9.500 6.500a4 4 0 1 1-1.500-3.400" fill="none" stroke="#444" stroke-width="1.300"/><path d="M8.500 0v3.500H5" fill="none" stroke="#444" stroke-width="1.300"/></svg>
<div class="a" style="left:938px;top:153px;width:202px;height:21px;background:#fff;border:1px solid #d9d9d9;box-sizing:border-box;"></div>
<span class="t" style="left:947px;top:158.07px;font-size:11.5px;color:#6d6d6d;transform:scaleX(0.99);">Search Pictures</span>
<svg class="a" style="left:1123px;top:157.5px;" width="12" height="12" viewBox="0 0 12 12"><circle cx="7.500" cy="4.500" r="3.500" fill="none" stroke="#555" stroke-width="1.300"/><path d="M5 7L1 11" stroke="#555" stroke-width="1.600"/></svg>
<svg class="a" style="left:32px;top:185px;" width="16" height="16" viewBox="0 0 16 16"><rect x="0" y="0" width="11.800" height="16" fill="#f7d24a"/><rect x="1" y="1.500" width="9.500" height="13" fill="#f5e3a3"/><circle cx="5" cy="5.300" r="2.600" fill="#e6c88a"/><circle cx="5" cy="6" r="1.800" fill="#f0d3ae"/><path d="M1.500 13c0-4.500 7-4.500 7 0z" fill="#eadbb0"/><circle cx="11.600" cy="6.200" r="2.800" fill="#4a3a2c"/><circle cx="11.400" cy="7" r="1.800" fill="#8a5f47"/><path d="M7.500 16c0-6.500 8.500-6.500 8.500 0z" fill="#7da3d6"/><circle cx="4" cy="12.300" r="3.700" fill="#2db236"/><path d="M2.200 12.300l1.400 1.500 2.400-2.700" stroke="#fff" stroke-width="1.200" fill="none"/></svg>
<span class="t" style="left:53px;top:187.77px;font-size:11.5px;color:#000;transform:scaleX(1.03);">blancco</span>
<svg class="a" style="left:32px;top:209px;" width="16" height="16" viewBox="0 0 16 16"><rect x="0" y="0" width="11.800" height="16" fill="#f7d24a"/><rect x="1" y="1.500" width="9.500" height="13" fill="#f5e3a3"/><circle cx="5" cy="5.300" r="2.600" fill="#e6c88a"/><circle cx="5" cy="6" r="1.800" fill="#f0d3ae"/><path d="M1.500 13c0-4.500 7-4.500 7 0z" fill="#eadbb0"/><circle cx="11.600" cy="6.200" r="2.800" fill="#4a3a2c"/><circle cx="11.400" cy="7" r="1.800" fill="#8a5f47"/><path d="M7.500 16c0-6.500 8.500-6.500 8.500 0z" fill="#7da3d6"/><circle cx="4" cy="12.300" r="3.700" fill="#2db236"/><path d="M2.200 12.300l1.400 1.500 2.400-2.700" stroke="#fff" stroke-width="1.200" fill="none"/></svg>
<span class="t" style="left:53px;top:211.77px;font-size:11.5px;color:#000;">Brian temp</span>
<svg class="a" style="left:32px;top:233px;" width="16" height="16" viewBox="0 0 16 16"><rect x="1" y="1" width="4" height="12" fill="#555"/><rect x="3" y="2.500" width="12" height="10.500" rx="1" fill="#bdbdbd"/><circle cx="10" cy="8" r="3.600" fill="#2c2c2c"/><circle cx="10.800" cy="7.300" r="1.200" fill="#3aa6c9"/><circle cx="4" cy="12.300" r="3.700" fill="#2db236"/><path d="M2.200 12.300l1.400 1.500 2.400-2.700" stroke="#fff" stroke-width="1.200" fill="none"/></svg>
<span class="t" style="left:53px;top:235.77px;font-size:11.5px;color:#000;">Camera Uploads</span>
<svg class="a" style="left:32px;top:257px;" width="16" height="16" viewBox="0 0 16 16"><rect x="0" y="0" width="11.800" height="16" fill="#f7d24a"/><rect x="1" y="1.500" width="9.500" height="13" fill="#f5e3a3"/><circle cx="5" cy="5.300" r="2.600" fill="#e6c88a"/><circle cx="5" cy="6" r="1.800" fill="#f0d3ae"/><path d="M1.500 13c0-4.500 7-4.500 7 0z" fill="#eadbb0"/><circle cx="11.600" cy="6.200" r="2.800" fill="#4a3a2c"/><circle cx="11.400" cy="7" r="1.800" fill="#8a5f47"/><path d="M7.500 16c0-6.500 8.500-6.500 8.500 0z" fill="#7da3d6"/><circle cx="4" cy="12.300" r="3.700" fill="#2db236"/><path d="M2.200 12.300l1.400 1.500 2.400-2.700" stroke="#fff" stroke-width="1.200" fill="none"/></svg>
<span class="t" style="left:53px;top:259.77px;font-size:11.5px;color:#000;">David Spibey</span>
<svg class="a" style="left:32px;top:281px;" width="16" height="16" viewBox="0 0 16 16"><rect x="0" y="0" width="11.800" height="16" fill="#f7d24a"/><rect x="1" y="1.500" width="9.500" height="13" fill="#f5e3a3"/><circle cx="5" cy="5.300" r="2.600" fill="#e6c88a"/><circle cx="5" cy="6" r="1.800" fill="#f0d3ae"/><path d="M1.500 13c0-4.500 7-4.500 7 0z" fill="#eadbb0"/><circle cx="11.600" cy="6.200" r="2.800" fill="#4a3a2c"/><circle cx="11.400" cy="7" r="1.800" fill="#8a5f47"/><path d="M7.500 16c0-6.500 8.500-6.500 8.500 0z" fill="#7da3d6"/><circle cx="4" cy="12.300" r="3.700" fill="#2db236"/><path d="M2.200 12.300l1.400 1.500 2.400-2.700" stroke="#fff" stroke-width="1.200" fill="none"/></svg>
<span class="t" style="left:53px;top:283.77px;font-size:11.5px;color:#000;transform:scaleX(0.98);">DT group</span>
<svg class="a" style="left:32px;top:305px;" width="16" height="16" viewBox="0 0 16 16"><rect x="0" y="0" width="11.800" height="16" fill="#f7d24a"/><rect x="1" y="1.500" width="9.500" height="13" fill="#f5e3a3"/><circle cx="5" cy="5.300" r="2.600" fill="#e6c88a"/><circle cx="5" cy="6" r="1.800" fill="#f0d3ae"/><path d="M1.500 13c0-4.500 7-4.500 7 0z" fill="#eadbb0"/><circle cx="11.600" cy="6.200" r="2.800" fill="#4a3a2c"/><circle cx="11.400" cy="7" r="1.800" fill="#8a5f47"/><path d="M7.500 16c0-6.500 8.500-6.500 8.500 0z" fill="#7da3d6"/><circle cx="4" cy="12.300" r="3.700" fill="#2db236"/><path d="M2.200 12.300l1.400 1.500 2.400-2.700" stroke="#fff" stroke-width="1.200" fill="none"/></svg>
<span class="t" style="left:53px;top:307.77px;font-size:11.5px;color:#000;">EGdatainform</span>
<svg class="a" style="left:32px;top:329px;" width="16" height="16" viewBox="0 0 16 16"><rect x="0" y="0" width="11.800" height="16" fill="#f7d24a"/><rect x="1" y="1.500" width="9.500" height="13" fill="#f5e3a3"/><circle cx="5" cy="5.300" r="2.600" fill="#e6c88a"/><circle cx="5" cy="6" r="1.800" fill="#f0d3ae"/><path d="M1.500 13c0-4.500 7-4.500 7 0z" fill="#eadbb0"/><circle cx="11.600" cy="6.200" r="2.800" fill="#4a3a2c"/><circle cx="11.400" cy="7" r="1.800" fill="#8a5f47"/><path d="M7.500 16c0-6.500 8.500-6.500 8.500 0z" fill="#7da3d6"/><circle cx="4" cy="12.300" r="3.700" fill="#2db236"/><path d="M2.200 12.300l1.400 1.500 2.400-2.700" stroke="#fff" stroke-width="1.200" fill="none"/></svg>
<span class="t" style="left:53px;top:331.77px;font-size:11.5px;color:#000;transform:scaleX(0.99);">HP nc6220</span>
<svg class="a" style="left:32px;top:353px;" width="16" height="16" viewBox="0 0 16 16"><rect x="0" y="0" width="11.800" height="16" fill="#f7d24a"/><rect x="1" y="1.500" width="9.500" height="13" fill="#f5e3a3"/><circle cx="5" cy="5.300" r="2.600" fill="#e6c88a"/><circle cx="5" cy="6" r="1.800" fill="#f0d3ae"/><path d="M1.500 13c0-4.500 7-4.500 7 0z" fill="#eadbb0"/><circle cx="11.600" cy="6.200" r="2.800" fill="#4a3a2c"/><circle cx="11.400" cy="7" r="1.800" fill="#8a5f47"/><path d="M7.500 16c0-6.500 8.500-6.500 8.500 0z" fill="#7da3d6"/><circle cx="4" cy="12.300" r="3.700" fill="#2db236"/><path d="M2.200 12.300l1.400 1.500 2.400-2.700" stroke="#fff" stroke-width="1.200" fill="none"/></svg>
<span class="t" style="left:53px;top:355.77px;font-size:11.5px;color:#000;transform:scaleX(0.87);">MS NC</span>
<svg class="a" style="left:32px;top:377px;" width="16" height="16" viewBox="0 0 16 16"><rect x="0" y="0" width="11.800" height="16" fill="#f7d24a"/><rect x="1" y="1.500" width="9.500" height="13" fill="#f5e3a3"/><circle cx="5" cy="5.300" r="2.600" fill="#e6c88a"/><circle cx="5" cy="6" r="1.800" fill="#f0d3ae"/><path d="M1.500 13c0-4.500 7-4.500 7 0z" fill="#eadbb0"/><circle cx="11.600" cy="6.200" r="2.800" fill="#4a3a2c"/><circle cx="11.400" cy="7" r="1.800" fill="#8a5f47"/><path d="M7.500 16c0-6.500 8.500-6.500 8.500 0z" fill="#7da3d6"/><circle cx="4" cy="12.300" r="3.700" fill="#2db236"/><path d="M2.200 12.300l1.400 1.500 2.400-2.700" stroke="#fff" stroke-width="1.200" fill="none"/></svg>
<span class="t" style="left:53px;top:379.77px;font-size:11.5px;color:#000;transform:scaleX(0.94);">NC Just</span>
<svg class="a" style="left:32px;top:401px;" width="16" height="16" viewBox="0 0 16 16"><rect x="0" y="0" width="11.800" height="16" fill="#f7d24a"/><rect x="1" y="1.500" width="9.500" height="13" fill="#f5e3a3"/><circle cx="5" cy="5.300" r="2.600" fill="#e6c88a"/><circle cx="5" cy="6" r="1.800" fill="#f0d3ae"/><path d="M1.500 13c0-4.500 7-4.500 7 0z" fill="#eadbb0"/><circle cx="11.600" cy="6.200" r="2.800" fill="#4a3a2c"/><circle cx="11.400" cy="7" r="1.800" fill="#8a5f47"/><path d="M7.500 16c0-6.500 8.500-6.500 8.500 0z" fill="#7da3d6"/><circle cx="4" cy="12.300" r="3.700" fill="#2db236"/><path d="M2.200 12.300l1.400 1.500 2.400-2.700" stroke="#fff" stroke-width="1.200" fill="none"/></svg>
<span class="t" style="left:53px;top:403.77px;font-size:11.5px;color:#000;transform:scaleX(0.88);">NCTEXT37</span>
<svg class="a" style="left:32px;top:425px;" width="16" height="16" viewBox="0 0 16 16"><rect x="0" y="0" width="11.800" height="16" fill="#f7d24a"/><rect x="1" y="1.500" width="9.500" height="13" fill="#f5e3a3"/><circle cx="5" cy="5.300" r="2.600" fill="#e6c88a"/><circle cx="5" cy="6" r="1.800" fill="#f0d3ae"/><path d="M1.500 13c0-4.500 7-4.500 7 0z" fill="#eadbb0"/><circle cx="11.600" cy="6.200" r="2.800" fill="#4a3a2c"/><circle cx="11.400" cy="7" r="1.800" fill="#8a5f47"/><path d="M7.500 16c0-6.500 8.500-6.500 8.500 0z" fill="#7da3d6"/><circle cx="4" cy="12.300" r="3.700" fill="#2db236"/><path d="M2.200 12.300l1.400 1.500 2.400-2.700" stroke="#fff" stroke-width="1.200" fill="none"/></svg>
<span class="t" style="left:53px;top:427.77px;font-size:11.5px;color:#000;">Nordic Computer 1979</span>
<svg class="a" style="left:32px;top:449px;" width="16" height="16" viewBox="0 0 16 16"><path d="M4 1h9v13H4z" fill="#f7d24a"/><path d="M11.500 3H13v11h-1.500z" fill="#ffe89a"/><circle cx="4" cy="12.300" r="3.700" fill="#2db236"/><path d="M2.200 12.300l1.400 1.500 2.400-2.700" stroke="#fff" stroke-width="1.200" fill="none"/></svg>
<span class="t" style="left:53px;top:451.77px;font-size:11.5px;color:#000;">Photos</span>
<svg class="a" style="left:32px;top:473px;" width="16" height="16" viewBox="0 0 16 16"><circle cx="8.500" cy="7.500" r="6.500" fill="#4ea0e6"/><path d="M5 3c2 0 3 2 2 4s-3 2-4 1 0-5 2-5zM10 8c2-1 4 0 4 2s-3 4-4 3-1-4 0-5z" fill="#bfe3f7"/><circle cx="4" cy="12.300" r="3.700" fill="#2db236"/><path d="M2.200 12.300l1.400 1.500 2.400-2.700" stroke="#fff" stroke-width="1.200" fill="none"/></svg>
<span class="t" style="left:53px;top:475.77px;font-size:11.5px;color:#000;">Public</span>
<svg class="a" style="left:32px;top:497px;" width="16" height="16" viewBox="0 0 16 16"><rect x="0" y="0" width="11.800" height="16" fill="#f7d24a"/><rect x="1" y="1.500" width="9.500" height="13" fill="#f5e3a3"/><circle cx="5" cy="5.300" r="2.600" fill="#e6c88a"/><circle cx="5" cy="6" r="1.800" fill="#f0d3ae"/><path d="M1.500 13c0-4.500 7-4.500 7 0z" fill="#eadbb0"/><circle cx="11.600" cy="6.200" r="2.800" fill="#4a3a2c"/><circle cx="11.400" cy="7" r="1.800" fill="#8a5f47"/><path d="M7.500 16c0-6.500 8.500-6.500 8.500 0z" fill="#7da3d6"/><circle cx="4" cy="12.300" r="3.700" fill="#2db236"/><path d="M2.200 12.300l1.400 1.500 2.400-2.700" stroke="#fff" stroke-width="1.200" fill="none"/></svg>
<span class="t" style="left:53px;top:499.77px;font-size:11.5px;color:#000;transform:scaleX(0.97);">RJ data</span>
<svg class="a" style="left:32px;top:521px;" width="16" height="16" viewBox="0 0 16 16"><path d="M4 1h9v13H4z" fill="#f7d24a"/><path d="M11.500 3H13v11h-1.500z" fill="#ffe89a"/><circle cx="4" cy="12.300" r="3.700" fill="#2db236"/><path d="M2.200 12.300l1.400 1.500 2.400-2.700" stroke="#fff" stroke-width="1.200" fill="none"/></svg>
<span class="t" style="left:53px;top:523.77px;font-size:11.5px;color:#000;transform:scaleX(1.01);">Skærmbilleder</span>
<svg class="a" style="left:24px;top:553px;" width="16" height="16" viewBox="0 0 16 16"><path d="M3.500 13a3.300 3.300 0 0 1-.3-6.500 3.300 3.300 0 0 1 4.300-2.200 4.200 4.200 0 0 1 6.300 2.700 3 3 0 0 1-.3 6z" fill="#1471c9"/><path d="M5.500 9.500a3 3 0 0 1 4.500-2 2.500 2.500 0 0 1 3.500 1.500" fill="none" stroke="#fff" stroke-width=".9"/></svg>
<span class="t" style="left:45px;top:555.47px;font-size:11.5px;color:#000;transform:scaleX(0.98);">OneDrive</span>
<svg class="a" style="left:24px;top:584px;" width="16" height="16" viewBox="0 0 16 16"><rect x=".5" y="1.500" width="15" height="10" fill="#55c1f6" stroke="#2f8fd0" stroke-width="1"/><path d="M1.500 2.500h13v8h-13z" fill="#8fd8fb"/><path d="M1.500 10.500l13-8v8z" fill="#6fcaf8"/><rect x="5" y="12.500" width="6" height="1" fill="#8fa3b3"/><rect x="0" y="14.500" width="16" height="1" fill="#9fb0be"/></svg>
<span class="t" style="left:45px;top:587.17px;font-size:11.5px;color:#000;transform:scaleX(0.94);">This PC</span>
<div class="a" style="left:0px;top:725px;width:246px;height:21px;background:#d9d9d9;"></div>
<svg class="a" style="left:32px;top:609px;" width="16" height="16" viewBox="0 0 16 16"><path d="M8 0l8 3v9.500L8 16 0 12.500V3z" fill="#3cc6d8"/><path d="M8 6l8-3v9.500L8 16z" fill="#168fa6"/><path d="M8 6L0 3v9.500L8 16z" fill="#c5f0f4"/><path d="M8 0l8 3-8 3-8-3z" fill="#7fe0ea"/><path d="M8 11l8 1.500L8 16 0 12.500z" fill="#1fa9bd" opacity=".7"/></svg>
<span class="t" style="left:53px;top:611.77px;font-size:11.5px;color:#000;">3D Objects</span>
<svg class="a" style="left:32px;top:633px;" width="16" height="16" viewBox="0 0 16 16"><rect x="0" y="2" width="16" height="12" fill="#1f9cf6"/><path d="M0 14l16-12v12z" fill="#1a8ee8"/><rect x="0" y="11.500" width="16" height="2.500" fill="#0c62b8"/><rect x="1.500" y="12.300" width="1" height="1" fill="#fff"/><rect x="12" y="12.300" width="1" height="1" fill="#fff"/><rect x="14" y="12.300" width="1" height="1" fill="#fff"/></svg>
<span class="t" style="left:53px;top:635.77px;font-size:11.5px;color:#000;">Desktop</span>
<svg class="a" style="left:32px;top:657px;" width="16" height="16" viewBox="0 0 16 16"><path d="M3 .5h7l3 3V15.5H3z" fill="#fff" stroke="#b9b9b9" stroke-width=".6"/><path d="M10 .5v3h3" fill="#e4e4e4" stroke="#b9b9b9" stroke-width=".5"/><rect x="5" y="4" width="3" height="2.500" fill="#4b9ad8"/><rect x="5" y="8" width="6" height=".9" fill="#6b93c4"/><rect x="5" y="10" width="6" height=".9" fill="#6b93c4"/><rect x="5" y="12" width="6" height=".9" fill="#6b93c4"/></svg>
<span class="t" style="left:53px;top:659.77px;font-size:11.5px;color:#000;">Documents</span>
<svg class="a" style="left:32px;top:681px;" width="16" height="16" viewBox="0 0 16 16"><path d="M5.500 1h5v6.500h3.500L8 14 2 7.500h3.500z" fill="#2f8de4"/></svg>
<span class="t" style="left:53px;top:683.77px;font-size:11.5px;color:#000;">Downloads</span>
<svg class="a" style="left:32px;top:705px;" width="16" height="16" viewBox="0 0 16 16"><path d="M8 1.500c2.500.5 4 2.500 3.500 5.500-.500-1.500-1.500-2.500-2.500-2.800V12a3 3 0 1 1-1.500-2.600z" fill="#2f8de4"/></svg>
<span class="t" style="left:53px;top:707.77px;font-size:11.5px;color:#000;">Music</span>
<svg class="a" style="left:32px;top:729px;" width="16" height="16" viewBox="0 0 16 16"><rect x="1" y="2.500" width="14" height="11" fill="#fff" stroke="#8a9aa8" stroke-width=".8"/><rect x="2.500" y="4" width="11" height="8" fill="#5aa7dd"/><path d="M2.500 12l3.500-3.500 2.500 2 2-1.500 3 3z" fill="#3e7a4e"/><rect x="2.500" y="4" width="11" height="3" fill="#cfe6f5"/></svg>
<span class="t" style="left:53px;top:731.77px;font-size:11.5px;color:#000;">Pictures</span>
<div class="a" style="left:247px;top:181px;width:16px;height:564px;background:#f0f0f0;"></div>
<div class="a" style="left:247px;top:336px;width:15px;height:273px;background:#cdcdcd;"></div>
<svg class="a" style="left:250px;top:187px;" width="9" height="6" viewBox="0 0 9 6"><path d="M1 5l3.500-4L8 5" fill="none" stroke="#555" stroke-width="1.500"/></svg>
<svg class="a" style="left:250px;top:734px;" width="9" height="6" viewBox="0 0 9 6"><path d="M1 1l3.500 4L8 1" fill="none" stroke="#555" stroke-width="1.500"/></svg>
<div class="a" style="left:265px;top:181px;width:1px;height:564px;background:#f3f3f3;"></div>
<span class="t" style="left:14px;top:751.77px;font-size:11.5px;color:#1c2f7a;transform:scaleX(1.01);">23 items</span>
<div class="a" style="left:68px;top:750px;width:1px;height:14px;background:#efefef;"></div>
<div class="a" style="left:216px;top:750px;width:1px;height:14px;background:#efefef;"></div>
<span class="t" style="left:79px;top:751.77px;font-size:11.5px;color:#1c2f7a;">1 item selected  2,46 MB</span>
<svg class="a" style="left:1107px;top:749px;" width="17" height="13" viewBox="0 0 17 13"><rect x=".5" y="0.5" width="3" height="3" fill="#fff" stroke="#888" stroke-width=".8"/><rect x="6" y="1.5" width="4" height="1" fill="#555"/><rect x="12" y="1.5" width="4" height="1" fill="#555"/><rect x=".5" y="4.7" width="3" height="3" fill="#fff" stroke="#888" stroke-width=".8"/><rect x="6" y="5.7" width="4" height="1" fill="#555"/><rect x="12" y="5.7" width="4" height="1" fill="#555"/><rect x=".5" y="9" width="3" height="3" fill="#fff" stroke="#d33" stroke-width=".8"/><rect x="6" y="10" width="4" height="1" fill="#555"/><rect x="12" y="10" width="4" height="1" fill="#555"/></svg>
<div class="a" style="left:1126px;top:745px;width:22px;height:23px;background:#cce8ff;border:1px solid #26a0da;box-sizing:border-box;"></div>
<svg class="a" style="left:1131px;top:751px;" width="13" height="10" viewBox="0 0 13 10"><rect x=".5" y=".5" width="12" height="9" fill="#fff" stroke="#777"/><rect x="2" y="2" width="9" height="6" fill="#5aa7dd"/><path d="M2 8l3-3 2 1.500 1.500-1 2.500 2.500z" fill="#2f5f3e"/></svg>
<svg class="a" style="left:302px;top:199px;" width="54" height="81.5" viewBox="0 0 54 81.5"><defs><linearGradient id="fg1" x1="0" x2="1"><stop offset="0" stop-color="#efca66"/><stop offset="1" stop-color="#fde086"/></linearGradient><linearGradient id="fg2" x1="0" x2="1"><stop offset="0" stop-color="#ffe9a3"/><stop offset="1" stop-color="#fbd778"/></linearGradient></defs><path d="M0 0h49.300v41.600l4.700 4.900v22.100H16z" fill="url(#fg1)"/><path d="M0 0l18 13.700V58l-1 1-.2 22.500L0 68.800z" fill="url(#fg2)"/></svg>
<span class="t" style="left:302.25px;top:288.07px;font-size:11.5px;color:#000;">Camera Roll</span>
<svg class="a" style="left:410px;top:199px;" width="54" height="81.5" viewBox="0 0 54 81.5"><defs><linearGradient id="fg1" x1="0" x2="1"><stop offset="0" stop-color="#efca66"/><stop offset="1" stop-color="#fde086"/></linearGradient><linearGradient id="fg2" x1="0" x2="1"><stop offset="0" stop-color="#ffe9a3"/><stop offset="1" stop-color="#fbd778"/></linearGradient></defs><path d="M0 0h49.300v41.600l4.700 4.900v22.100H16z" fill="url(#fg1)"/><path d="M0 0l18 13.700V58l-1 1-.2 22.500L0 68.800z" fill="url(#fg2)"/></svg>
<span class="t" style="left:404px;top:288.07px;font-size:11.5px;color:#000;transform:scaleX(0.98);">Saved Pictures</span>
<svg class="a" style="left:518px;top:199px;" width="54" height="81.5" viewBox="0 0 54 81.5"><defs><linearGradient id="fg1" x1="0" x2="1"><stop offset="0" stop-color="#efca66"/><stop offset="1" stop-color="#fde086"/></linearGradient><linearGradient id="fg2" x1="0" x2="1"><stop offset="0" stop-color="#ffe9a3"/><stop offset="1" stop-color="#fbd778"/></linearGradient></defs><path d="M0 0h49.300v41.600l4.700 4.900v22.100H16z" fill="url(#fg1)"/><path d="M0 0l18 13.700V58l-1 1-.2 22.500L0 68.800z" fill="url(#fg2)"/></svg>
<span class="t" style="left:544px;top:288.07px;font-size:11.5px;color:#000;transform:scaleX(0.99);">so</span>
<div class="a" style="left:611px;top:242px;width:91px;height:39px;background:#fff;box-shadow:0 1px 3px rgba(0,0,0,.35);"></div>
<svg class="a" style="left:611px;top:242px;" width="90.5" height="38.7" viewBox="0 0 90.5 38.7"><rect x="0" y="0" width="90.5" height="2.5" fill="#5f8f1f" /><path d="M1 5H89M1 7.4H89M1 9.8H89M1 12.2H89M1 14.6H89M1 17H89M1 19.4H89M1 21.8H89M1 24.2H89M1 26.6H89M1 29H89M1 31.4H89M1 33.8H89M1 36.2H89" stroke="#dfe5ec" stroke-width="0.6" fill="none"/><path d="M24.5 4V37" stroke="#3fae49" stroke-width="1.2" fill="none"/><path d="M14 4V37M40 4V37M56 4V37M68 4V37" stroke="#e6e9ee" stroke-width="0.5" fill="none"/><path d="M3 5H12M3 7.4H12M3 9.8H12M3 12.2H12M3 14.6H12M3 17H12M3 19.4H12M3 21.8H12M3 24.2H12M3 26.6H12M3 29H12M3 31.4H12M3 33.8H12M3 36.2H12" stroke="#b9c6da" stroke-width="0.6" fill="none"/></svg>
<span class="t" style="left:649px;top:288.07px;font-size:11.5px;color:#000;transform:scaleX(1.03);">111</span>
<div class="a" style="left:719px;top:259px;width:91px;height:22px;background:#fff;box-shadow:0 1px 3px rgba(0,0,0,.35);"></div>
<svg class="a" style="left:719px;top:259px;" width="90.5" height="21.7" viewBox="0 0 90.5 21.7"><rect x="2" y="2" width="86" height="3.5" fill="#e1e5f5" /><rect x="2" y="8.5" width="86" height="3.5" fill="#e1e5f5" /><rect x="2" y="15.5" width="86" height="3.5" fill="#e1e5f5" /><path d="M3 6.8H60M3 13.5H60" stroke="#9aa3b8" stroke-width="0.6" fill="none"/><path d="M4 3.7H14M4 10.2H14M4 17.2H14" stroke="#8f98ad" stroke-width="0.6" fill="none"/><path d="M30 3.7H44M30 17.2H44" stroke="#8f98ad" stroke-width="0.6" fill="none"/><path d="M56 3.7H80" stroke="#8f98ad" stroke-width="0.6" fill="none"/></svg>
<span class="t" style="left:757px;top:288.07px;font-size:11.5px;color:#000;transform:scaleX(0.94);">122</span>
<div class="a" style="left:827px;top:266px;width:91px;height:15px;background:#fff;box-shadow:0 1px 3px rgba(0,0,0,.35);"></div>
<svg class="a" style="left:827px;top:266px;" width="90.5" height="14.7" viewBox="0 0 90.5 14.7"><rect x="0" y="0" width="90.5" height="2" fill="#5f8f1f" /><path d="M2 4H8M2 6H8M2 8H8M2 10H8M2 12H8" stroke="#9a9a9a" stroke-width="0.6" fill="none"/><path d="M41 4H56M41 6H56M41 8H56M41 10H56M41 12H56" stroke="#b5b5b5" stroke-width="0.6" fill="none"/><rect x="10" y="3" width="1.5" height="2" fill="#3fae49" /><path d="M58 4H66M58 6H66M58 8H66" stroke="#d0d0d0" stroke-width="0.5" fill="none"/></svg>
<span class="t" style="left:861.5px;top:288.07px;font-size:11.5px;color:#000;transform:scaleX(0.98);">2222</span>
<div class="a" style="left:935px;top:207px;width:90px;height:74px;background:#012456;box-shadow:0 1px 3px rgba(0,0,0,.35);"></div>
<svg class="a" style="left:935px;top:207px;" width="90" height="73.7" viewBox="0 0 90 73.7"><path d="M1.5 1.5h6.64M1.5 3.1h8.18M1.5 6.3h11.15M1.5 7.9h10.92M1.5 11.1h6.89M1.5 12.7h6.1M1.5 15.9h10.16M1.5 19.1h8.49M1.5 20.7h6.57M1.5 22.3h13.97M1.5 25.5h12.49M1.5 27.1h5.73M1.5 28.7h7.38M1.5 30.3h13.45M1.5 32.7h9.37M1.5 35.9h12.18M1.5 39.1h8.47M1.5 42.3h15.08M1.5 43.9h14.09M1.5 45.5h4.29M1.5 48.7h6.4M1.5 51.9h12.93M1.5 54.3h8.77M1.5 57.5h10.55M1.5 60.7h10.67M1.5 63.1h11.8M1.5 64.7h13.83M1.5 66.3h12M1.5 68.7h15.09M1.5 70.3h12.17M1.5 71.9h11.23" stroke="#8fa8d8" stroke-width=".7" fill="none" opacity=".75"/><path d="M58 1.5h9.39M58 3.1h17.4M58 6.3h8.06M58 7.9h5.83M58 10.3h18.71M58 11.9h9.16M58 14.3h10.07M58 15.9h19.14M58 18.3h9.04M58 19.9h19.18M58 22.3h18.71M58 23.9h8.22M58 26.3h15.85M58 28.7h6.93M58 31.1h16.58M58 32.7h8.43M58 35.9h10.12M58 38.3h5.62M58 40.7h14.94M58 43.1h19.49M58 44.7h12.33M58 47.1h12.61M58 48.7h9.35M58 51.1h18.91M58 52.7h6.84M58 55.9h15.83M58 58.3h14.06M58 61.5h17.06M58 63.1h21.96M58 64.7h6.6M58 66.3h15.98M58 69.5h10.06M58 71.9h12.69" stroke="#8fa8d8" stroke-width=".7" fill="none" opacity=".75"/></svg>
<span class="t" style="left:949.25px;top:288.07px;font-size:11.5px;color:#000;transform:scaleX(1.03);">domain user</span>
<div class="a" style="left:1043px;top:225px;width:91px;height:56px;background:#fff;box-shadow:0 1px 3px rgba(0,0,0,.35);"></div>
<svg class="a" style="left:1043px;top:225px;" width="90.5" height="55.7" viewBox="0 0 90.5 55.7"><rect x="2" y="2.5" width="80" height="2.5" fill="#e3e7f5" /><rect x="2" y="2" width="10" height="4.5" fill="#f2ee3a" /><rect x="2" y="8.5" width="80" height="2.5" fill="#e3e7f5" /><rect x="23" y="8" width="49" height="6.5" fill="#f4f03c" /><rect x="2" y="15.5" width="80" height="2.5" fill="#e3e7f5" /><rect x="2" y="22" width="80" height="2.5" fill="#e3e7f5" /><path d="M2 27H84" stroke="#d0d0d0" stroke-width="0.5" fill="none"/><path d="M2 36H10" stroke="#6b8fd1" stroke-width="0.7" fill="none"/><rect x="2" y="40" width="80" height="2.5" fill="#e3e7f5" /><rect x="2" y="47.5" width="28" height="2.5" fill="#e3e7f5" /><path d="M3 6.5H70M3 13H70M3 19.5H70M3 25H70M3 44H70M3 51H70" stroke="#9aa3b8" stroke-width="0.5" fill="none"/></svg>
<span class="t" style="left:1047px;top:288.07px;font-size:11.5px;color:#000;transform:scaleX(1.03);">eg fejl  tape lib 2</span>
<div class="a" style="left:287px;top:331px;width:90px;height:67px;background:#6e6c69;box-shadow:0 1px 3px rgba(0,0,0,.35);"></div>
<svg class="a" style="left:287px;top:331px;" width="90" height="67" viewBox="0 0 90 67"><rect x="0" y="0" width="43" height="67" fill="#6e6c69" /><rect x="46" y="0" width="44" height="67" fill="#77736f" /><rect x="0" y="0" width="90" height="8" fill="#8a7a63" opacity=".6"/><rect x="43" y="0" width="3.5" height="67" fill="#161616" /><path d="M40 2a26 26 0 0 0-8 30" stroke="#9a9a98" fill="none"/><path d="M52 3a30 30 0 0 1 36 20" stroke="#a5a5a3" fill="none"/><rect x="1" y="10" width="33" height="33" fill="#dcdde5" /><path d="M2.5 13H32M2.5 15.3H32M2.5 17.6H32M2.5 19.9H32M2.5 22.2H32M2.5 24.5H32M2.5 26.8H32M2.5 29.1H32M2.5 31.4H32M2.5 33.7H32M2.5 36H32M2.5 38.3H32M2.5 40.6H32" stroke="#8c8f98" stroke-width="0.8" fill="none"/><rect x="1" y="32" width="33" height="7" fill="#c5c6ce" /><path d="M3 34H30M3 36.5H30" stroke="#444" stroke-width="1.1" fill="none"/><rect x="51" y="11" width="36" height="33" fill="#e4e5ed" /><path d="M53 14H85M53 16.3H85M53 18.6H85M53 20.9H85M53 23.2H85M53 25.5H85M53 27.8H85M53 30.1H85M53 32.4H85M53 34.7H85M53 37H85M53 39.3H85M53 41.6H85" stroke="#9497a0" stroke-width="0.8" fill="none"/><rect x="51" y="33" width="36" height="7" fill="#cdced6" /><path d="M54 35.5H84M54 38H84" stroke="#444" stroke-width="1.1" fill="none"/><rect x="0" y="43" width="43" height="24" fill="#55565a" /><circle cx="6" cy="49" r="2" fill="#2d2d2f"/><circle cx="17" cy="47" r="1.800" fill="#2d2d2f"/><circle cx="8" cy="59" r="2.200" fill="#2d2d2f"/><circle cx="32" cy="47" r="4" fill="#3a3a3c"/><circle cx="32" cy="47" r="1.500" fill="#151515"/><rect x="46" y="44" width="44" height="23" fill="#4b4a50" /><path d="M55 44h35v23H57z" fill="#d6d3e6"/><path d="M62 49H82M62 52H82" stroke="#9d9ab5" stroke-width="0.8" fill="none"/></svg>
<span class="t" style="left:312.5px;top:405.07px;font-size:11.5px;color:#000;transform:scaleX(0.91);">EX10289</span>
<div class="a" style="left:406px;top:308px;width:67px;height:90px;background:#d9dad6;box-shadow:0 1px 3px rgba(0,0,0,.35);"></div>
<svg class="a" style="left:406px;top:308px;" width="67.4" height="90" viewBox="0 0 67.4 90"><defs><linearGradient id="h1" x1="0" x2="0" y1="0" y2="1"><stop offset="0" stop-color="#8c8a85"/><stop offset=".45" stop-color="#4f4a44"/><stop offset=".8" stop-color="#8f8474"/><stop offset="1" stop-color="#b9a58a"/></linearGradient></defs><rect x="0" y="0" width="67.4" height="90" fill="#e6dfc8" /><rect x="8" y="8" width="43" height="72" fill="#d9dad6" /><rect x="49" y="0" width="18.4" height="90" fill="url(#h1)" /><rect x="0" y="80" width="67.4" height="10" fill="#d9c8a6" /><rect x="0" y="88.5" width="67.4" height="1.5" fill="#5a4030" /><path d="M10 11H49M10 13.2H49M10 15.4H49M10 17.6H49M10 19.8H49M10 22H49M10 24.2H49M10 26.4H49M10 28.6H49M10 30.8H49M10 33H49M10 35.2H49M10 37.4H49M10 39.6H49M10 41.8H49M10 44H49M10 46.2H49M10 48.4H49M10 50.6H49M10 52.8H49M10 55H49M10 57.2H49M10 59.4H49M10 61.6H49" stroke="#aab3be" stroke-width="0.7" fill="none"/><path d="M10 10V62M13 10V62M16 10V62M19 10V62M22 10V62M25 10V62M28 10V62M31 10V62M34 10V62M37 10V62M40 10V62M43 10V62M46 10V62M49 10V62" stroke="#c3cad2" stroke-width="0.5" fill="none"/><path d="M10 66H30M10 68.5H30M10 71H30M10 73.5H30M10 76H30" stroke="#c9c9c5" stroke-width="0.5" fill="none"/><path d="M36 63V80M40 63V80M44 63V80" stroke="#b3b3af" stroke-width="0.6" fill="none"/></svg>
<span class="t" style="left:429.75px;top:405.07px;font-size:11.5px;color:#000;transform:scaleX(0.98);">hds1</span>
<div class="a" style="left:514px;top:308px;width:67px;height:90px;background:#aeb6b2;box-shadow:0 1px 3px rgba(0,0,0,.35);"></div>
<svg class="a" style="left:514px;top:308px;" width="67.3" height="90" viewBox="0 0 67.3 90"><rect x="0" y="0" width="67.3" height="90" fill="#aeb6b2" /><rect x="0" y="0" width="67.3" height="4" fill="#5c625f" /><rect x="0" y="0" width="3" height="90" fill="#8f8a74" /><rect x="0" y="86" width="67.3" height="4" fill="#8a8470" /><rect x="5" y="6" width="2.6" height="2.2" fill="#7f8b8c" /><rect x="9.1" y="6" width="2.6" height="2.2" fill="#7f8b8c" /><rect x="13.2" y="6" width="2.6" height="2.2" fill="#7f8b8c" /><rect x="17.3" y="6" width="2.6" height="2.2" fill="#7f8b8c" /><rect x="21.4" y="6" width="2.6" height="2.2" fill="#7f8b8c" /><rect x="25.5" y="6" width="2.6" height="2.2" fill="#7f8b8c" /><rect x="29.6" y="6" width="2.6" height="2.2" fill="#7f8b8c" /><rect x="33.7" y="6" width="2.6" height="2.2" fill="#7f8b8c" /><rect x="37.8" y="6" width="2.6" height="2.2" fill="#7f8b8c" /><rect x="41.9" y="6" width="2.6" height="2.2" fill="#7f8b8c" /><rect x="46" y="6" width="2.6" height="2.2" fill="#7f8b8c" /><rect x="50.1" y="6" width="2.6" height="2.2" fill="#7f8b8c" /><rect x="54.2" y="6" width="2.6" height="2.2" fill="#7f8b8c" /><rect x="58.3" y="6" width="2.6" height="2.2" fill="#7f8b8c" /><rect x="5" y="10.1" width="2.6" height="2.2" fill="#7f8b8c" /><rect x="9.1" y="10.1" width="2.6" height="2.2" fill="#7f8b8c" /><rect x="13.2" y="10.1" width="2.6" height="2.2" fill="#7f8b8c" /><rect x="17.3" y="10.1" width="2.6" height="2.2" fill="#7f8b8c" /><rect x="21.4" y="10.1" width="2.6" height="2.2" fill="#7f8b8c" /><rect x="25.5" y="10.1" width="2.6" height="2.2" fill="#7f8b8c" /><rect x="29.6" y="10.1" width="2.6" height="2.2" fill="#7f8b8c" /><rect x="33.7" y="10.1" width="2.6" height="2.2" fill="#7f8b8c" /><rect x="37.8" y="10.1" width="2.6" height="2.2" fill="#7f8b8c" /><rect x="41.9" y="10.1" width="2.6" height="2.2" fill="#7f8b8c" /><rect x="46" y="10.1" width="2.6" height="2.2" fill="#7f8b8c" /><rect x="50.1" y="10.1" width="2.6" height="2.2" fill="#7f8b8c" /><rect x="54.2" y="10.1" width="2.6" height="2.2" fill="#7f8b8c" /><rect x="58.3" y="10.1" width="2.6" height="2.2" fill="#7f8b8c" /><rect x="5" y="14.2" width="2.6" height="2.2" fill="#7f8b8c" /><rect x="9.1" y="14.2" width="2.6" height="2.2" fill="#7f8b8c" /><rect x="13.2" y="14.2" width="2.6" height="2.2" fill="#7f8b8c" /><rect x="17.3" y="14.2" width="2.6" height="2.2" fill="#7f8b8c" /><rect x="21.4" y="14.2" width="2.6" height="2.2" fill="#7f8b8c" /><rect x="25.5" y="14.2" width="2.6" height="2.2" fill="#7f8b8c" /><rect x="29.6" y="14.2" width="2.6" height="2.2" fill="#7f8b8c" /><rect x="33.7" y="14.2" width="2.6" height="2.2" fill="#7f8b8c" /><rect x="37.8" y="14.2" width="2.6" height="2.2" fill="#7f8b8c" /><rect x="41.9" y="14.2" width="2.6" height="2.2" fill="#7f8b8c" /><rect x="46" y="14.2" width="2.6" height="2.2" fill="#7f8b8c" /><rect x="50.1" y="14.2" width="2.6" height="2.2" fill="#7f8b8c" /><rect x="54.2" y="14.2" width="2.6" height="2.2" fill="#7f8b8c" /><rect x="58.3" y="14.2" width="2.6" height="2.2" fill="#7f8b8c" /><rect x="5" y="18.3" width="2.6" height="2.2" fill="#7f8b8c" /><rect x="9.1" y="18.3" width="2.6" height="2.2" fill="#7f8b8c" /><rect x="13.2" y="18.3" width="2.6" height="2.2" fill="#7f8b8c" /><rect x="17.3" y="18.3" width="2.6" height="2.2" fill="#7f8b8c" /><rect x="21.4" y="18.3" width="2.6" height="2.2" fill="#7f8b8c" /><rect x="25.5" y="18.3" width="2.6" height="2.2" fill="#7f8b8c" /><rect x="29.6" y="18.3" width="2.6" height="2.2" fill="#7f8b8c" /><rect x="33.7" y="18.3" width="2.6" height="2.2" fill="#7f8b8c" /><rect x="37.8" y="18.3" width="2.6" height="2.2" fill="#7f8b8c" /><rect x="41.9" y="18.3" width="2.6" height="2.2" fill="#7f8b8c" /><rect x="46" y="18.3" width="2.6" height="2.2" fill="#7f8b8c" /><rect x="50.1" y="18.3" width="2.6" height="2.2" fill="#7f8b8c" /><rect x="54.2" y="18.3" width="2.6" height="2.2" fill="#7f8b8c" /><rect x="58.3" y="18.3" width="2.6" height="2.2" fill="#7f8b8c" /><rect x="5" y="22.4" width="2.6" height="2.2" fill="#7f8b8c" /><rect x="9.1" y="22.4" width="2.6" height="2.2" fill="#7f8b8c" /><rect x="13.2" y="22.4" width="2.6" height="2.2" fill="#7f8b8c" /><rect x="17.3" y="22.4" width="2.6" height="2.2" fill="#7f8b8c" /><rect x="21.4" y="22.4" width="2.6" height="2.2" fill="#7f8b8c" /><rect x="25.5" y="22.4" width="2.6" height="2.2" fill="#7f8b8c" /><rect x="29.6" y="22.4" width="2.6" height="2.2" fill="#7f8b8c" /><rect x="33.7" y="22.4" width="2.6" height="2.2" fill="#7f8b8c" /><rect x="37.8" y="22.4" width="2.6" height="2.2" fill="#7f8b8c" /><rect x="41.9" y="22.4" width="2.6" height="2.2" fill="#7f8b8c" /><rect x="46" y="22.4" width="2.6" height="2.2" fill="#7f8b8c" /><rect x="50.1" y="22.4" width="2.6" height="2.2" fill="#7f8b8c" /><rect x="54.2" y="22.4" width="2.6" height="2.2" fill="#7f8b8c" /><rect x="58.3" y="22.4" width="2.6" height="2.2" fill="#7f8b8c" /><rect x="5" y="26.5" width="2.6" height="2.2" fill="#7f8b8c" /><rect x="9.1" y="26.5" width="2.6" height="2.2" fill="#7f8b8c" /><rect x="13.2" y="26.5" width="2.6" height="2.2" fill="#7f8b8c" /><rect x="17.3" y="26.5" width="2.6" height="2.2" fill="#7f8b8c" /><rect x="21.4" y="26.5" width="2.6" height="2.2" fill="#7f8b8c" /><rect x="25.5" y="26.5" width="2.6" height="2.2" fill="#7f8b8c" /><rect x="29.6" y="26.5" width="2.6" height="2.2" fill="#7f8b8c" /><rect x="33.7" y="26.5" width="2.6" height="2.2" fill="#7f8b8c" /><rect x="37.8" y="26.5" width="2.6" height="2.2" fill="#7f8b8c" /><rect x="41.9" y="26.5" width="2.6" height="2.2" fill="#7f8b8c" /><rect x="46" y="26.5" width="2.6" height="2.2" fill="#7f8b8c" /><rect x="50.1" y="26.5" width="2.6" height="2.2" fill="#7f8b8c" /><rect x="54.2" y="26.5" width="2.6" height="2.2" fill="#7f8b8c" /><rect x="58.3" y="26.5" width="2.6" height="2.2" fill="#7f8b8c" /><rect x="5" y="30.6" width="2.6" height="2.2" fill="#7f8b8c" /><rect x="9.1" y="30.6" width="2.6" height="2.2" fill="#7f8b8c" /><rect x="13.2" y="30.6" width="2.6" height="2.2" fill="#7f8b8c" /><rect x="17.3" y="30.6" width="2.6" height="2.2" fill="#7f8b8c" /><rect x="21.4" y="30.6" width="2.6" height="2.2" fill="#7f8b8c" /><rect x="25.5" y="30.6" width="2.6" height="2.2" fill="#7f8b8c" /><rect x="29.6" y="30.6" width="2.6" height="2.2" fill="#7f8b8c" /><rect x="33.7" y="30.6" width="2.6" height="2.2" fill="#7f8b8c" /><rect x="37.8" y="30.6" width="2.6" height="2.2" fill="#7f8b8c" /><rect x="41.9" y="30.6" width="2.6" height="2.2" fill="#7f8b8c" /><rect x="46" y="30.6" width="2.6" height="2.2" fill="#7f8b8c" /><rect x="50.1" y="30.6" width="2.6" height="2.2" fill="#7f8b8c" /><rect x="54.2" y="30.6" width="2.6" height="2.2" fill="#7f8b8c" /><rect x="58.3" y="30.6" width="2.6" height="2.2" fill="#7f8b8c" /><rect x="5" y="34.7" width="2.6" height="2.2" fill="#7f8b8c" /><rect x="9.1" y="34.7" width="2.6" height="2.2" fill="#7f8b8c" /><rect x="13.2" y="34.7" width="2.6" height="2.2" fill="#7f8b8c" /><rect x="17.3" y="34.7" width="2.6" height="2.2" fill="#7f8b8c" /><rect x="21.4" y="34.7" width="2.6" height="2.2" fill="#7f8b8c" /><rect x="25.5" y="34.7" width="2.6" height="2.2" fill="#7f8b8c" /><rect x="29.6" y="34.7" width="2.6" height="2.2" fill="#7f8b8c" /><rect x="33.7" y="34.7" width="2.6" height="2.2" fill="#7f8b8c" /><rect x="37.8" y="34.7" width="2.6" height="2.2" fill="#7f8b8c" /><rect x="41.9" y="34.7" width="2.6" height="2.2" fill="#7f8b8c" /><rect x="46" y="34.7" width="2.6" height="2.2" fill="#7f8b8c" /><rect x="50.1" y="34.7" width="2.6" height="2.2" fill="#7f8b8c" /><rect x="54.2" y="34.7" width="2.6" height="2.2" fill="#7f8b8c" /><rect x="58.3" y="34.7" width="2.6" height="2.2" fill="#7f8b8c" /><rect x="5" y="38.8" width="2.6" height="2.2" fill="#7f8b8c" /><rect x="9.1" y="38.8" width="2.6" height="2.2" fill="#7f8b8c" /><rect x="13.2" y="38.8" width="2.6" height="2.2" fill="#7f8b8c" /><rect x="17.3" y="38.8" width="2.6" height="2.2" fill="#7f8b8c" /><rect x="21.4" y="38.8" width="2.6" height="2.2" fill="#7f8b8c" /><rect x="25.5" y="38.8" width="2.6" height="2.2" fill="#7f8b8c" /><rect x="29.6" y="38.8" width="2.6" height="2.2" fill="#7f8b8c" /><rect x="33.7" y="38.8" width="2.6" height="2.2" fill="#7f8b8c" /><rect x="37.8" y="38.8" width="2.6" height="2.2" fill="#7f8b8c" /><rect x="41.9" y="38.8" width="2.6" height="2.2" fill="#7f8b8c" /><rect x="46" y="38.8" width="2.6" height="2.2" fill="#7f8b8c" /><rect x="50.1" y="38.8" width="2.6" height="2.2" fill="#7f8b8c" /><rect x="54.2" y="38.8" width="2.6" height="2.2" fill="#7f8b8c" /><rect x="58.3" y="38.8" width="2.6" height="2.2" fill="#7f8b8c" /><rect x="5" y="42.9" width="2.6" height="2.2" fill="#7f8b8c" /><rect x="9.1" y="42.9" width="2.6" height="2.2" fill="#7f8b8c" /><rect x="13.2" y="42.9" width="2.6" height="2.2" fill="#7f8b8c" /><rect x="17.3" y="42.9" width="2.6" height="2.2" fill="#7f8b8c" /><rect x="21.4" y="42.9" width="2.6" height="2.2" fill="#7f8b8c" /><rect x="25.5" y="42.9" width="2.6" height="2.2" fill="#7f8b8c" /><rect x="29.6" y="42.9" width="2.6" height="2.2" fill="#7f8b8c" /><rect x="33.7" y="42.9" width="2.6" height="2.2" fill="#7f8b8c" /><rect x="37.8" y="42.9" width="2.6" height="2.2" fill="#7f8b8c" /><rect x="41.9" y="42.9" width="2.6" height="2.2" fill="#7f8b8c" /><rect x="46" y="42.9" width="2.6" height="2.2" fill="#7f8b8c" /><rect x="50.1" y="42.9" width="2.6" height="2.2" fill="#7f8b8c" /><rect x="54.2" y="42.9" width="2.6" height="2.2" fill="#7f8b8c" /><rect x="58.3" y="42.9" width="2.6" height="2.2" fill="#7f8b8c" /><rect x="5" y="47" width="2.6" height="2.2" fill="#7f8b8c" /><rect x="9.1" y="47" width="2.6" height="2.2" fill="#7f8b8c" /><rect x="13.2" y="47" width="2.6" height="2.2" fill="#7f8b8c" /><rect x="17.3" y="47" width="2.6" height="2.2" fill="#7f8b8c" /><rect x="21.4" y="47" width="2.6" height="2.2" fill="#7f8b8c" /><rect x="25.5" y="47" width="2.6" height="2.2" fill="#7f8b8c" /><rect x="29.6" y="47" width="2.6" height="2.2" fill="#7f8b8c" /><rect x="33.7" y="47" width="2.6" height="2.2" fill="#7f8b8c" /><rect x="37.8" y="47" width="2.6" height="2.2" fill="#7f8b8c" /><rect x="41.9" y="47" width="2.6" height="2.2" fill="#7f8b8c" /><rect x="46" y="47" width="2.6" height="2.2" fill="#7f8b8c" /><rect x="50.1" y="47" width="2.6" height="2.2" fill="#7f8b8c" /><rect x="54.2" y="47" width="2.6" height="2.2" fill="#7f8b8c" /><rect x="58.3" y="47" width="2.6" height="2.2" fill="#7f8b8c" /><rect x="5" y="51.1" width="2.6" height="2.2" fill="#7f8b8c" /><rect x="9.1" y="51.1" width="2.6" height="2.2" fill="#7f8b8c" /><rect x="13.2" y="51.1" width="2.6" height="2.2" fill="#7f8b8c" /><rect x="17.3" y="51.1" width="2.6" height="2.2" fill="#7f8b8c" /><rect x="21.4" y="51.1" width="2.6" height="2.2" fill="#7f8b8c" /><rect x="25.5" y="51.1" width="2.6" height="2.2" fill="#7f8b8c" /><rect x="29.6" y="51.1" width="2.6" height="2.2" fill="#7f8b8c" /><rect x="33.7" y="51.1" width="2.6" height="2.2" fill="#7f8b8c" /><rect x="37.8" y="51.1" width="2.6" height="2.2" fill="#7f8b8c" /><rect x="41.9" y="51.1" width="2.6" height="2.2" fill="#7f8b8c" /><rect x="46" y="51.1" width="2.6" height="2.2" fill="#7f8b8c" /><rect x="50.1" y="51.1" width="2.6" height="2.2" fill="#7f8b8c" /><rect x="54.2" y="51.1" width="2.6" height="2.2" fill="#7f8b8c" /><rect x="58.3" y="51.1" width="2.6" height="2.2" fill="#7f8b8c" /><rect x="5" y="55.2" width="2.6" height="2.2" fill="#7f8b8c" /><rect x="9.1" y="55.2" width="2.6" height="2.2" fill="#7f8b8c" /><rect x="13.2" y="55.2" width="2.6" height="2.2" fill="#7f8b8c" /><rect x="17.3" y="55.2" width="2.6" height="2.2" fill="#7f8b8c" /><rect x="21.4" y="55.2" width="2.6" height="2.2" fill="#7f8b8c" /><rect x="25.5" y="55.2" width="2.6" height="2.2" fill="#7f8b8c" /><rect x="29.6" y="55.2" width="2.6" height="2.2" fill="#7f8b8c" /><rect x="33.7" y="55.2" width="2.6" height="2.2" fill="#7f8b8c" /><rect x="37.8" y="55.2" width="2.6" height="2.2" fill="#7f8b8c" /><rect x="41.9" y="55.2" width="2.6" height="2.2" fill="#7f8b8c" /><rect x="46" y="55.2" width="2.6" height="2.2" fill="#7f8b8c" /><rect x="50.1" y="55.2" width="2.6" height="2.2" fill="#7f8b8c" /><rect x="54.2" y="55.2" width="2.6" height="2.2" fill="#7f8b8c" /><rect x="58.3" y="55.2" width="2.6" height="2.2" fill="#7f8b8c" /><rect x="5" y="59.3" width="2.6" height="2.2" fill="#7f8b8c" /><rect x="9.1" y="59.3" width="2.6" height="2.2" fill="#7f8b8c" /><rect x="13.2" y="59.3" width="2.6" height="2.2" fill="#7f8b8c" /><rect x="17.3" y="59.3" width="2.6" height="2.2" fill="#7f8b8c" /><rect x="21.4" y="59.3" width="2.6" height="2.2" fill="#7f8b8c" /><rect x="25.5" y="59.3" width="2.6" height="2.2" fill="#7f8b8c" /><rect x="29.6" y="59.3" width="2.6" height="2.2" fill="#7f8b8c" /><rect x="33.7" y="59.3" width="2.6" height="2.2" fill="#7f8b8c" /><rect x="37.8" y="59.3" width="2.6" height="2.2" fill="#7f8b8c" /><rect x="41.9" y="59.3" width="2.6" height="2.2" fill="#7f8b8c" /><rect x="46" y="59.3" width="2.6" height="2.2" fill="#7f8b8c" /><rect x="50.1" y="59.3" width="2.6" height="2.2" fill="#7f8b8c" /><rect x="54.2" y="59.3" width="2.6" height="2.2" fill="#7f8b8c" /><rect x="58.3" y="59.3" width="2.6" height="2.2" fill="#7f8b8c" /><rect x="5" y="63.4" width="2.6" height="2.2" fill="#7f8b8c" /><rect x="9.1" y="63.4" width="2.6" height="2.2" fill="#7f8b8c" /><rect x="13.2" y="63.4" width="2.6" height="2.2" fill="#7f8b8c" /><rect x="17.3" y="63.4" width="2.6" height="2.2" fill="#7f8b8c" /><rect x="21.4" y="63.4" width="2.6" height="2.2" fill="#7f8b8c" /><rect x="25.5" y="63.4" width="2.6" height="2.2" fill="#7f8b8c" /><rect x="29.6" y="63.4" width="2.6" height="2.2" fill="#7f8b8c" /><rect x="33.7" y="63.4" width="2.6" height="2.2" fill="#7f8b8c" /><rect x="37.8" y="63.4" width="2.6" height="2.2" fill="#7f8b8c" /><rect x="41.9" y="63.4" width="2.6" height="2.2" fill="#7f8b8c" /><rect x="46" y="63.4" width="2.6" height="2.2" fill="#7f8b8c" /><rect x="50.1" y="63.4" width="2.6" height="2.2" fill="#7f8b8c" /><rect x="54.2" y="63.4" width="2.6" height="2.2" fill="#7f8b8c" /><rect x="58.3" y="63.4" width="2.6" height="2.2" fill="#7f8b8c" /><rect x="5" y="67.5" width="2.6" height="2.2" fill="#7f8b8c" /><rect x="9.1" y="67.5" width="2.6" height="2.2" fill="#7f8b8c" /><rect x="13.2" y="67.5" width="2.6" height="2.2" fill="#7f8b8c" /><rect x="17.3" y="67.5" width="2.6" height="2.2" fill="#7f8b8c" /><rect x="21.4" y="67.5" width="2.6" height="2.2" fill="#7f8b8c" /><rect x="25.5" y="67.5" width="2.6" height="2.2" fill="#7f8b8c" /><rect x="29.6" y="67.5" width="2.6" height="2.2" fill="#7f8b8c" /><rect x="33.7" y="67.5" width="2.6" height="2.2" fill="#7f8b8c" /><rect x="37.8" y="67.5" width="2.6" height="2.2" fill="#7f8b8c" /><rect x="41.9" y="67.5" width="2.6" height="2.2" fill="#7f8b8c" /><rect x="46" y="67.5" width="2.6" height="2.2" fill="#7f8b8c" /><rect x="50.1" y="67.5" width="2.6" height="2.2" fill="#7f8b8c" /><rect x="54.2" y="67.5" width="2.6" height="2.2" fill="#7f8b8c" /><rect x="58.3" y="67.5" width="2.6" height="2.2" fill="#7f8b8c" /><rect x="5" y="71.6" width="2.6" height="2.2" fill="#7f8b8c" /><rect x="9.1" y="71.6" width="2.6" height="2.2" fill="#7f8b8c" /><rect x="13.2" y="71.6" width="2.6" height="2.2" fill="#7f8b8c" /><rect x="17.3" y="71.6" width="2.6" height="2.2" fill="#7f8b8c" /><rect x="21.4" y="71.6" width="2.6" height="2.2" fill="#7f8b8c" /><rect x="25.5" y="71.6" width="2.6" height="2.2" fill="#7f8b8c" /><rect x="29.6" y="71.6" width="2.6" height="2.2" fill="#7f8b8c" /><rect x="33.7" y="71.6" width="2.6" height="2.2" fill="#7f8b8c" /><rect x="37.8" y="71.6" width="2.6" height="2.2" fill="#7f8b8c" /><rect x="41.9" y="71.6" width="2.6" height="2.2" fill="#7f8b8c" /><rect x="46" y="71.6" width="2.6" height="2.2" fill="#7f8b8c" /><rect x="50.1" y="71.6" width="2.6" height="2.2" fill="#7f8b8c" /><rect x="54.2" y="71.6" width="2.6" height="2.2" fill="#7f8b8c" /><rect x="58.3" y="71.6" width="2.6" height="2.2" fill="#7f8b8c" /><rect x="5" y="75.7" width="2.6" height="2.2" fill="#7f8b8c" /><rect x="9.1" y="75.7" width="2.6" height="2.2" fill="#7f8b8c" /><rect x="13.2" y="75.7" width="2.6" height="2.2" fill="#7f8b8c" /><rect x="17.3" y="75.7" width="2.6" height="2.2" fill="#7f8b8c" /><rect x="21.4" y="75.7" width="2.6" height="2.2" fill="#7f8b8c" /><rect x="25.5" y="75.7" width="2.6" height="2.2" fill="#7f8b8c" /><rect x="29.6" y="75.7" width="2.6" height="2.2" fill="#7f8b8c" /><rect x="33.7" y="75.7" width="2.6" height="2.2" fill="#7f8b8c" /><rect x="37.8" y="75.7" width="2.6" height="2.2" fill="#7f8b8c" /><rect x="41.9" y="75.7" width="2.6" height="2.2" fill="#7f8b8c" /><rect x="46" y="75.7" width="2.6" height="2.2" fill="#7f8b8c" /><rect x="50.1" y="75.7" width="2.6" height="2.2" fill="#7f8b8c" /><rect x="54.2" y="75.7" width="2.6" height="2.2" fill="#7f8b8c" /><rect x="58.3" y="75.7" width="2.6" height="2.2" fill="#7f8b8c" /><rect x="5" y="79.8" width="2.6" height="2.2" fill="#7f8b8c" /><rect x="9.1" y="79.8" width="2.6" height="2.2" fill="#7f8b8c" /><rect x="13.2" y="79.8" width="2.6" height="2.2" fill="#7f8b8c" /><rect x="17.3" y="79.8" width="2.6" height="2.2" fill="#7f8b8c" /><rect x="21.4" y="79.8" width="2.6" height="2.2" fill="#7f8b8c" /><rect x="25.5" y="79.8" width="2.6" height="2.2" fill="#7f8b8c" /><rect x="29.6" y="79.8" width="2.6" height="2.2" fill="#7f8b8c" /><rect x="33.7" y="79.8" width="2.6" height="2.2" fill="#7f8b8c" /><rect x="37.8" y="79.8" width="2.6" height="2.2" fill="#7f8b8c" /><rect x="41.9" y="79.8" width="2.6" height="2.2" fill="#7f8b8c" /><rect x="46" y="79.8" width="2.6" height="2.2" fill="#7f8b8c" /><rect x="50.1" y="79.8" width="2.6" height="2.2" fill="#7f8b8c" /><rect x="54.2" y="79.8" width="2.6" height="2.2" fill="#7f8b8c" /><rect x="58.3" y="79.8" width="2.6" height="2.2" fill="#7f8b8c" /><rect x="5" y="83.9" width="2.6" height="2.2" fill="#7f8b8c" /><rect x="9.1" y="83.9" width="2.6" height="2.2" fill="#7f8b8c" /><rect x="13.2" y="83.9" width="2.6" height="2.2" fill="#7f8b8c" /><rect x="17.3" y="83.9" width="2.6" height="2.2" fill="#7f8b8c" /><rect x="21.4" y="83.9" width="2.6" height="2.2" fill="#7f8b8c" /><rect x="25.5" y="83.9" width="2.6" height="2.2" fill="#7f8b8c" /><rect x="29.6" y="83.9" width="2.6" height="2.2" fill="#7f8b8c" /><rect x="33.7" y="83.9" width="2.6" height="2.2" fill="#7f8b8c" /><rect x="37.8" y="83.9" width="2.6" height="2.2" fill="#7f8b8c" /><rect x="41.9" y="83.9" width="2.6" height="2.2" fill="#7f8b8c" /><rect x="46" y="83.9" width="2.6" height="2.2" fill="#7f8b8c" /><rect x="50.1" y="83.9" width="2.6" height="2.2" fill="#7f8b8c" /><rect x="54.2" y="83.9" width="2.6" height="2.2" fill="#7f8b8c" /><rect x="58.3" y="83.9" width="2.6" height="2.2" fill="#7f8b8c" /><rect x="3" y="4" width="64" height="20" fill="#9fb0c4" opacity=".35"/><rect x="31" y="62" width="3" height="3" fill="#2f4fd0" /></svg>
<span class="t" style="left:537.75px;top:405.07px;font-size:11.5px;color:#000;transform:scaleX(0.98);">hds2</span>
<div class="a" style="left:622px;top:308px;width:67px;height:90px;background:#d3ccb6;box-shadow:0 1px 3px rgba(0,0,0,.35);"></div>
<svg class="a" style="left:621.8px;top:308px;" width="67.5" height="90" viewBox="0 0 67.5 90"><rect x="0" y="0" width="67.5" height="90" fill="#d3ccb6" /><rect x="50" y="0" width="17.5" height="90" fill="#b9b29e" /><rect x="0" y="78" width="67.5" height="12" fill="#dcc9a2" /><rect x="0" y="87.5" width="67.5" height="2.5" fill="#c9985a" /><rect x="3" y="5" width="2.6" height="2.1" fill="#a9b0b0" /><rect x="7" y="5" width="2.6" height="2.1" fill="#a9b0b0" /><rect x="11" y="5" width="2.6" height="2.1" fill="#a9b0b0" /><rect x="15" y="5" width="2.6" height="2.1" fill="#a9b0b0" /><rect x="19" y="5" width="2.6" height="2.1" fill="#a9b0b0" /><rect x="23" y="5" width="2.6" height="2.1" fill="#a9b0b0" /><rect x="27" y="5" width="2.6" height="2.1" fill="#a9b0b0" /><rect x="31" y="5" width="2.6" height="2.1" fill="#a9b0b0" /><rect x="35" y="5" width="2.6" height="2.1" fill="#a9b0b0" /><rect x="39" y="5" width="2.6" height="2.1" fill="#a9b0b0" /><rect x="43" y="5" width="2.6" height="2.1" fill="#a9b0b0" /><rect x="3" y="8.9" width="2.6" height="2.1" fill="#a9b0b0" /><rect x="7" y="8.9" width="2.6" height="2.1" fill="#a9b0b0" /><rect x="11" y="8.9" width="2.6" height="2.1" fill="#a9b0b0" /><rect x="15" y="8.9" width="2.6" height="2.1" fill="#a9b0b0" /><rect x="19" y="8.9" width="2.6" height="2.1" fill="#a9b0b0" /><rect x="23" y="8.9" width="2.6" height="2.1" fill="#a9b0b0" /><rect x="27" y="8.9" width="2.6" height="2.1" fill="#a9b0b0" /><rect x="31" y="8.9" width="2.6" height="2.1" fill="#a9b0b0" /><rect x="35" y="8.9" width="2.6" height="2.1" fill="#a9b0b0" /><rect x="39" y="8.9" width="2.6" height="2.1" fill="#a9b0b0" /><rect x="43" y="8.9" width="2.6" height="2.1" fill="#a9b0b0" /><rect x="3" y="12.8" width="2.6" height="2.1" fill="#a9b0b0" /><rect x="7" y="12.8" width="2.6" height="2.1" fill="#a9b0b0" /><rect x="11" y="12.8" width="2.6" height="2.1" fill="#a9b0b0" /><rect x="15" y="12.8" width="2.6" height="2.1" fill="#a9b0b0" /><rect x="19" y="12.8" width="2.6" height="2.1" fill="#a9b0b0" /><rect x="23" y="12.8" width="2.6" height="2.1" fill="#a9b0b0" /><rect x="27" y="12.8" width="2.6" height="2.1" fill="#a9b0b0" /><rect x="31" y="12.8" width="2.6" height="2.1" fill="#a9b0b0" /><rect x="35" y="12.8" width="2.6" height="2.1" fill="#a9b0b0" /><rect x="39" y="12.8" width="2.6" height="2.1" fill="#a9b0b0" /><rect x="43" y="12.8" width="2.6" height="2.1" fill="#a9b0b0" /><rect x="3" y="16.7" width="2.6" height="2.1" fill="#a9b0b0" /><rect x="7" y="16.7" width="2.6" height="2.1" fill="#a9b0b0" /><rect x="11" y="16.7" width="2.6" height="2.1" fill="#a9b0b0" /><rect x="15" y="16.7" width="2.6" height="2.1" fill="#a9b0b0" /><rect x="19" y="16.7" width="2.6" height="2.1" fill="#a9b0b0" /><rect x="23" y="16.7" width="2.6" height="2.1" fill="#a9b0b0" /><rect x="27" y="16.7" width="2.6" height="2.1" fill="#a9b0b0" /><rect x="31" y="16.7" width="2.6" height="2.1" fill="#a9b0b0" /><rect x="35" y="16.7" width="2.6" height="2.1" fill="#a9b0b0" /><rect x="39" y="16.7" width="2.6" height="2.1" fill="#a9b0b0" /><rect x="43" y="16.7" width="2.6" height="2.1" fill="#a9b0b0" /><rect x="3" y="20.6" width="2.6" height="2.1" fill="#a9b0b0" /><rect x="7" y="20.6" width="2.6" height="2.1" fill="#a9b0b0" /><rect x="11" y="20.6" width="2.6" height="2.1" fill="#a9b0b0" /><rect x="15" y="20.6" width="2.6" height="2.1" fill="#a9b0b0" /><rect x="19" y="20.6" width="2.6" height="2.1" fill="#a9b0b0" /><rect x="23" y="20.6" width="2.6" height="2.1" fill="#a9b0b0" /><rect x="27" y="20.6" width="2.6" height="2.1" fill="#a9b0b0" /><rect x="31" y="20.6" width="2.6" height="2.1" fill="#a9b0b0" /><rect x="35" y="20.6" width="2.6" height="2.1" fill="#a9b0b0" /><rect x="39" y="20.6" width="2.6" height="2.1" fill="#a9b0b0" /><rect x="43" y="20.6" width="2.6" height="2.1" fill="#a9b0b0" /><rect x="3" y="24.5" width="2.6" height="2.1" fill="#a9b0b0" /><rect x="7" y="24.5" width="2.6" height="2.1" fill="#a9b0b0" /><rect x="11" y="24.5" width="2.6" height="2.1" fill="#a9b0b0" /><rect x="15" y="24.5" width="2.6" height="2.1" fill="#a9b0b0" /><rect x="19" y="24.5" width="2.6" height="2.1" fill="#a9b0b0" /><rect x="23" y="24.5" width="2.6" height="2.1" fill="#a9b0b0" /><rect x="27" y="24.5" width="2.6" height="2.1" fill="#a9b0b0" /><rect x="31" y="24.5" width="2.6" height="2.1" fill="#a9b0b0" /><rect x="35" y="24.5" width="2.6" height="2.1" fill="#a9b0b0" /><rect x="39" y="24.5" width="2.6" height="2.1" fill="#a9b0b0" /><rect x="43" y="24.5" width="2.6" height="2.1" fill="#a9b0b0" /><rect x="3" y="28.4" width="2.6" height="2.1" fill="#a9b0b0" /><rect x="7" y="28.4" width="2.6" height="2.1" fill="#a9b0b0" /><rect x="11" y="28.4" width="2.6" height="2.1" fill="#a9b0b0" /><rect x="15" y="28.4" width="2.6" height="2.1" fill="#a9b0b0" /><rect x="19" y="28.4" width="2.6" height="2.1" fill="#a9b0b0" /><rect x="23" y="28.4" width="2.6" height="2.1" fill="#a9b0b0" /><rect x="27" y="28.4" width="2.6" height="2.1" fill="#a9b0b0" /><rect x="31" y="28.4" width="2.6" height="2.1" fill="#a9b0b0" /><rect x="35" y="28.4" width="2.6" height="2.1" fill="#a9b0b0" /><rect x="39" y="28.4" width="2.6" height="2.1" fill="#a9b0b0" /><rect x="43" y="28.4" width="2.6" height="2.1" fill="#a9b0b0" /><rect x="3" y="32.3" width="2.6" height="2.1" fill="#a9b0b0" /><rect x="7" y="32.3" width="2.6" height="2.1" fill="#a9b0b0" /><rect x="11" y="32.3" width="2.6" height="2.1" fill="#a9b0b0" /><rect x="15" y="32.3" width="2.6" height="2.1" fill="#a9b0b0" /><rect x="19" y="32.3" width="2.6" height="2.1" fill="#a9b0b0" /><rect x="23" y="32.3" width="2.6" height="2.1" fill="#a9b0b0" /><rect x="27" y="32.3" width="2.6" height="2.1" fill="#a9b0b0" /><rect x="31" y="32.3" width="2.6" height="2.1" fill="#a9b0b0" /><rect x="35" y="32.3" width="2.6" height="2.1" fill="#a9b0b0" /><rect x="39" y="32.3" width="2.6" height="2.1" fill="#a9b0b0" /><rect x="43" y="32.3" width="2.6" height="2.1" fill="#a9b0b0" /><rect x="3" y="36.2" width="2.6" height="2.1" fill="#a9b0b0" /><rect x="7" y="36.2" width="2.6" height="2.1" fill="#a9b0b0" /><rect x="11" y="36.2" width="2.6" height="2.1" fill="#a9b0b0" /><rect x="15" y="36.2" width="2.6" height="2.1" fill="#a9b0b0" /><rect x="19" y="36.2" width="2.6" height="2.1" fill="#a9b0b0" /><rect x="23" y="36.2" width="2.6" height="2.1" fill="#a9b0b0" /><rect x="27" y="36.2" width="2.6" height="2.1" fill="#a9b0b0" /><rect x="31" y="36.2" width="2.6" height="2.1" fill="#a9b0b0" /><rect x="35" y="36.2" width="2.6" height="2.1" fill="#a9b0b0" /><rect x="39" y="36.2" width="2.6" height="2.1" fill="#a9b0b0" /><rect x="43" y="36.2" width="2.6" height="2.1" fill="#a9b0b0" /><rect x="3" y="40.1" width="2.6" height="2.1" fill="#a9b0b0" /><rect x="7" y="40.1" width="2.6" height="2.1" fill="#a9b0b0" /><rect x="11" y="40.1" width="2.6" height="2.1" fill="#a9b0b0" /><rect x="15" y="40.1" width="2.6" height="2.1" fill="#a9b0b0" /><rect x="19" y="40.1" width="2.6" height="2.1" fill="#a9b0b0" /><rect x="23" y="40.1" width="2.6" height="2.1" fill="#a9b0b0" /><rect x="27" y="40.1" width="2.6" height="2.1" fill="#a9b0b0" /><rect x="31" y="40.1" width="2.6" height="2.1" fill="#a9b0b0" /><rect x="35" y="40.1" width="2.6" height="2.1" fill="#a9b0b0" /><rect x="39" y="40.1" width="2.6" height="2.1" fill="#a9b0b0" /><rect x="43" y="40.1" width="2.6" height="2.1" fill="#a9b0b0" /><rect x="3" y="44" width="2.6" height="2.1" fill="#a9b0b0" /><rect x="7" y="44" width="2.6" height="2.1" fill="#a9b0b0" /><rect x="11" y="44" width="2.6" height="2.1" fill="#a9b0b0" /><rect x="15" y="44" width="2.6" height="2.1" fill="#a9b0b0" /><rect x="19" y="44" width="2.6" height="2.1" fill="#a9b0b0" /><rect x="23" y="44" width="2.6" height="2.1" fill="#a9b0b0" /><rect x="27" y="44" width="2.6" height="2.1" fill="#a9b0b0" /><rect x="31" y="44" width="2.6" height="2.1" fill="#a9b0b0" /><rect x="35" y="44" width="2.6" height="2.1" fill="#a9b0b0" /><rect x="39" y="44" width="2.6" height="2.1" fill="#a9b0b0" /><rect x="43" y="44" width="2.6" height="2.1" fill="#a9b0b0" /><rect x="3" y="47.9" width="2.6" height="2.1" fill="#a9b0b0" /><rect x="7" y="47.9" width="2.6" height="2.1" fill="#a9b0b0" /><rect x="11" y="47.9" width="2.6" height="2.1" fill="#a9b0b0" /><rect x="15" y="47.9" width="2.6" height="2.1" fill="#a9b0b0" /><rect x="19" y="47.9" width="2.6" height="2.1" fill="#a9b0b0" /><rect x="23" y="47.9" width="2.6" height="2.1" fill="#a9b0b0" /><rect x="27" y="47.9" width="2.6" height="2.1" fill="#a9b0b0" /><rect x="31" y="47.9" width="2.6" height="2.1" fill="#a9b0b0" /><rect x="35" y="47.9" width="2.6" height="2.1" fill="#a9b0b0" /><rect x="39" y="47.9" width="2.6" height="2.1" fill="#a9b0b0" /><rect x="43" y="47.9" width="2.6" height="2.1" fill="#a9b0b0" /><rect x="3" y="51.8" width="2.6" height="2.1" fill="#a9b0b0" /><rect x="7" y="51.8" width="2.6" height="2.1" fill="#a9b0b0" /><rect x="11" y="51.8" width="2.6" height="2.1" fill="#a9b0b0" /><rect x="15" y="51.8" width="2.6" height="2.1" fill="#a9b0b0" /><rect x="19" y="51.8" width="2.6" height="2.1" fill="#a9b0b0" /><rect x="23" y="51.8" width="2.6" height="2.1" fill="#a9b0b0" /><rect x="27" y="51.8" width="2.6" height="2.1" fill="#a9b0b0" /><rect x="31" y="51.8" width="2.6" height="2.1" fill="#a9b0b0" /><rect x="35" y="51.8" width="2.6" height="2.1" fill="#a9b0b0" /><rect x="39" y="51.8" width="2.6" height="2.1" fill="#a9b0b0" /><rect x="43" y="51.8" width="2.6" height="2.1" fill="#a9b0b0" /><rect x="3" y="55.7" width="2.6" height="2.1" fill="#a9b0b0" /><rect x="7" y="55.7" width="2.6" height="2.1" fill="#a9b0b0" /><rect x="11" y="55.7" width="2.6" height="2.1" fill="#a9b0b0" /><rect x="15" y="55.7" width="2.6" height="2.1" fill="#a9b0b0" /><rect x="19" y="55.7" width="2.6" height="2.1" fill="#a9b0b0" /><rect x="23" y="55.7" width="2.6" height="2.1" fill="#a9b0b0" /><rect x="27" y="55.7" width="2.6" height="2.1" fill="#a9b0b0" /><rect x="31" y="55.7" width="2.6" height="2.1" fill="#a9b0b0" /><rect x="35" y="55.7" width="2.6" height="2.1" fill="#a9b0b0" /><rect x="39" y="55.7" width="2.6" height="2.1" fill="#a9b0b0" /><rect x="43" y="55.7" width="2.6" height="2.1" fill="#a9b0b0" /><path d="M3 62H40M3 64.8H40M3 67.6H40M3 70.4H40M3 73.2H40M3 76H40" stroke="#bdb8a6" stroke-width="0.6" fill="none"/><path d="M54 6V80M58 6V80M62 6V80" stroke="#9d9786" stroke-width="0.7" fill="none"/><rect x="20" y="36" width="2" height="2" fill="#3f5fd0" /></svg>
<span class="t" style="left:645.75px;top:405.07px;font-size:11.5px;color:#000;transform:scaleX(0.98);">hds3</span>
<div class="a" style="left:719px;top:368px;width:91px;height:30px;background:#2d2d2d;box-shadow:0 1px 3px rgba(0,0,0,.35);"></div>
<svg class="a" style="left:719px;top:368px;" width="90.5" height="30" viewBox="0 0 90.5 30"><rect x="0" y="0" width="90.5" height="30" fill="#2d2d2d" /><rect x="0" y="0" width="90.5" height="1.2" fill="#6a6a6a" /><rect x="4" y="6" width="81" height="19" fill="#f4f4f4" /><rect x="4" y="6" width="81" height="1.3" fill="#8a8a8a" /><path d="M6 11H22M6 13H22" stroke="#888" stroke-width="0.6" fill="none"/><path d="M40 9H48M40 20H48" stroke="#999" stroke-width="0.6" fill="none"/><path d="M52 11.5H82" stroke="#777" stroke-width="0.7" fill="none"/><path d="M34 16H60M34 18H60" stroke="#bbb" stroke-width="0.5" fill="none"/><rect x="4" y="23.5" width="9" height="1.5" fill="#ddd" /></svg>
<span class="t" style="left:750px;top:405.07px;font-size:11.5px;color:#000;">HNAS</span>
<div class="a" style="left:827px;top:374px;width:91px;height:24px;background:#fff;box-shadow:0 1px 3px rgba(0,0,0,.35);"></div>
<svg class="a" style="left:827px;top:374px;" width="90.5" height="24" viewBox="0 0 90.5 24"><rect x="0" y="0" width="70" height="1.5" fill="#5f8f1f" /><rect x="9" y="2.5" width="81.5" height="1.6" fill="#8fbf3f" /><rect x="0" y="1.5" width="9" height="22.5" fill="#f3f3f3" /><path d="M10 6H90M10 7.9H90M10 9.8H90M10 11.7H90M10 13.6H90M10 15.5H90M10 17.4H90M10 19.3H90M10 21.2H90" stroke="#e3e3e3" stroke-width="0.5" fill="none"/><path d="M30 4V23M40 4V23M52 4V23M60 4V23" stroke="#d9d9d9" stroke-width="0.5" fill="none"/><path d="M11 6H18M11 7.9H18M11 9.8H18M11 11.7H18M11 13.6H18M11 15.5H18M11 17.4H18M11 19.3H18" stroke="#a9a9a9" stroke-width="0.5" fill="none"/><rect x="4" y="9" width="2.5" height="1" fill="#3a66d0" /></svg>
<span class="t" style="left:855.25px;top:405.07px;font-size:11.5px;color:#000;transform:scaleX(0.98);">HNAS1</span>
<div class="a" style="left:935px;top:331px;width:90px;height:67px;background:#c7ccd5;box-shadow:0 1px 3px rgba(0,0,0,.35);"></div>
<svg class="a" style="left:935px;top:331px;" width="90" height="67" viewBox="0 0 90 67"><defs><linearGradient id="i1" x1="0" x2="0" y1="0" y2="1"><stop offset="0" stop-color="#1b2f66"/><stop offset=".3" stop-color="#2463c4"/><stop offset="1" stop-color="#1747a8"/></linearGradient></defs><rect x="0" y="0" width="90" height="67" fill="#c7ccd5" /><path d="M0 1H68M0 3H68M0 5H68M0 7H68M0 9H68M0 11H68M0 13H68M0 15H68M0 17H68M0 19H68M0 21H68M0 23H68M0 25H68M0 27H68M0 29H68M0 31H68M0 33H68M0 35H68M0 37H68M0 39H68M0 41H68M0 43H68M0 45H68M0 47H68M0 49H68M0 51H68M0 53H68M0 55H68" stroke="#b9bfc9" stroke-width="0.6" fill="none"/><rect x="68" y="0" width="22" height="56" fill="url(#i1)" /><rect x="60" y="0" width="8" height="56" fill="#aeb4c0" /><rect x="76" y="3" width="7" height="8" fill="#e0b030" /><rect x="11" y="14" width="50" height="30" rx="3" fill="#c3cad4" stroke="#475063" stroke-width="1"/><rect x="14" y="12.5" width="19" height="3.5" fill="#4a3a3a" /><rect x="14" y="19" width="44" height="6" fill="#dfe3e8" /><rect x="14" y="19" width="1.5" height="6" fill="#b33" /><rect x="56.5" y="19" width="1.5" height="6" fill="#b33" /><path d="M24 22H46" stroke="#666" stroke-width="0.7" fill="none"/><rect x="14" y="27" width="44" height="6" fill="#dfe3e8" /><rect x="14" y="27" width="1.5" height="6" fill="#b33" /><rect x="56.5" y="27" width="1.5" height="6" fill="#b33" /><path d="M24 30H46" stroke="#666" stroke-width="0.7" fill="none"/><rect x="14" y="35" width="44" height="6" fill="#dfe3e8" /><rect x="14" y="35" width="1.5" height="6" fill="#b33" /><rect x="56.5" y="35" width="1.5" height="6" fill="#b33" /><path d="M24 38H46" stroke="#666" stroke-width="0.7" fill="none"/><rect x="0" y="48" width="42" height="3" fill="#c43c3c" /><rect x="58" y="48" width="4" height="5" fill="#9a3a3a" /><rect x="0" y="55" width="90" height="12" fill="#23262d" /><circle cx="14" cy="61" r="2.500" fill="#b5564a"/><rect x="28" y="59" width="6" height="4.5" fill="#3aa050" /><path d="M40 61.5H70" stroke="#6d7380" stroke-width="1.5" fill="none"/><path d="M74 60H84M74 63H84" stroke="#aab" stroke-width="0.8" fill="none"/></svg>
<span class="t" style="left:956.5px;top:405.07px;font-size:11.5px;color:#000;transform:scaleX(0.95);">IMG_1723</span>
<div class="a" style="left:1043px;top:331px;width:91px;height:67px;background:#17110f;box-shadow:0 1px 3px rgba(0,0,0,.35);"></div>
<svg class="a" style="left:1043px;top:331px;" width="90.5" height="67" viewBox="0 0 90.5 67"><defs><linearGradient id="p1" x1="0" x2="0" y1="0" y2="1"><stop offset="0" stop-color="#eef0ea"/><stop offset="1" stop-color="#dfe5d6"/></linearGradient></defs><rect x="0" y="0" width="90.5" height="67" fill="#17110f" /><rect x="1.5" y="17" width="87.5" height="49" fill="url(#p1)" /><rect x="1.5" y="17" width="87.5" height="2.5" fill="#5f6868" /><rect x="2.5" y="20" width="30" height="2" fill="#3bb89a" /><rect x="17" y="23" width="28" height="1.2" fill="#3bb89a" /><rect x="4" y="26.5" width="82" height="1.5" fill="#7f8a8a" /><path d="M4 29.5H86M4 31.5H86M4 33.5H86" stroke="#c3cbc6" stroke-width="0.6" fill="none"/><path d="M42 27V36M60 27V36M68 27V36M76 27V36" stroke="#aab3ae" stroke-width="0.6" fill="none"/><rect x="5" y="63" width="8" height="1.8" fill="#3bb89a" /><rect x="74" y="63" width="12" height="1.8" fill="#3bb89a" /><rect x="86" y="20" width="3" height="46" fill="#a9b0a8" opacity=".5"/></svg>
<span class="t" style="left:1079.5px;top:405.07px;font-size:11.5px;color:#000;">pic1</span>
<div class="a" style="left:287px;top:430px;width:90px;height:67px;background:#e9e2e2;box-shadow:0 1px 3px rgba(0,0,0,.35);"></div>
<svg class="a" style="left:287px;top:430px;" width="90" height="67" viewBox="0 0 90 67"><defs><linearGradient id="p2" x1="0" x2="1"><stop offset="0" stop-color="#e7dcdf"/><stop offset=".55" stop-color="#f3efee"/><stop offset="1" stop-color="#e9e4e2"/></linearGradient></defs><rect x="0" y="0" width="90" height="48" fill="url(#p2)" /><rect x="0" y="0" width="90" height="1.5" fill="#6fbf9a" /><rect x="0" y="48" width="90" height="19" fill="#0d0d0d" /><rect x="0" y="46.5" width="8" height="1.5" fill="#4fb58a" /><rect x="64" y="46.5" width="24" height="1.5" fill="#4fb58a" /><path d="M2 4H44M2 6.6H44M2 9.2H44M2 11.8H44M2 14.4H44M2 17H44M2 19.6H44M2 22.2H44M2 24.8H44M2 27.4H44M2 30H44M2 32.6H44M2 35.2H44M2 37.8H44M2 40.4H44M2 43H44" stroke="#cfc3c8" stroke-width="0.6" fill="none"/><path d="M50 4H88M50 6.2H88M50 8.4H88M50 10.6H88M50 12.8H88M50 15H88M50 17.2H88M50 19.4H88M50 21.6H88M50 23.8H88M50 26H88M50 28.2H88" stroke="#d3cccc" stroke-width="0.6" fill="none"/><path d="M11 3V45M20 3V45M29 3V45M38 3V45" stroke="#dccfd3" stroke-width="0.5" fill="none"/><path d="M60 48l8 19M70 48l-3 19" stroke="#222" stroke-width=".6"/></svg>
<span class="t" style="left:323.5px;top:504.27px;font-size:11.5px;color:#000;">pic2</span>
<div class="a" style="left:395px;top:425px;width:90px;height:72px;background:#012456;box-shadow:0 1px 3px rgba(0,0,0,.35);"></div>
<svg class="a" style="left:395px;top:425px;" width="90" height="72" viewBox="0 0 90 72"><path d="M1.5 1.5h6.16M1.5 3.1h6.83M1.5 4.7h3.8M1.5 6.3h6.55M1.5 7.9h11.65M1.5 9.5h3.48M1.5 12.7h7.05M1.5 14.3h3.98M1.5 17.5h3.68M1.5 19.1h12.01M1.5 20.7h8.54M1.5 23.9h3.59M1.5 25.5h3.56M1.5 27.1h5.84M1.5 28.7h8.19M1.5 31.1h8.38M1.5 32.7h4.09M1.5 34.3h6.62M1.5 35.9h8.42M1.5 37.5h7.78M1.5 40.7h10.41M1.5 43.9h8.61M1.5 47.1h6.51M1.5 48.7h10.57M1.5 50.3h3.89M1.5 52.7h8.05M1.5 55.1h9.96M1.5 57.5h8.83M1.5 59.1h4.23M1.5 62.3h4.67M1.5 64.7h4.55M1.5 67.9h7.08M1.5 69.5h10.29" stroke="#8fa8d8" stroke-width=".7" fill="none" opacity=".75"/><path d="M58 1.5h9.24M58 4.7h7.58M58 6.3h6.91M58 7.9h18.89M58 9.5h12.11M58 11.1h13.08M58 14.3h11.94M58 15.9h20.31M58 19.1h6.98M58 20.7h18.02M58 23.1h14.08M58 26.3h20.38M58 29.5h17.48M58 31.9h7.1M58 33.5h11.88M58 36.7h7.28M58 38.3h11.08M58 39.9h13.71M58 41.5h15.1M58 43.1h15.51M58 44.7h13.56M58 46.3h7.95M58 49.5h17.53M58 52.7h10.21M58 55.1h19.61M58 58.3h7.73M58 59.9h14.27M58 62.3h17.09M58 65.5h13.81M58 67.1h10.6M58 69.5h14.22" stroke="#8fa8d8" stroke-width=".7" fill="none" opacity=".75"/><path d="M11 6h2M12 14h2M10 22h2.500M13 29h2M11 37h2M12 45h2M10 52h3M13 58h2" stroke="#d04848" stroke-width=".7"/></svg>
<span class="t" style="left:407.5px;top:504.27px;font-size:11.5px;color:#000;transform:scaleX(0.97);">Screenshot_2</span>
<div class="a" style="left:503px;top:430px;width:90px;height:67px;background:#5a666b;box-shadow:0 1px 3px rgba(0,0,0,.35);"></div>
<svg class="a" style="left:503px;top:430px;" width="90" height="67" viewBox="0 0 90 67"><rect x="0" y="0" width="90" height="67" fill="#5a666b" /><rect x="0" y="0" width="30" height="12" fill="#3f4d54" /><path d="M8 14L28 2h30l30 14v8H8z" fill="#d3d1ca"/><rect x="22" y="16" width="56" height="36" fill="#8e8e8c" /><rect x="26" y="20" width="48" height="30" fill="#4a4c4f" /><rect x="30" y="22" width="18" height="8" fill="#9a9a98" /><rect x="52" y="22" width="18" height="8" fill="#a5a5a3" /><rect x="18" y="22" width="5" height="30" fill="#d9b23a" /><rect x="68" y="22" width="5" height="30" fill="#d9b23a" /><rect x="19" y="28" width="3" height="3" fill="#222" /><rect x="69" y="28" width="3" height="3" fill="#222" /><rect x="19" y="40" width="3" height="3" fill="#222" /><rect x="69" y="40" width="3" height="3" fill="#222" /><path d="M30 36c4 2 6 8 8 16" stroke="#e3e3e3" stroke-width="4" fill="none"/><path d="M44 30c0 10 2 14 8 18s8 12 4 19" stroke="#1a1a1c" stroke-width="3.500" fill="none"/><path d="M40 34l6 8" stroke="#3a78c9" stroke-width="1.500"/><rect x="0" y="52" width="30" height="15" fill="#b93838" /><rect x="0" y="44" width="18" height="9" fill="#7d858a" /><rect x="60" y="52" width="30" height="15" fill="#6b7a84" /><path d="M28 52h34v15H24z" fill="#55595e"/><rect x="0" y="63" width="90" height="4" fill="#a83232" opacity=".7"/></svg>
<span class="t" style="left:530.25px;top:504.27px;font-size:11.5px;color:#000;transform:scaleX(0.98);">sydøst1</span>
<div class="a" style="left:611px;top:430px;width:91px;height:67px;background:#4f8aa0;box-shadow:0 1px 3px rgba(0,0,0,.35);"></div>
<svg class="a" style="left:611px;top:430px;" width="90.5" height="67" viewBox="0 0 90.5 67"><defs><linearGradient id="s2" x1="0" x2="1" y1="1" y2="0"><stop offset="0" stop-color="#3f7186"/><stop offset="1" stop-color="#5f9ab0"/></linearGradient><linearGradient id="s2b" x1="0" x2="1"><stop offset="0" stop-color="#d9d6d6"/><stop offset=".6" stop-color="#ebe6e6"/><stop offset="1" stop-color="#f3e9ea"/></linearGradient></defs><rect x="0" y="0" width="90.5" height="67" fill="url(#s2)" /><path d="M90.500 7C60 9 30 9 17 10c-4 2-5 30 0 48 20-2 50-5 73.500-6z" fill="url(#s2b)"/><g transform="rotate(-2 40 34)"><path d="M18 15H46" stroke="#555" stroke-width="1.4" fill="none"/><path d="M18 19.5H58M18 24H58M18 28.5H58M18 33H58M18 37.5H58" stroke="#3f3f3f" stroke-width="1.5" fill="none"/><path d="M18 42H48" stroke="#444" stroke-width="1.5" fill="none"/><path d="M18 46.5H54" stroke="#444" stroke-width="1.5" fill="none"/></g></svg>
<span class="t" style="left:638.25px;top:504.27px;font-size:11.5px;color:#000;transform:scaleX(0.98);">sydøst2</span>
<div class="a" style="left:713px;top:422px;width:105px;height:97px;background:#d9d9d9;"></div>
<div class="a" style="left:719px;top:430px;width:91px;height:67px;background:#121214;box-shadow:0 1px 3px rgba(0,0,0,.35);"></div>
<svg class="a" style="left:719px;top:430px;" width="90.5" height="67" viewBox="0 0 90.5 67"><rect x="0" y="0" width="90.5" height="67" fill="#121214" /><rect x="0" y="0" width="90.5" height="10" fill="#0a0a0b" /><rect x="0" y="10" width="90.5" height="13" fill="#36383d" /><rect x="10" y="14" width="30" height="6" fill="#8d9094" /><rect x="46" y="14" width="30" height="6" fill="#5d6066" /><rect x="0" y="23" width="90.5" height="16" fill="#6d7076" /><rect x="8" y="25" width="26" height="5" fill="#b5b8bc" /><rect x="44" y="25" width="40" height="5" fill="#2a2b2f" /><rect x="48" y="26" width="5" height="3" fill="#9fa4aa" /><rect x="58" y="26" width="5" height="3" fill="#9fa4aa" /><rect x="72" y="26" width="6" height="3" fill="#4a6ac0" /><rect x="0" y="39" width="90.5" height="6" fill="#3f4146" /><path d="M0 46c6-2 12-10 18-22" stroke="#4a4c58" stroke-width="5" fill="none"/><path d="M62 24c4 8 14 12 28.500 16" stroke="#3f414b" stroke-width="5" fill="none"/><path d="M24 46c14 0 30-2 52-6" stroke="#4a4c58" stroke-width="4.500" fill="none"/><path d="M24 57c14 0 26-3 46-7" stroke="#43454f" stroke-width="4.500" fill="none"/><rect x="66" y="39.5" width="14" height="3.5" fill="#dcdcdc" transform="rotate(-10 73 41)"/><rect x="58" y="48.5" width="14" height="3.5" fill="#dcdcdc" transform="rotate(-12 65 50)"/><path d="M22 20c-3 14 0 30 2 47M25 20c-1 14 1 30 1 47M28 21c1 12 0 26-2 40M20 22c-2 10-1 22 2 34M30 22c3 8 4 16 8 22M27 22c4 10 5 20 10 28" stroke="#e8732a" stroke-width="1.600" fill="none"/><path d="M0 50c8 4 12 10 14 17" stroke="#33353d" stroke-width="4" fill="none"/></svg>
<span class="t" style="left:746.25px;top:504.27px;font-size:11.5px;color:#000;transform:scaleX(0.98);">sydøst3</span>
<div class="a" style="left:827px;top:438px;width:91px;height:59px;background:#fff;box-shadow:0 1px 3px rgba(0,0,0,.35);"></div>
<svg class="a" style="left:827px;top:438px;" width="90.5" height="59" viewBox="0 0 90.5 59"><defs><pattern id="ht" width="2.500" height="2.500" patternUnits="userSpaceOnUse" patternTransform="rotate(45)"><rect width="1" height="2.500" fill="#9aa6ee"/></pattern></defs><rect x="0" y="2.5" width="73" height="10.5" fill="url(#ht)" /><path d="M0 1.5H90" stroke="#c9c9c9" stroke-width="0.5" fill="none"/><rect x="9" y="17" width="12" height="5" fill="none" stroke="#e57a7a" stroke-width=".8"/><rect x="9" y="23.5" width="12" height="5" fill="none" stroke="#e57a7a" stroke-width=".8"/><path d="M21 19.500l10 2 7 4" stroke="#e57a7a" stroke-width=".8" fill="none"/><rect x="38" y="23.5" width="8" height="4.5" fill="none" stroke="#e57a7a" stroke-width=".8"/><rect x="46" y="23.5" width="12" height="4.5" fill="none" stroke="#d86a6a" stroke-width="1"/><rect x="60" y="24" width="3.5" height="3.5" fill="none" stroke="#c4c4c4" stroke-width=".6"/><rect x="64.5" y="24" width="3.5" height="3.5" fill="none" stroke="#c4c4c4" stroke-width=".6"/><rect x="69" y="24" width="3.5" height="3.5" fill="none" stroke="#c4c4c4" stroke-width=".6"/><rect x="73.5" y="24" width="3.5" height="3.5" fill="none" stroke="#c4c4c4" stroke-width=".6"/><rect x="18" y="34" width="4" height="3.5" fill="none" stroke="#c9c9c9" stroke-width=".6"/><rect x="23.5" y="34" width="4" height="3.5" fill="none" stroke="#c9c9c9" stroke-width=".6"/><rect x="29" y="34" width="4" height="3.5" fill="none" stroke="#c9c9c9" stroke-width=".6"/><rect x="34.5" y="34" width="4" height="3.5" fill="none" stroke="#c9c9c9" stroke-width=".6"/><rect x="40" y="34" width="4" height="3.5" fill="none" stroke="#c9c9c9" stroke-width=".6"/><rect x="45.5" y="34" width="4" height="3.5" fill="none" stroke="#c9c9c9" stroke-width=".6"/><rect x="51" y="34" width="4" height="3.5" fill="none" stroke="#c9c9c9" stroke-width=".6"/><rect x="56.5" y="34" width="4" height="3.5" fill="none" stroke="#c9c9c9" stroke-width=".6"/><rect x="62" y="34" width="4" height="3.5" fill="none" stroke="#c9c9c9" stroke-width=".6"/><rect x="67.5" y="34" width="4" height="3.5" fill="none" stroke="#c9c9c9" stroke-width=".6"/><rect x="16" y="42" width="4" height="3.5" fill="none" stroke="#cfcfcf" stroke-width=".6"/><rect x="21.5" y="42" width="4" height="3.5" fill="none" stroke="#cfcfcf" stroke-width=".6"/><rect x="27" y="42" width="4" height="3.5" fill="none" stroke="#cfcfcf" stroke-width=".6"/><rect x="32.5" y="42" width="4" height="3.5" fill="none" stroke="#cfcfcf" stroke-width=".6"/><rect x="38" y="42" width="4" height="3.5" fill="none" stroke="#cfcfcf" stroke-width=".6"/><rect x="43.5" y="42" width="4" height="3.5" fill="none" stroke="#cfcfcf" stroke-width=".6"/><rect x="49" y="42" width="4" height="3.5" fill="none" stroke="#cfcfcf" stroke-width=".6"/><rect x="54.5" y="42" width="4" height="3.5" fill="none" stroke="#cfcfcf" stroke-width=".6"/><rect x="60" y="42" width="4" height="3.5" fill="none" stroke="#cfcfcf" stroke-width=".6"/><rect x="2" y="26" width="5" height="3" fill="none" stroke="#bbb" stroke-width=".6"/><rect x="5" y="36" width="9" height="9" fill="none" stroke="#bdbdbd" stroke-width=".7"/><path d="M0 57.5H90" stroke="#c9c9c9" stroke-width="0.6" fill="none"/><path d="M2 50H70M2 54H70" stroke="#d6d6d6" stroke-width="0.6" fill="none"/><path d="M76 50l8-8 6 6-8 9z" fill="none" stroke="#c9c9c9" stroke-width=".6"/><path d="M78 4l4 6M84 14l5 5" stroke="#c9c9c9" stroke-width=".6"/><path d="M30 13V56M36 13V56" stroke="#dcdcdc" stroke-width="0.5" fill="none"/></svg>
<span class="t" style="left:851px;top:504.27px;font-size:11.5px;color:#000;transform:scaleX(1.03);">telenor 1</span>
<div class="a" style="left:935px;top:450px;width:90px;height:47px;background:#fff;box-shadow:0 1px 3px rgba(0,0,0,.35);"></div>
<svg class="a" style="left:935px;top:450px;" width="90" height="47" viewBox="0 0 90 47"><defs><pattern id="ht2" width="2.500" height="2.500" patternUnits="userSpaceOnUse" patternTransform="rotate(45)"><rect width="1" height="2.500" fill="#8f9cee"/></pattern></defs><rect x="28.5" y="6" width="4" height="16" fill="url(#ht2)" /><rect x="9" y="21" width="23" height="5" fill="url(#ht2)" /><path d="M0 2H90M0 12H90M0 30H90M0 40H90M0 45H90" stroke="#d3d3d3" stroke-width="0.5" fill="none"/><path d="M8 2V46M16 2V46M22 2V46M40 2V46M52 2V46M60 2V46M70 2V46M84 2V46" stroke="#dedede" stroke-width="0.5" fill="none"/><rect x="10" y="8" width="3" height="3" fill="none" stroke="#c6c6c6" stroke-width=".5"/><rect x="14.5" y="8" width="3" height="3" fill="none" stroke="#c6c6c6" stroke-width=".5"/><rect x="19" y="8" width="3" height="3" fill="none" stroke="#c6c6c6" stroke-width=".5"/><rect x="23.5" y="8" width="3" height="3" fill="none" stroke="#c6c6c6" stroke-width=".5"/><rect x="10" y="15" width="3" height="3" fill="none" stroke="#c6c6c6" stroke-width=".5"/><rect x="14.5" y="15" width="3" height="3" fill="none" stroke="#c6c6c6" stroke-width=".5"/><rect x="19" y="15" width="3" height="3" fill="none" stroke="#c6c6c6" stroke-width=".5"/><rect x="23.5" y="15" width="3" height="3" fill="none" stroke="#c6c6c6" stroke-width=".5"/><rect x="10" y="33" width="3" height="3" fill="none" stroke="#c6c6c6" stroke-width=".5"/><rect x="14.5" y="33" width="3" height="3" fill="none" stroke="#c6c6c6" stroke-width=".5"/><rect x="19" y="33" width="3" height="3" fill="none" stroke="#c6c6c6" stroke-width=".5"/><rect x="23.5" y="33" width="3" height="3" fill="none" stroke="#c6c6c6" stroke-width=".5"/><rect x="44" y="5" width="3" height="3" fill="none" stroke="#cbcbcb" stroke-width=".5"/><rect x="48.5" y="5" width="3" height="3" fill="none" stroke="#cbcbcb" stroke-width=".5"/><rect x="53" y="5" width="3" height="3" fill="none" stroke="#cbcbcb" stroke-width=".5"/><rect x="57.5" y="5" width="3" height="3" fill="none" stroke="#cbcbcb" stroke-width=".5"/><rect x="62" y="5" width="3" height="3" fill="none" stroke="#cbcbcb" stroke-width=".5"/><rect x="44" y="14" width="3" height="3" fill="none" stroke="#cbcbcb" stroke-width=".5"/><rect x="48.5" y="14" width="3" height="3" fill="none" stroke="#cbcbcb" stroke-width=".5"/><rect x="53" y="14" width="3" height="3" fill="none" stroke="#cbcbcb" stroke-width=".5"/><rect x="57.5" y="14" width="3" height="3" fill="none" stroke="#cbcbcb" stroke-width=".5"/><rect x="62" y="14" width="3" height="3" fill="none" stroke="#cbcbcb" stroke-width=".5"/><rect x="44" y="34" width="3" height="3" fill="none" stroke="#cbcbcb" stroke-width=".5"/><rect x="48.5" y="34" width="3" height="3" fill="none" stroke="#cbcbcb" stroke-width=".5"/><rect x="53" y="34" width="3" height="3" fill="none" stroke="#cbcbcb" stroke-width=".5"/><rect x="57.5" y="34" width="3" height="3" fill="none" stroke="#cbcbcb" stroke-width=".5"/><rect x="62" y="34" width="3" height="3" fill="none" stroke="#cbcbcb" stroke-width=".5"/><path d="M12 39l22-17M15 39l22-17M10 37l4 2" stroke="#e06a6a" stroke-width=".7" fill="none"/><rect x="34" y="16" width="13" height="4.5" fill="none" stroke="#e57a7a" stroke-width=".8"/><rect x="66" y="24" width="16" height="7" fill="none" stroke="#e06a6a" stroke-width=".9"/><rect x="72" y="7" width="4.5" height="5" fill="none" stroke="#e06a6a" stroke-width=".8"/><path d="M74 12l4 12" stroke="#e06a6a" stroke-width=".7"/><rect x="70" y="42" width="16" height="3" fill="none" stroke="#bbb" stroke-width=".5"/><path d="M84 24l5-4M85 28l4 2" stroke="#9aa6ee" stroke-width=".6"/></svg>
<span class="t" style="left:959px;top:504.27px;font-size:11.5px;color:#000;transform:scaleX(1.03);">telenor 2</span>
</div>
<div class="a" style="left:0px;top:1560px;width:2560px;height:40px;background:#111;">
<div class="a" style="left:588px;top:0px;width:48px;height:40px;background:#3a3a3a;"></div>
<div class="a" style="left:634px;top:0px;width:2px;height:40px;background:#2a2a2a;"></div>
<div class="a" style="left:200px;top:38px;width:40px;height:2px;background:#76b9ed;"></div>
<div class="a" style="left:347px;top:38px;width:40px;height:2px;background:#76b9ed;"></div>
<div class="a" style="left:588px;top:38px;width:48px;height:2px;background:#76b9ed;"></div>
<div class="a" style="left:233px;top:38px;width:7px;height:2px;background:#5d8fb8;"></div>
<svg class="a" style="left:16px;top:13px;" width="17" height="17" viewBox="0 0 17 17"><path d="M0 2.400L7 1.400V8H0zM8 1.300L17 0V8H8zM0 9h7v6.600L0 14.600zM8 9h9v8L8 15.700z" fill="#fff"/></svg>
<svg class="a" style="left:63px;top:12px;" width="18" height="18" viewBox="0 0 18 18"><circle cx="11" cy="7" r="5.500" fill="none" stroke="#fff" stroke-width="1.500"/><path d="M7 11L1 17" stroke="#fff" stroke-width="1.600"/></svg>
<svg class="a" style="left:111px;top:13px;" width="19" height="17" viewBox="0 0 19 17"><rect x="1" y="4" width="11" height="9" fill="none" stroke="#fff" stroke-width="1.300"/><path d="M1 1.500h11M1 15.500h11" stroke="#fff" stroke-width="1.300"/><rect x="15" y="1" width="2" height="3" fill="#fff"/><rect x="15" y="5.500" width="2" height="11" fill="#fff"/></svg>
<span class="t" style="left:162.1px;top:4.44px;font-size:32px;color:#1f8ae6;font-weight:bold;">e</span>
<svg class="a" style="left:209px;top:10px;" width="22" height="20" viewBox="0 0 22 20"><path d="M1 2h7l2 2h11v15H1z" fill="#f4cf63"/><path d="M1 6h20v13H1z" fill="#ffe394"/><path d="M5 12h12v7H5z" fill="#3a9be0"/><path d="M8 15h6v4H8z" fill="#ffe394"/></svg>
<svg class="a" style="left:257px;top:7px;" width="23" height="24" viewBox="0 0 23 24"><path d="M7 7V5a4.500 4.500 0 0 1 9 0v2" fill="none" stroke="#fff" stroke-width="1.300"/><path d="M1 7h21v16H1z" fill="#fff"/><rect x="7" y="10" width="4" height="4" fill="#f25022"/><rect x="12" y="10" width="4" height="4" fill="#7fba00"/><rect x="7" y="15" width="4" height="4" fill="#00a4ef"/><rect x="12" y="15" width="4" height="4" fill="#ffb900"/></svg>
<svg class="a" style="left:306px;top:9px;" width="23" height="23" viewBox="0 0 23 23"><circle cx="11.500" cy="12" r="10.500" fill="#f5772b"/><path d="M11 1c5 0 11 4 11 11 0-4-3-6-5-6 2 3 0 7-3 7-4 0-5-4-3-5-3 0-4-3-3-5 1-1 2-2 3-2z" fill="#ffcb3d"/><circle cx="11" cy="12" r="5" fill="#3b4fb3"/><path d="M6 12c2-3 6-2 8 0-1 3-6 4-8 0z" fill="#f5772b"/></svg>
<svg class="a" style="left:355px;top:10px;" width="24" height="22" viewBox="0 0 24 22"><rect x="9" y="4" width="14" height="13" fill="#1a7ad4"/><path d="M10 6l6.500 5L23 6v9H10z" fill="#fff"/><path d="M0 2.500L13 0v22L0 19.500z" fill="#0f5fb0"/><ellipse cx="6.500" cy="11" rx="3" ry="4" fill="none" stroke="#fff" stroke-width="1.800"/></svg>
<svg class="a" style="left:404px;top:11px;" width="21" height="20" viewBox="0 0 21 20"><path d="M2 1h18v18h-5V6H2z" fill="#cfd4d8"/><path d="M6 8h8v11h-3v-8H6z" fill="#8a9399"/><rect x="2" y="14" width="5" height="5" fill="#1aa0e0"/></svg>
<svg class="a" style="left:452px;top:8px;" width="24" height="25" viewBox="0 0 24 25"><rect width="24" height="25" fill="#0d2a5c"/><path d="M3 21L9 7l2 9 3-12 2 12 3-8 2 13z" fill="#fff"/></svg>
<svg class="a" style="left:502px;top:9px;" width="23" height="22" viewBox="0 0 23 22"><rect x="0" y="0" width="23" height="17" rx="2" fill="#f4f4f4"/><path d="M5.500 13a1.300 1.300 0 1 0 .100 0M5 9a4.500 4.500 0 0 1 4.500 4.500M5 5.500a8 8 0 0 1 8 8M5 2.300a11.200 11.200 0 0 1 11.200 11.200" stroke="#d6202a" stroke-width="1.800" fill="none"/><rect x="7" y="18.500" width="9" height="2" fill="#bdbdbd"/></svg>
<svg class="a" style="left:551px;top:10px;" width="23" height="22" viewBox="0 0 23 22"><rect x="9" y="2" width="13" height="18" fill="#fff"/><path d="M11 5h10M11 8h10M11 11h10M11 14h10M11 17h10M15 2v18" stroke="#1e7145" stroke-width="1.200"/><path d="M0 2.500L13 0v22L0 19.500z" fill="#1e7145"/><path d="M4 7l5 8M9 7l-5 8" stroke="#fff" stroke-width="1.800"/></svg>
<svg class="a" style="left:600px;top:10px;" width="23" height="22" viewBox="0 0 23 22"><rect x="9" y="2" width="13" height="18" fill="#fff"/><path d="M14 6h7M14 9h7M14 12h7M14 15h7" stroke="#2b579a" stroke-width="1.300"/><path d="M0 2.500L13 0v22L0 19.500z" fill="#2b579a"/><path d="M2.500 7l1.800 8 2-8 2 8 1.800-8" stroke="#fff" stroke-width="1.500" fill="none"/></svg>
<span class="t" style="left:651.66px;top:6.35px;font-size:30px;color:#35b4ef;font-weight:bold;">e</span>
<svg class="a" style="left:646px;top:7px;" width="30" height="26" viewBox="0 0 30 26"><ellipse cx="15" cy="13" rx="14" ry="6" fill="none" stroke="#f2c223" stroke-width="1.800" transform="rotate(-28 15 13)"/></svg>
<svg class="a" style="left:698px;top:9px;" width="22" height="24" viewBox="0 0 22 24"><path d="M6 2l14 2-4 19L1 20z" fill="#bfe2ee"/><path d="M6 2l14 2-1 3L5 5z" fill="#7f99a8"/><path d="M5 9l11 1.500M4 13l11 1.500M3 17l11 1.500" stroke="#8fb7c6" stroke-width="1"/></svg>
<svg class="a" style="left:747px;top:9px;" width="23" height="23" viewBox="0 0 23 23"><path d="M1 1h19l2 2v19H1z" fill="#3f48cc"/><rect x="5" y="1" width="12" height="7" fill="#c9cde8"/><rect x="4" y="12" width="15" height="10" fill="#fff"/><rect x="4" y="14" width="15" height="2" fill="#d6202a"/></svg>
<svg class="a" style="left:796px;top:8px;" width="24" height="25" viewBox="0 0 24 25"><defs><linearGradient id="rdp" x1="0" x2="1" y1="0" y2="1"><stop offset="0" stop-color="#5f8df0"/><stop offset="1" stop-color="#1a3fc0"/></linearGradient></defs><rect x="1.500" y="1" width="19" height="15" rx="1" fill="url(#rdp)" stroke="#cfd8e6" stroke-width="1.200"/><path d="M8 16.500h6l1.500 4h-9z" fill="#b9c0c8"/><rect x="4" y="20.500" width="14" height="2" rx="1" fill="#d5dade"/><circle cx="18" cy="18.500" r="5" fill="#d8dcd8" stroke="#8a8f8a" stroke-width=".6"/><path d="M14.800 17.500h3l-1.200-1.300M21.200 19.500h-3l1.200 1.300" stroke="#2f9a3a" stroke-width="1.100" fill="none"/></svg>
<svg class="a" style="left:2247px;top:10px;" width="20" height="20" viewBox="0 0 20 20"><circle cx="7" cy="8" r="3.200" fill="none" stroke="#fff" stroke-width="1.300"/><path d="M1 18c0-7 12-7 12 0" fill="none" stroke="#fff" stroke-width="1.300"/><circle cx="14.500" cy="4" r="2.500" fill="none" stroke="#fff" stroke-width="1.300"/><path d="M12 9c3-2 7 0 7 4" fill="none" stroke="#fff" stroke-width="1.300"/></svg>
<svg class="a" style="left:2286px;top:15px;" width="14" height="9" viewBox="0 0 14 9"><path d="M1 8l6-6.500L13 8" fill="none" stroke="#fff" stroke-width="1.400"/></svg>
<svg class="a" style="left:2308px;top:13px;" width="17" height="15" viewBox="0 0 17 15"><rect x="4" y="1" width="12" height="8.500" fill="none" stroke="#fff" stroke-width="1.300"/><rect x="1" y="1" width="4" height="3.500" fill="#111" stroke="#fff" stroke-width="1"/><path d="M10 9.500V13M6 13.500h8" stroke="#fff" stroke-width="1.300"/></svg>
<svg class="a" style="left:2332px;top:13px;" width="18" height="12" viewBox="0 0 18 12"><path d="M4 11a3.200 3.200 0 0 1 .500-6.300 4.300 4.300 0 0 1 7.800-.600 3.500 3.500 0 0 1 1.200 6.900z" fill="#fff"/></svg>
<svg class="a" style="left:2358px;top:13px;" width="15" height="14" viewBox="0 0 15 14"><path d="M4 0l3.500 2.300L4 4.600.500 2.300zM11 0l3.500 2.300L11 4.600 7.500 2.300zM4 4.700l3.500 2.300L4 9.300.500 7zM11 4.700l3.500 2.300L11 9.300 7.500 7zM7.500 7.800l3.200 2.200-3.200 2.200L4.300 10z" fill="#fff"/></svg>
<svg class="a" style="left:2379px;top:13px;" width="18" height="14" viewBox="0 0 18 14"><path d="M1 5h3l4-4v12l-4-4H1z" fill="none" stroke="#fff" stroke-width="1.200"/><path d="M11 4.500l5 5M16 4.500l-5 5" stroke="#fff" stroke-width="1.200"/></svg>
<span class="t" style="left:2406px;top:14.77px;font-size:11.5px;color:#fff;transform:scaleX(1.03);">DAN</span>
<span class="t" style="left:2458.5px;top:5.27px;font-size:11.5px;color:#fff;transform:scaleX(0.94);">13:28</span>
<span class="t" style="left:2443px;top:22.77px;font-size:11.5px;color:#fff;transform:scaleX(0.99);">24-09-2018</span>
<svg class="a" style="left:2517px;top:11px;" width="20" height="18" viewBox="0 0 20 18"><path d="M1 1h17v12H8l-4 4v-4H1z" fill="#fff"/><path d="M4 4.500h11M4 7.500h11M4 10.500h6" stroke="#111" stroke-width="1"/><circle cx="16" cy="14" r="3" fill="#111" stroke="#fff" stroke-width="1"/></svg>
<div class="a" style="left:2555px;top:0px;width:1px;height:40px;background:#555;"></div>
</div>
</body></html>
